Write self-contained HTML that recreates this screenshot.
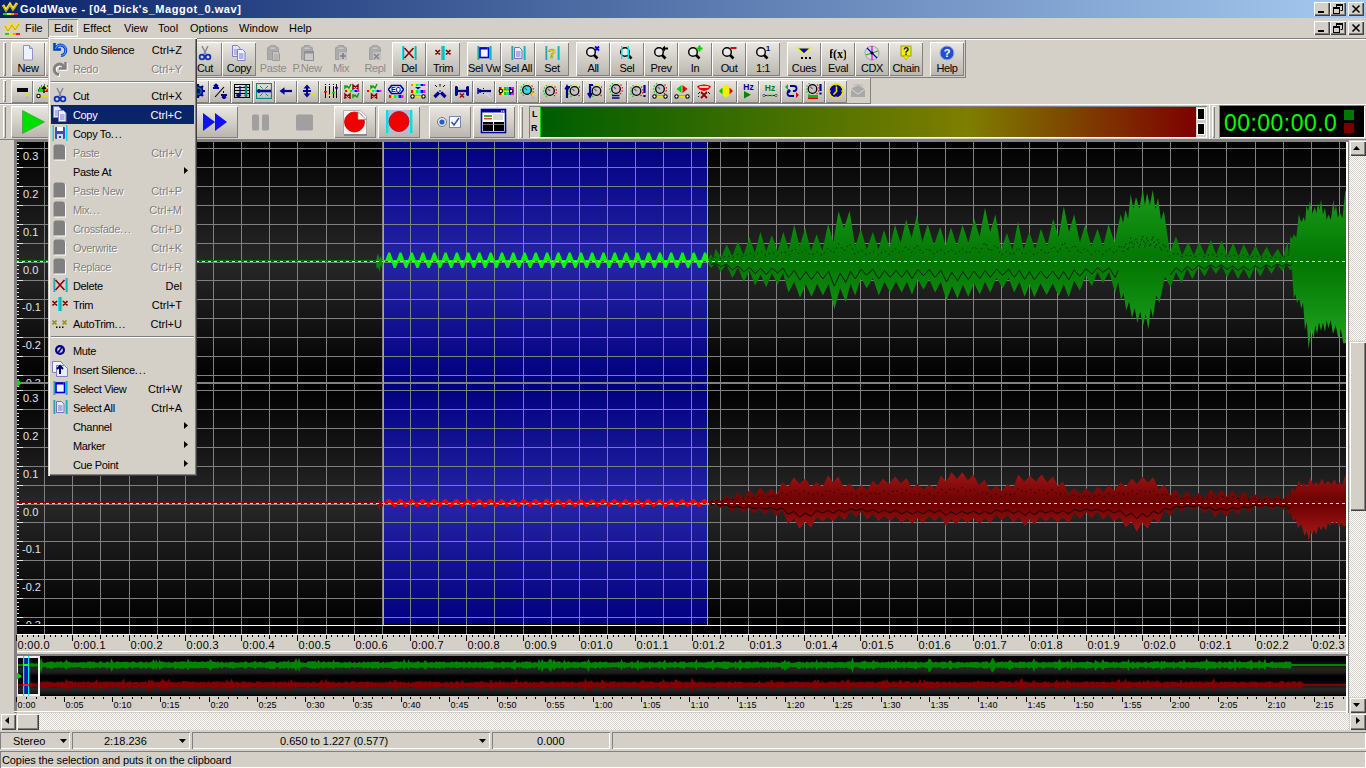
<!DOCTYPE html><html><head><meta charset="utf-8"><style>html,body{margin:0;padding:0;}body{width:1366px;height:768px;overflow:hidden;position:relative;background:#D4D0C8;font-family:"Liberation Sans",sans-serif;font-size:11px;}body div,body svg{position:absolute;}body div div{position:absolute;}</style></head><body><div style="left:0px;top:0px;width:1366px;height:18px;background:linear-gradient(to right,#0A246A,#A6CAF0);"></div>
<svg style="left:2px;top:1px" width="17" height="16" viewBox="0 0 17 16"><polyline points="1,4 4,9 8,3 11,8 15,2" fill="none" stroke="#F8E030" stroke-width="2.6" stroke-linejoin="miter"/><polyline points="1,5 4,10 8,4 11,9 15,3" fill="none" stroke="#C8A000" stroke-width="1"/><rect x="1" y="12" width="4" height="2" fill="#20D020"/><rect x="5" y="12" width="4" height="2" fill="#E8E820"/><rect x="9" y="12" width="3" height="2" fill="#F0A020"/><rect x="12" y="12" width="4" height="2" fill="#F02020"/></svg>
<div style="left:20px;top:2.19px;font-size:11px;line-height:14px;color:#fff;font-weight:bold;letter-spacing:0.55px;white-space:pre">GoldWave - [04_Dick's_Maggot_0.wav]</div>
<div style="left:1314px;top:2px;width:16px;height:14px;background:#D4D0C8;box-shadow:inset 1px 1px 0 #fff, inset -1px -1px 0 #404040, inset -2px -2px 0 #808080;"></div>
<div style="left:1318px;top:11px;width:6px;height:2px;background:#000;"></div>
<div style="left:1330px;top:2px;width:16px;height:14px;background:#D4D0C8;box-shadow:inset 1px 1px 0 #fff, inset -1px -1px 0 #404040, inset -2px -2px 0 #808080;"></div>
<svg style="left:1330px;top:2px" width="16" height="14"><path d="M6.5 3.5h6v5h-2M6.5 3.5v2" fill="none" stroke="#000"/><rect x="6" y="2" width="7" height="2" fill="#000"/><rect x="3.5" y="6.5" width="6" height="5" fill="none" stroke="#000"/><rect x="3" y="5" width="7" height="2" fill="#000"/></svg>
<div style="left:1348px;top:2px;width:16px;height:14px;background:#D4D0C8;box-shadow:inset 1px 1px 0 #fff, inset -1px -1px 0 #404040, inset -2px -2px 0 #808080;"></div>
<svg style="left:1348px;top:2px" width="16" height="14"><path d="M4.5 3.5l7 7M11.5 3.5l-7 7" stroke="#000" stroke-width="1.6"/></svg>
<div style="left:1314px;top:21px;width:16px;height:14px;background:#D4D0C8;box-shadow:inset 1px 1px 0 #fff, inset -1px -1px 0 #404040, inset -2px -2px 0 #808080;"></div>
<div style="left:1318px;top:30px;width:6px;height:2px;background:#000;"></div>
<div style="left:1330px;top:21px;width:16px;height:14px;background:#D4D0C8;box-shadow:inset 1px 1px 0 #fff, inset -1px -1px 0 #404040, inset -2px -2px 0 #808080;"></div>
<svg style="left:1330px;top:21px" width="16" height="14"><path d="M6.5 3.5h6v5h-2M6.5 3.5v2" fill="none" stroke="#000"/><rect x="6" y="2" width="7" height="2" fill="#000"/><rect x="3.5" y="6.5" width="6" height="5" fill="none" stroke="#000"/><rect x="3" y="5" width="7" height="2" fill="#000"/></svg>
<div style="left:1348px;top:21px;width:16px;height:14px;background:#D4D0C8;box-shadow:inset 1px 1px 0 #fff, inset -1px -1px 0 #404040, inset -2px -2px 0 #808080;"></div>
<svg style="left:1348px;top:21px" width="16" height="14"><path d="M4.5 3.5l7 7M11.5 3.5l-7 7" stroke="#000" stroke-width="1.6"/></svg>
<svg style="left:4px;top:21px" width="17" height="16" viewBox="0 0 17 16"><polyline points="1,4 4,9 8,3 11,8 15,2" fill="none" stroke="#F8E030" stroke-width="2.6" stroke-linejoin="miter"/><polyline points="1,5 4,10 8,4 11,9 15,3" fill="none" stroke="#C8A000" stroke-width="1"/><rect x="1" y="12" width="4" height="2" fill="#20D020"/><rect x="5" y="12" width="4" height="2" fill="#E8E820"/><rect x="9" y="12" width="3" height="2" fill="#F0A020"/><rect x="12" y="12" width="4" height="2" fill="#F02020"/></svg>
<div style="left:48px;top:19px;width:30px;height:18px;box-shadow:inset 1px 1px 0 #808080, inset -1px -1px 0 #fff;"></div>
<div style="left:25px;top:21.19px;font-size:11px;line-height:14px;color:#000;white-space:pre">File</div>
<div style="left:54px;top:21.19px;font-size:11px;line-height:14px;color:#000;white-space:pre">Edit</div>
<div style="left:83px;top:21.19px;font-size:11px;line-height:14px;color:#000;white-space:pre">Effect</div>
<div style="left:124px;top:21.19px;font-size:11px;line-height:14px;color:#000;white-space:pre">View</div>
<div style="left:158px;top:21.19px;font-size:11px;line-height:14px;color:#000;white-space:pre">Tool</div>
<div style="left:190px;top:21.19px;font-size:11px;line-height:14px;color:#000;white-space:pre">Options</div>
<div style="left:239px;top:21.19px;font-size:11px;line-height:14px;color:#000;white-space:pre">Window</div>
<div style="left:289px;top:21.19px;font-size:11px;line-height:14px;color:#000;white-space:pre">Help</div>
<div style="left:0px;top:38px;width:1366px;height:1px;background:#808080;"></div>
<div style="left:0px;top:39px;width:1366px;height:1px;background:#fff;"></div>
<div style="left:0px;top:77px;width:966px;height:1px;background:#808080;"></div>
<div style="left:965px;top:40px;width:1px;height:37px;background:#808080;"></div>
<div style="left:3px;top:42px;width:3px;height:34px;box-shadow:inset 1px 1px 0 #fff, inset -1px -1px 0 #808080;"></div>
<div style="left:0px;top:78px;width:871px;height:1px;background:#fff;"></div>
<div style="left:0px;top:103px;width:871px;height:1px;background:#808080;"></div>
<div style="left:0px;top:104px;width:1366px;height:1px;background:#fff;"></div>
<div style="left:870px;top:78px;width:1px;height:26px;background:#808080;"></div>
<div style="left:3px;top:80px;width:3px;height:22px;box-shadow:inset 1px 1px 0 #fff, inset -1px -1px 0 #808080;"></div>
<div style="left:11px;top:42px;width:34px;height:34px;background:linear-gradient(#EBE8E3,#B9B5AD);box-shadow:inset 1px 1px 0 #fff, inset -1px -1px 0 #808080;"></div>
<svg style="left:20px;top:45px" width="16" height="16" viewBox="0 0 16 16"><path d="M3.5 0.5h6l3 3v11.5h-9z" fill="#eef4ff" stroke="#9090c8"/><path d="M9.5 0.5v3h3" fill="#c8c8d8" stroke="#9090c8"/></svg>
<div style="left:11px;top:61.19px;font-size:11px;line-height:14px;color:#000;width:34px;text-align:center;letter-spacing:-0.35px;white-space:pre">New</div>
<div style="left:45px;top:42px;width:34px;height:34px;background:linear-gradient(#EBE8E3,#B9B5AD);box-shadow:inset 1px 1px 0 #fff, inset -1px -1px 0 #808080;"></div>
<svg style="left:54px;top:45px" width="16" height="16" viewBox="0 0 16 16"><path d="M1 4h5l1 1h7v9h-13z" fill="#f0d060" stroke="#806000"/></svg>
<div style="left:45px;top:61.19px;font-size:11px;line-height:14px;color:#000;width:34px;text-align:center;letter-spacing:-0.35px;white-space:pre">Open</div>
<div style="left:79px;top:42px;width:34px;height:34px;background:linear-gradient(#EBE8E3,#B9B5AD);box-shadow:inset 1px 1px 0 #fff, inset -1px -1px 0 #808080;"></div>
<svg style="left:88px;top:45px" width="16" height="16" viewBox="0 0 16 16"><rect x="2" y="2" width="12" height="12" fill="#4040a0"/><rect x="4" y="2" width="8" height="5" fill="#fff"/></svg>
<div style="left:79px;top:61.19px;font-size:11px;line-height:14px;color:#000;width:34px;text-align:center;letter-spacing:-0.35px;white-space:pre">Save</div>
<div style="left:120px;top:42px;width:34px;height:34px;background:linear-gradient(#EBE8E3,#B9B5AD);box-shadow:inset 1px 1px 0 #fff, inset -1px -1px 0 #808080;"></div>
<svg style="left:129px;top:45px" width="16" height="16" viewBox="0 0 16 16"><path d="M3 3v5h5" fill="none" stroke="#2060d0" stroke-width="2.4"/><path d="M4 8a5 5 0 1 1 5 6" fill="none" stroke="#2060d0" stroke-width="2.4"/></svg>
<div style="left:120px;top:61.19px;font-size:11px;line-height:14px;color:#000;width:34px;text-align:center;letter-spacing:-0.35px;white-space:pre">Undo</div>
<div style="left:188px;top:42px;width:34px;height:34px;background:linear-gradient(#EBE8E3,#B9B5AD);box-shadow:inset 1px 1px 0 #fff, inset -1px -1px 0 #808080;"></div>
<svg style="left:197px;top:45px" width="16" height="16" viewBox="0 0 16 16"><path d="M5 1l4 8M11 1l-4 8" stroke="#8080a0" stroke-width="1.4"/><circle cx="5" cy="12" r="2.4" fill="none" stroke="#1030c0" stroke-width="1.8"/><circle cx="11" cy="12" r="2.4" fill="none" stroke="#1030c0" stroke-width="1.8"/></svg>
<div style="left:188px;top:61.19px;font-size:11px;line-height:14px;color:#000;width:34px;text-align:center;letter-spacing:-0.35px;white-space:pre">Cut</div>
<div style="left:222px;top:42px;width:34px;height:34px;background:linear-gradient(#EBE8E3,#B9B5AD);box-shadow:inset 1px 1px 0 #fff, inset -1px -1px 0 #808080;"></div>
<svg style="left:231px;top:45px" width="16" height="16" viewBox="0 0 16 16"><path d="M1.5 0.5h5l2.5 2.5v8.5h-7.5z" fill="#dfe6ff" stroke="#8080c8"/><path d="M3 5h4M3 7h4M3 9h4" stroke="#8080c8" stroke-width="0.9"/><path d="M6.5 4.5h5l2.5 2.5v8.5h-7.5z" fill="#eef2ff" stroke="#8080c8"/><path d="M8 9h4.5M8 11h4.5M8 13h4.5" stroke="#6a6ab8" stroke-width="0.9"/></svg>
<div style="left:222px;top:61.19px;font-size:11px;line-height:14px;color:#000;width:34px;text-align:center;letter-spacing:-0.35px;white-space:pre">Copy</div>
<svg style="left:265px;top:45px" width="16" height="16" viewBox="0 0 16 16"><path d="M2.5 3.5q0-1.5 1.5-1.5h1.5v-1q0-1 1-1h3q1 0 1 1v1h1.5q1.5 0 1.5 1.5v11h-11z" fill="#ABABAB" stroke="#989898" stroke-width="0.8"/><rect x="5.5" y="2.5" width="5" height="1.5" fill="#c8c8c8"/><path d="M7.5 6.5h5l2 2v7h-7z" fill="#c4c4c4" stroke="#999"/><path d="M9 10h4.5M9 12h4.5M9 14h4.5" stroke="#a0a0a0" stroke-width="0.8"/></svg>
<div style="left:256px;top:61.19px;font-size:11px;line-height:14px;color:#8C8C8C;width:34px;text-align:center;letter-spacing:-0.35px;white-space:pre">Paste</div>
<svg style="left:299px;top:45px" width="16" height="16" viewBox="0 0 16 16"><path d="M2.5 3.5q0-1.5 1.5-1.5h1.5v-1q0-1 1-1h3q1 0 1 1v1h1.5q1.5 0 1.5 1.5v11h-11z" fill="#ABABAB" stroke="#989898" stroke-width="0.8"/><rect x="5.5" y="2.5" width="5" height="1.5" fill="#c8c8c8"/><rect x="5.5" y="6.5" width="9" height="9" fill="#c8c8c8" stroke="#909090"/><rect x="5.5" y="6.5" width="9" height="2" fill="#909090"/></svg>
<div style="left:290px;top:61.19px;font-size:11px;line-height:14px;color:#8C8C8C;width:34px;text-align:center;letter-spacing:-0.35px;white-space:pre">P.New</div>
<svg style="left:333px;top:45px" width="16" height="16" viewBox="0 0 16 16"><path d="M2.5 3.5q0-1.5 1.5-1.5h1.5v-1q0-1 1-1h3q1 0 1 1v1h1.5q1.5 0 1.5 1.5v11h-11z" fill="#ABABAB" stroke="#989898" stroke-width="0.8"/><rect x="5.5" y="2.5" width="5" height="1.5" fill="#c8c8c8"/><rect x="6" y="7" width="8" height="8" fill="#c0c0c0"/><path d="M10 8v6M7 11h6" stroke="#808080" stroke-width="1.6"/></svg>
<div style="left:324px;top:61.19px;font-size:11px;line-height:14px;color:#8C8C8C;width:34px;text-align:center;letter-spacing:-0.35px;white-space:pre">Mix</div>
<svg style="left:367px;top:45px" width="16" height="16" viewBox="0 0 16 16"><path d="M2.5 3.5q0-1.5 1.5-1.5h1.5v-1q0-1 1-1h3q1 0 1 1v1h1.5q1.5 0 1.5 1.5v11h-11z" fill="#ABABAB" stroke="#989898" stroke-width="0.8"/><rect x="5.5" y="2.5" width="5" height="1.5" fill="#c8c8c8"/><rect x="6" y="7" width="8" height="8" fill="#c0c0c0"/><path d="M7 9l5 5M12 9l-5 5" stroke="#808080" stroke-width="1.2"/></svg>
<div style="left:358px;top:61.19px;font-size:11px;line-height:14px;color:#8C8C8C;width:34px;text-align:center;letter-spacing:-0.35px;white-space:pre">Repl</div>
<div style="left:392px;top:42px;width:34px;height:34px;background:linear-gradient(#EBE8E3,#B9B5AD);box-shadow:inset 1px 1px 0 #fff, inset -1px -1px 0 #808080;"></div>
<svg style="left:401px;top:45px" width="16" height="16" viewBox="0 0 16 16"><rect x="1" y="1" width="1.6" height="14" fill="#00E8F0"/><rect x="13.4" y="1" width="1.6" height="14" fill="#00E8F0"/><rect x="2.4" y="1" width="0.8" height="14" fill="#008080"/><rect x="14.6" y="1" width="0.8" height="14" fill="#008080"/><path d="M3.5 3l9 10M12.5 3l-9 10" stroke="#900000" stroke-width="1.6"/></svg>
<div style="left:392px;top:61.19px;font-size:11px;line-height:14px;color:#000;width:34px;text-align:center;letter-spacing:-0.35px;white-space:pre">Del</div>
<div style="left:426px;top:42px;width:34px;height:34px;background:linear-gradient(#EBE8E3,#B9B5AD);box-shadow:inset 1px 1px 0 #fff, inset -1px -1px 0 #808080;"></div>
<svg style="left:435px;top:45px" width="16" height="16" viewBox="0 0 16 16"><rect x="6" y="1" width="1.6" height="14" fill="#00E8F0"/><rect x="8.6" y="1" width="1.6" height="14" fill="#00E8F0"/><rect x="7.6" y="1" width="1" height="14" fill="#008080"/><path d="M0.5 5l4.5 4.5M5 5l-4.5 4.5M11 5l4.5 4.5M15.5 5l-4.5 4.5" stroke="#900000" stroke-width="1.7"/></svg>
<div style="left:426px;top:61.19px;font-size:11px;line-height:14px;color:#000;width:34px;text-align:center;letter-spacing:-0.35px;white-space:pre">Trim</div>
<div style="left:467px;top:42px;width:34px;height:34px;background:linear-gradient(#EBE8E3,#B9B5AD);box-shadow:inset 1px 1px 0 #fff, inset -1px -1px 0 #808080;"></div>
<svg style="left:476px;top:45px" width="16" height="16" viewBox="0 0 16 16"><rect x="1" y="1" width="1.6" height="14" fill="#00E8F0"/><rect x="13.4" y="1" width="1.6" height="14" fill="#00E8F0"/><rect x="2.4" y="1" width="0.8" height="14" fill="#008080"/><rect x="14.6" y="1" width="0.8" height="14" fill="#008080"/><rect x="4" y="3" width="8.5" height="9.5" fill="#f0f4ff" stroke="#0000e0" stroke-width="1.6"/><rect x="4" y="2.5" width="8.5" height="2" fill="#0000d0"/><rect x="11" y="2.6" width="1" height="1" fill="#f04040"/></svg>
<div style="left:467px;top:61.19px;font-size:11px;line-height:14px;color:#000;width:34px;text-align:center;letter-spacing:-0.35px;white-space:pre">Sel Vw</div>
<div style="left:501px;top:42px;width:34px;height:34px;background:linear-gradient(#EBE8E3,#B9B5AD);box-shadow:inset 1px 1px 0 #fff, inset -1px -1px 0 #808080;"></div>
<svg style="left:510px;top:45px" width="16" height="16" viewBox="0 0 16 16"><rect x="1" y="1" width="1.6" height="14" fill="#00E8F0"/><rect x="13.4" y="1" width="1.6" height="14" fill="#00E8F0"/><rect x="2.4" y="1" width="0.8" height="14" fill="#008080"/><rect x="14.6" y="1" width="0.8" height="14" fill="#008080"/><path d="M4.5 2.5h5l2.5 2.5v8.5h-7.5z" fill="#e8ecff" stroke="#7070c0"/><path d="M6 7h4.5M6 9h4.5M6 11h4.5" stroke="#7070c0"/></svg>
<div style="left:501px;top:61.19px;font-size:11px;line-height:14px;color:#000;width:34px;text-align:center;letter-spacing:-0.35px;white-space:pre">Sel All</div>
<div style="left:535px;top:42px;width:34px;height:34px;background:linear-gradient(#EBE8E3,#B9B5AD);box-shadow:inset 1px 1px 0 #fff, inset -1px -1px 0 #808080;"></div>
<svg style="left:544px;top:45px" width="16" height="16" viewBox="0 0 16 16"><rect x="1" y="1" width="1.6" height="14" fill="#00E8F0"/><rect x="13.4" y="1" width="1.6" height="14" fill="#00E8F0"/><rect x="2.4" y="1" width="0.8" height="14" fill="#008080"/><rect x="14.6" y="1" width="0.8" height="14" fill="#008080"/><text x="8" y="12.5" text-anchor="middle" font-family="Liberation Sans" font-weight="bold" font-size="13" fill="#F0F000" stroke="#808000" stroke-width="0.4">?</text></svg>
<div style="left:535px;top:61.19px;font-size:11px;line-height:14px;color:#000;width:34px;text-align:center;letter-spacing:-0.35px;white-space:pre">Set</div>
<div style="left:576px;top:42px;width:34px;height:34px;background:linear-gradient(#EBE8E3,#B9B5AD);box-shadow:inset 1px 1px 0 #fff, inset -1px -1px 0 #808080;"></div>
<svg style="left:585px;top:45px" width="16" height="16" viewBox="0 0 16 16"><circle cx="6" cy="7" r="4.3" fill="#e8e8e8" stroke="#000" stroke-width="1.4"/><path d="M9 10l3.5 3.5" stroke="#000" stroke-width="2.6"/><path d="M5 5.5l1.5-1" stroke="#fff" stroke-width="1"/><path d="M10 1.5l4 4M14 1.5l-4 4" stroke="#0000ff" stroke-width="1.8"/></svg>
<div style="left:576px;top:61.19px;font-size:11px;line-height:14px;color:#000;width:34px;text-align:center;letter-spacing:-0.35px;white-space:pre">All</div>
<div style="left:610px;top:42px;width:34px;height:34px;background:linear-gradient(#EBE8E3,#B9B5AD);box-shadow:inset 1px 1px 0 #fff, inset -1px -1px 0 #808080;"></div>
<svg style="left:619px;top:45px" width="16" height="16" viewBox="0 0 16 16"><circle cx="6" cy="7" r="4.3" fill="#e8e8e8" stroke="#000" stroke-width="1.4"/><path d="M9 10l3.5 3.5" stroke="#000" stroke-width="2.6"/><path d="M5 5.5l1.5-1" stroke="#fff" stroke-width="1"/><rect x="2" y="1" width="1.5" height="13" fill="#00e8f0"/><rect x="8.5" y="1" width="1.5" height="13" fill="#00e8f0"/></svg>
<div style="left:610px;top:61.19px;font-size:11px;line-height:14px;color:#000;width:34px;text-align:center;letter-spacing:-0.35px;white-space:pre">Sel</div>
<div style="left:644px;top:42px;width:34px;height:34px;background:linear-gradient(#EBE8E3,#B9B5AD);box-shadow:inset 1px 1px 0 #fff, inset -1px -1px 0 #808080;"></div>
<svg style="left:653px;top:45px" width="16" height="16" viewBox="0 0 16 16"><circle cx="6" cy="7" r="4.3" fill="#e8e8e8" stroke="#000" stroke-width="1.4"/><path d="M9 10l3.5 3.5" stroke="#000" stroke-width="2.6"/><path d="M5 5.5l1.5-1" stroke="#fff" stroke-width="1"/><path d="M10 3.5h5" stroke="#000" stroke-width="2"/><path d="M9 3.5l3-3v6z" fill="#000"/></svg>
<div style="left:644px;top:61.19px;font-size:11px;line-height:14px;color:#000;width:34px;text-align:center;letter-spacing:-0.35px;white-space:pre">Prev</div>
<div style="left:678px;top:42px;width:34px;height:34px;background:linear-gradient(#EBE8E3,#B9B5AD);box-shadow:inset 1px 1px 0 #fff, inset -1px -1px 0 #808080;"></div>
<svg style="left:687px;top:45px" width="16" height="16" viewBox="0 0 16 16"><circle cx="6" cy="7" r="4.3" fill="#e8e8e8" stroke="#000" stroke-width="1.4"/><path d="M9 10l3.5 3.5" stroke="#000" stroke-width="2.6"/><path d="M5 5.5l1.5-1" stroke="#fff" stroke-width="1"/><path d="M12.5 0.5v6M9.5 3.5h6" stroke="#00d000" stroke-width="2.2"/></svg>
<div style="left:678px;top:61.19px;font-size:11px;line-height:14px;color:#000;width:34px;text-align:center;letter-spacing:-0.35px;white-space:pre">In</div>
<div style="left:712px;top:42px;width:34px;height:34px;background:linear-gradient(#EBE8E3,#B9B5AD);box-shadow:inset 1px 1px 0 #fff, inset -1px -1px 0 #808080;"></div>
<svg style="left:721px;top:45px" width="16" height="16" viewBox="0 0 16 16"><circle cx="6" cy="7" r="4.3" fill="#e8e8e8" stroke="#000" stroke-width="1.4"/><path d="M9 10l3.5 3.5" stroke="#000" stroke-width="2.6"/><path d="M5 5.5l1.5-1" stroke="#fff" stroke-width="1"/><path d="M9.5 3h6" stroke="#e00000" stroke-width="2"/></svg>
<div style="left:712px;top:61.19px;font-size:11px;line-height:14px;color:#000;width:34px;text-align:center;letter-spacing:-0.35px;white-space:pre">Out</div>
<div style="left:746px;top:42px;width:34px;height:34px;background:linear-gradient(#EBE8E3,#B9B5AD);box-shadow:inset 1px 1px 0 #fff, inset -1px -1px 0 #808080;"></div>
<svg style="left:755px;top:45px" width="16" height="16" viewBox="0 0 16 16"><circle cx="6" cy="7" r="4.3" fill="#e8e8e8" stroke="#000" stroke-width="1.4"/><path d="M9 10l3.5 3.5" stroke="#000" stroke-width="2.6"/><path d="M5 5.5l1.5-1" stroke="#fff" stroke-width="1"/><text x="13" y="6" text-anchor="middle" font-family="Liberation Sans" font-weight="bold" font-size="8" fill="#000090">1</text></svg>
<div style="left:746px;top:61.19px;font-size:11px;line-height:14px;color:#000;width:34px;text-align:center;letter-spacing:-0.35px;white-space:pre">1:1</div>
<div style="left:787px;top:42px;width:34px;height:34px;background:linear-gradient(#EBE8E3,#B9B5AD);box-shadow:inset 1px 1px 0 #fff, inset -1px -1px 0 #808080;"></div>
<svg style="left:796px;top:45px" width="16" height="16" viewBox="0 0 16 16"><path d="M1.5 3h13l-6.5 6z" fill="#0000e0" stroke="#f0f000" stroke-width="1.2"/><rect x="5" y="12" width="2" height="2" fill="#000"/><rect x="9" y="12" width="2" height="2" fill="#000"/><rect x="13" y="12" width="2" height="2" fill="#000"/></svg>
<div style="left:787px;top:61.19px;font-size:11px;line-height:14px;color:#000;width:34px;text-align:center;letter-spacing:-0.35px;white-space:pre">Cues</div>
<div style="left:821px;top:42px;width:34px;height:34px;background:linear-gradient(#EBE8E3,#B9B5AD);box-shadow:inset 1px 1px 0 #fff, inset -1px -1px 0 #808080;"></div>
<svg style="left:830px;top:45px" width="16" height="16" viewBox="0 0 16 16"><text x="8" y="13" text-anchor="middle" font-family="Liberation Serif" font-weight="bold" font-size="12" fill="#000">f(x)</text></svg>
<div style="left:821px;top:61.19px;font-size:11px;line-height:14px;color:#000;width:34px;text-align:center;letter-spacing:-0.35px;white-space:pre">Eval</div>
<div style="left:855px;top:42px;width:34px;height:34px;background:linear-gradient(#EBE8E3,#B9B5AD);box-shadow:inset 1px 1px 0 #fff, inset -1px -1px 0 #808080;"></div>
<svg style="left:864px;top:45px" width="16" height="16" viewBox="0 0 16 16"><circle cx="8" cy="8" r="7" fill="#d8d8d8" stroke="#a0a0a0"/><path d="M3 3l10 10" stroke="#0000d0" stroke-width="1.3"/><path d="M8 1v14" stroke="#f000f0" stroke-width="1.3"/><path d="M2 10l12-4" stroke="#00c000" stroke-width="1.3"/><circle cx="8" cy="8" r="1.5" fill="#000"/></svg>
<div style="left:855px;top:61.19px;font-size:11px;line-height:14px;color:#000;width:34px;text-align:center;letter-spacing:-0.35px;white-space:pre">CDX</div>
<div style="left:889px;top:42px;width:34px;height:34px;background:linear-gradient(#EBE8E3,#B9B5AD);box-shadow:inset 1px 1px 0 #fff, inset -1px -1px 0 #808080;"></div>
<svg style="left:898px;top:45px" width="16" height="16" viewBox="0 0 16 16"><rect x="3" y="1" width="10" height="10" fill="#f8f000" stroke="#a0a000"/><text x="8" y="10" text-anchor="middle" font-family="Liberation Sans" font-weight="bold" font-size="10" fill="#000080">?</text><path d="M5 11h6l-3 4z" fill="#f8f000" stroke="#a0a000" stroke-width="0.6"/></svg>
<div style="left:889px;top:61.19px;font-size:11px;line-height:14px;color:#000;width:34px;text-align:center;letter-spacing:-0.35px;white-space:pre">Chain</div>
<div style="left:930px;top:42px;width:34px;height:34px;background:linear-gradient(#EBE8E3,#B9B5AD);box-shadow:inset 1px 1px 0 #fff, inset -1px -1px 0 #808080;"></div>
<svg style="left:939px;top:45px" width="16" height="16" viewBox="0 0 16 16"><circle cx="8" cy="8" r="7" fill="#2050d0" stroke="#9ab0e8" stroke-width="1"/><text x="8" y="12.3" text-anchor="middle" font-family="Liberation Sans" font-weight="bold" font-size="11" fill="#fff">?</text></svg>
<div style="left:930px;top:61.19px;font-size:11px;line-height:14px;color:#000;width:34px;text-align:center;letter-spacing:-0.35px;white-space:pre">Help</div>
<div style="left:11px;top:80px;width:22px;height:23px;background:linear-gradient(#EBE8E3,#B9B5AD);box-shadow:inset 1px 1px 0 #fff, inset -1px -1px 0 #808080;"></div>
<svg style="left:14px;top:83px" width="16" height="16" viewBox="0 0 16 16"><rect x="3" y="5" width="11" height="4" fill="#000"/><path d="M11 11h4l-2 2.5z" fill="#f0e000"/><path d="M13 13.5v2" stroke="#a0a0a0"/></svg>
<div style="left:33px;top:80px;width:22px;height:23px;background:linear-gradient(#EBE8E3,#B9B5AD);box-shadow:inset 1px 1px 0 #fff, inset -1px -1px 0 #808080;"></div>
<svg style="left:36px;top:83px" width="16" height="16" viewBox="0 0 16 16"><path d="M2 9a6 6 0 0 1 12 0z" fill="#f0f000"/><path d="M2 9a6 6 0 0 1 3-5.2l3 5.2z" fill="#00e000"/><path d="M14 9a6 6 0 0 0 -1.6-4l-4.4 4z" fill="#f00000"/><path d="M3 5h1M2 7h1M5 3h1M8 2h1M11 3h1" stroke="#000" stroke-width="1"/><path d="M8 10v-6M6 6l2-2.5 2 2.5" stroke="#000" stroke-width="1.4" fill="none"/><path d="M3 13h12" stroke="#e8e000" stroke-width="1.8"/><circle cx="2.5" cy="13" r="1.7" fill="#fff" stroke="#000" stroke-width="1.1"/></svg>
<div style="left:55px;top:80px;width:22px;height:23px;background:linear-gradient(#EBE8E3,#B9B5AD);box-shadow:inset 1px 1px 0 #fff, inset -1px -1px 0 #808080;"></div>
<svg style="left:58px;top:83px" width="16" height="16" viewBox="0 0 16 16"><path d="M3 3l4 4" stroke="#0000a0" stroke-width="2"/></svg>
<div style="left:77px;top:80px;width:22px;height:23px;background:linear-gradient(#EBE8E3,#B9B5AD);box-shadow:inset 1px 1px 0 #fff, inset -1px -1px 0 #808080;"></div>
<svg style="left:80px;top:83px" width="16" height="16" viewBox="0 0 16 16"><rect x="2" y="3" width="12" height="10" fill="#e0e0ff" stroke="#000080"/></svg>
<div style="left:99px;top:80px;width:22px;height:23px;background:linear-gradient(#EBE8E3,#B9B5AD);box-shadow:inset 1px 1px 0 #fff, inset -1px -1px 0 #808080;"></div>
<svg style="left:102px;top:83px" width="16" height="16" viewBox="0 0 16 16"><path d="M8 2v12M3 8h10" stroke="#000080" stroke-width="2"/></svg>
<div style="left:121px;top:80px;width:22px;height:23px;background:linear-gradient(#EBE8E3,#B9B5AD);box-shadow:inset 1px 1px 0 #fff, inset -1px -1px 0 #808080;"></div>
<svg style="left:124px;top:83px" width="16" height="16" viewBox="0 0 16 16"><circle cx="8" cy="8" r="5" fill="#00a0a0"/></svg>
<div style="left:143px;top:80px;width:22px;height:23px;background:linear-gradient(#EBE8E3,#B9B5AD);box-shadow:inset 1px 1px 0 #fff, inset -1px -1px 0 #808080;"></div>
<svg style="left:146px;top:83px" width="16" height="16" viewBox="0 0 16 16"><rect x="2" y="2" width="12" height="12" fill="#c0c0ff"/></svg>
<div style="left:165px;top:80px;width:22px;height:23px;background:linear-gradient(#EBE8E3,#B9B5AD);box-shadow:inset 1px 1px 0 #fff, inset -1px -1px 0 #808080;"></div>
<svg style="left:168px;top:83px" width="16" height="16" viewBox="0 0 16 16"><path d="M2 12l12-8" stroke="#000" stroke-width="2"/></svg>
<div style="left:187px;top:80px;width:22px;height:23px;background:linear-gradient(#EBE8E3,#B9B5AD);box-shadow:inset 1px 1px 0 #fff, inset -1px -1px 0 #808080;"></div>
<svg style="left:190px;top:83px" width="16" height="16" viewBox="0 0 16 16"><circle cx="8" cy="8" r="5.5" fill="#000090"/><path d="M8 1v14M1 8h14M3 3l10 10M13 3l-10 10" stroke="#000090" stroke-width="2.2"/><circle cx="8" cy="8" r="3.2" fill="none" stroke="#008888" stroke-width="1.2"/></svg>
<div style="left:209px;top:80px;width:22px;height:23px;background:linear-gradient(#EBE8E3,#B9B5AD);box-shadow:inset 1px 1px 0 #fff, inset -1px -1px 0 #808080;"></div>
<svg style="left:212px;top:83px" width="16" height="16" viewBox="0 0 16 16"><path d="M1 5h6M4 5v-3M2 3.5l2-2 2 2" stroke="#000090" stroke-width="1.8" fill="none"/><path d="M9 12h6M12 12v3M10 13.5l2 2 2-2" stroke="#000090" stroke-width="1.8" fill="none"/><path d="M12 9h-1" stroke="#000090" stroke-width="1.8"/><path d="M3 14l9-10" stroke="#000" stroke-width="1.1"/></svg>
<div style="left:231px;top:80px;width:22px;height:23px;background:linear-gradient(#EBE8E3,#B9B5AD);box-shadow:inset 1px 1px 0 #fff, inset -1px -1px 0 #808080;"></div>
<svg style="left:234px;top:83px" width="16" height="16" viewBox="0 0 16 16"><rect x="0.5" y="1.5" width="15" height="13" fill="none" stroke="#000" stroke-width="1"/><path d="M1 4.5h14M1 7.5h14M1 10.5h14" stroke="#000" stroke-width="1"/><path d="M12 2v12" stroke="#008888" stroke-width="2.2"/><path d="M10 4l2-2.5 2 2.5M10 12l2 2.5 2-2.5" fill="#008888"/><path d="M6 3v10" stroke="#000090" stroke-width="1.3"/><ellipse cx="4.5" cy="12.5" rx="2.3" ry="1.7" fill="#000090"/></svg>
<div style="left:253px;top:80px;width:22px;height:23px;background:linear-gradient(#EBE8E3,#B9B5AD);box-shadow:inset 1px 1px 0 #fff, inset -1px -1px 0 #808080;"></div>
<svg style="left:256px;top:83px" width="16" height="16" viewBox="0 0 16 16"><rect x="0.5" y="0.5" width="15" height="15" fill="none" stroke="#008888" stroke-width="1.2"/><path d="M1 8h14" stroke="#000090" stroke-width="2.6"/><path d="M3 6v4" stroke="#000090" stroke-width="1.6"/><path d="M4 3l2.5 2.5M12 3l-2.5 2.5M4 13l2.5-2.5M12 13l-2.5-2.5" stroke="#008888" stroke-width="1"/></svg>
<div style="left:275px;top:80px;width:22px;height:23px;background:linear-gradient(#EBE8E3,#B9B5AD);box-shadow:inset 1px 1px 0 #fff, inset -1px -1px 0 #808080;"></div>
<svg style="left:278px;top:83px" width="16" height="16" viewBox="0 0 16 16"><path d="M5 8h9" stroke="#000090" stroke-width="2.2"/><path d="M1.5 8l5-3.8v7.6z" fill="#000090"/></svg>
<div style="left:297px;top:80px;width:22px;height:23px;background:linear-gradient(#EBE8E3,#B9B5AD);box-shadow:inset 1px 1px 0 #fff, inset -1px -1px 0 #808080;"></div>
<svg style="left:300px;top:83px" width="16" height="16" viewBox="0 0 16 16"><path d="M7 1.5l-3.5 4h7zM7 14.5l-3.5-4h7z" fill="#000090"/><rect x="6" y="5" width="2" height="6" fill="#000090"/><rect x="3" y="7" width="8" height="2" fill="#000090"/><path d="M11.5 11h4l-2 2.5z" fill="#f0e000"/></svg>
<div style="left:319px;top:80px;width:22px;height:23px;background:linear-gradient(#EBE8E3,#B9B5AD);box-shadow:inset 1px 1px 0 #fff, inset -1px -1px 0 #808080;"></div>
<svg style="left:322px;top:83px" width="16" height="16" viewBox="0 0 16 16"><path d="M3.5 1v14M7.5 1v14M11.5 1v14M14.5 1v14" stroke="#000" stroke-width="1"/><path d="M3.5 2v1M7.5 2v1M11.5 2v1" stroke="#fff" stroke-width="1"/><rect x="2" y="8" width="3" height="1.6" fill="#f00"/><rect x="6" y="11.5" width="3" height="1.6" fill="#f0f000"/><rect x="10" y="9" width="3" height="1.6" fill="#0c0"/><rect x="13" y="4" width="3" height="1.6" fill="#00f"/></svg>
<div style="left:341px;top:80px;width:22px;height:23px;background:linear-gradient(#EBE8E3,#B9B5AD);box-shadow:inset 1px 1px 0 #fff, inset -1px -1px 0 #808080;"></div>
<svg style="left:344px;top:83px" width="16" height="16" viewBox="0 0 16 16"><path d="M1 2v3l2-2 2 2 2-4" fill="none" stroke="#00a000" stroke-width="1.4"/><path d="M9 2l5 4v-4l-5 4z" fill="none" stroke="#900000" stroke-width="1.5"/><rect x="1" y="7" width="2.4" height="2" fill="#f00"/><rect x="3.4" y="7" width="2.4" height="2" fill="#ff0"/><rect x="5.8" y="7" width="2.4" height="2" fill="#0f0"/><rect x="8.2" y="7" width="2.4" height="2" fill="#0ff"/><rect x="10.6" y="7" width="2.4" height="2" fill="#00f"/><rect x="13" y="7" width="2.4" height="2" fill="#f0f"/><path d="M1 11l5 4v-4l-5 4z" fill="none" stroke="#900000" stroke-width="1.5"/><path d="M9 11v3l2-2 2 2 2-4" fill="none" stroke="#00a000" stroke-width="1.4"/></svg>
<div style="left:363px;top:80px;width:22px;height:23px;background:linear-gradient(#EBE8E3,#B9B5AD);box-shadow:inset 1px 1px 0 #fff, inset -1px -1px 0 #808080;"></div>
<svg style="left:366px;top:83px" width="16" height="16" viewBox="0 0 16 16"><path d="M5 2v3l2-2 2 2 2-4" fill="none" stroke="#00a000" stroke-width="1.4"/><rect x="1" y="7" width="2.4" height="2" fill="#f00"/><rect x="3.4" y="7" width="2.4" height="2" fill="#ff0"/><rect x="5.8" y="7" width="2.4" height="2" fill="#0f0"/><rect x="8.2" y="7" width="2.4" height="2" fill="#0ff"/><rect x="10.6" y="7" width="2.4" height="2" fill="#00f"/><rect x="13" y="7" width="2.4" height="2" fill="#f0f"/><path d="M5.5 11l5 4v-4l-5 4z" fill="none" stroke="#900000" stroke-width="1.5"/></svg>
<div style="left:385px;top:80px;width:22px;height:23px;background:linear-gradient(#EBE8E3,#B9B5AD);box-shadow:inset 1px 1px 0 #fff, inset -1px -1px 0 #808080;"></div>
<svg style="left:388px;top:83px" width="16" height="16" viewBox="0 0 16 16"><path d="M0.5 6.5l3-4h9l3 4-3 4h-9z" fill="#fff" stroke="#000090" stroke-width="1.6"/><text x="8" y="9.3" text-anchor="middle" font-family="Liberation Sans" font-weight="bold" font-size="7" fill="#000090">EQ</text><rect x="1" y="12" width="2.4" height="3" fill="#f00"/><rect x="3.4" y="12" width="2.4" height="3" fill="#ff0"/><rect x="5.8" y="12" width="2.4" height="3" fill="#0f0"/><rect x="8.2" y="12" width="2.4" height="3" fill="#0ff"/><rect x="10.6" y="12" width="2.4" height="3" fill="#00f"/><rect x="13" y="12" width="2.4" height="3" fill="#f0f"/></svg>
<div style="left:407px;top:80px;width:22px;height:23px;background:linear-gradient(#EBE8E3,#B9B5AD);box-shadow:inset 1px 1px 0 #fff, inset -1px -1px 0 #808080;"></div>
<svg style="left:410px;top:83px" width="16" height="16" viewBox="0 0 16 16"><rect x="1" y="1" width="2.4" height="2" fill="#f80"/><rect x="3.4" y="1" width="2.4" height="2" fill="#ff0"/><rect x="5.8" y="1" width="2.4" height="2" fill="#0f0"/><rect x="8.2" y="1" width="2.4" height="2" fill="#0ff"/><rect x="10.6" y="1" width="2.4" height="2" fill="#00f"/><rect x="13" y="1" width="2.4" height="2" fill="#f0f"/><path d="M5 4h6l-3 2.5z" fill="#0000d0"/><rect x="1" y="7" width="2.4" height="3" fill="#f00"/><rect x="3.4" y="7" width="2.4" height="3" fill="#ff0"/><rect x="5.8" y="7" width="2.4" height="3" fill="#0f0"/><rect x="8.2" y="7" width="2.4" height="3" fill="#0ff"/><rect x="10.6" y="7" width="2.4" height="3" fill="#00f"/><rect x="13" y="7" width="2.4" height="3" fill="#f0f"/><path d="M3 13.5h10" stroke="#e8e000" stroke-width="1.8"/><path d="M3 12.5h10" stroke="#909000" stroke-width="0.5"/><circle cx="2.5" cy="13.5" r="1.7" fill="#fff" stroke="#000" stroke-width="1.1"/><circle cx="13.5" cy="13.5" r="1.7" fill="#fff" stroke="#000" stroke-width="1.1"/></svg>
<div style="left:429px;top:80px;width:22px;height:23px;background:linear-gradient(#EBE8E3,#B9B5AD);box-shadow:inset 1px 1px 0 #fff, inset -1px -1px 0 #808080;"></div>
<svg style="left:432px;top:83px" width="16" height="16" viewBox="0 0 16 16"><path d="M2.5 14l4.5-4.5M13.5 14l-4.5-4.5" stroke="#000090" stroke-width="3.2"/><path d="M3 2l2 2M13 2l-2 2M8 1v2.5" stroke="#000" stroke-width="1"/><rect x="7.3" y="7.3" width="1.4" height="1.4" fill="#000090"/></svg>
<div style="left:451px;top:80px;width:22px;height:23px;background:linear-gradient(#EBE8E3,#B9B5AD);box-shadow:inset 1px 1px 0 #fff, inset -1px -1px 0 #808080;"></div>
<svg style="left:454px;top:83px" width="16" height="16" viewBox="0 0 16 16"><path d="M1 8h14" stroke="#000090" stroke-width="2.4"/><rect x="1" y="3" width="2.5" height="10" rx="1" fill="#000090"/><rect x="12.5" y="3" width="2.5" height="10" rx="1" fill="#000090"/><path d="M3.5 4v8M12.5 4v8" stroke="#000090" stroke-width="1"/><path d="M6 10.5l4 4M10 10.5l-4 4" stroke="#b00000" stroke-width="1.6"/></svg>
<div style="left:473px;top:80px;width:22px;height:23px;background:linear-gradient(#EBE8E3,#B9B5AD);box-shadow:inset 1px 1px 0 #fff, inset -1px -1px 0 #808080;"></div>
<svg style="left:476px;top:83px" width="16" height="16" viewBox="0 0 16 16"><path d="M2 8h13" stroke="#000090" stroke-width="2.2"/><path d="M2 5v6M4 6v4M6 7v2" stroke="#000090" stroke-width="1.4"/><path d="M9 6l6-5M9 10l6 5" stroke="#e0e0e0" stroke-width="1"/><path d="M8 6l-1-1M8 10l-1 1" stroke="#000090" stroke-width="1"/></svg>
<div style="left:495px;top:80px;width:22px;height:23px;background:linear-gradient(#EBE8E3,#B9B5AD);box-shadow:inset 1px 1px 0 #fff, inset -1px -1px 0 #808080;"></div>
<svg style="left:498px;top:83px" width="16" height="16" viewBox="0 0 16 16"><rect x="1" y="4" width="15" height="8" fill="#ff0"/><rect x="1" y="4" width="2.5" height="8" fill="#f00"/><rect x="6" y="4" width="2.5" height="8" fill="#0c0"/><rect x="8.5" y="4" width="2.5" height="8" fill="#0cc"/><rect x="11" y="4" width="2.5" height="8" fill="#00f"/><rect x="13.5" y="4" width="2.5" height="8" fill="#f0f"/><path d="M3 8h10" stroke="#e8e000" stroke-width="2"/><path d="M3 7h10" stroke="#606000" stroke-width="0.6"/><circle cx="2.8" cy="8" r="1.7" fill="#fff" stroke="#000" stroke-width="1.1"/><circle cx="13.2" cy="8" r="1.7" fill="#fff" stroke="#000" stroke-width="1.1"/></svg>
<div style="left:517px;top:80px;width:22px;height:23px;background:linear-gradient(#EBE8E3,#B9B5AD);box-shadow:inset 1px 1px 0 #fff, inset -1px -1px 0 #808080;"></div>
<svg style="left:520px;top:83px" width="16" height="16" viewBox="0 0 16 16"><circle cx="7" cy="7" r="4.3" fill="#30d8f0" stroke="#000" stroke-width="1.3"/><path d="M7 7l-2.2-2.2" stroke="#606060" stroke-width="1.1"/><rect x="10.9" y="10.9" width="1.3" height="1.3" fill="#f00000"/><rect x="12.5" y="8.3" width="1.3" height="1.3" fill="#f00000"/><rect x="12.7" y="5.2" width="1.3" height="1.3" fill="#f00000"/><rect x="11.4" y="2.4" width="1.3" height="1.3" fill="#f00000"/><rect x="8.9" y="0.5" width="1.3" height="1.3" fill="#f0e000"/><rect x="5.8" y="0.0" width="1.3" height="1.3" fill="#f0e000"/><rect x="2.9" y="1.0" width="1.3" height="1.3" fill="#00d000"/><rect x="0.8" y="3.3" width="1.3" height="1.3" fill="#00d000"/><rect x="0.0" y="6.3" width="1.3" height="1.3" fill="#00d000"/><rect x="0.7" y="9.3" width="1.3" height="1.3" fill="#00d000"/><rect x="2.7" y="11.6" width="1.3" height="1.3" fill="#00d000"/><path d="M11 11h4l-2 2.5z" fill="#f0e000"/><path d="M13 13.5v2" stroke="#a0a0a0"/></svg>
<div style="left:539px;top:80px;width:22px;height:23px;background:linear-gradient(#EBE8E3,#B9B5AD);box-shadow:inset 1px 1px 0 #fff, inset -1px -1px 0 #808080;"></div>
<svg style="left:542px;top:83px" width="16" height="16" viewBox="0 0 16 16"><circle cx="8" cy="8" r="4.3" fill="#c4c4c4" stroke="#000" stroke-width="1.3"/><path d="M8 8l-2.2-2.2" stroke="#606060" stroke-width="1.1"/><rect x="11.9" y="11.9" width="1.3" height="1.3" fill="#f00000"/><rect x="13.5" y="9.3" width="1.3" height="1.3" fill="#f00000"/><rect x="13.7" y="6.2" width="1.3" height="1.3" fill="#f00000"/><rect x="12.4" y="3.4" width="1.3" height="1.3" fill="#f00000"/><rect x="9.9" y="1.5" width="1.3" height="1.3" fill="#f0e000"/><rect x="6.8" y="1.0" width="1.3" height="1.3" fill="#f0e000"/><rect x="3.9" y="2.0" width="1.3" height="1.3" fill="#00d000"/><rect x="1.8" y="4.3" width="1.3" height="1.3" fill="#00d000"/><rect x="1.0" y="7.3" width="1.3" height="1.3" fill="#00d000"/><rect x="1.7" y="10.3" width="1.3" height="1.3" fill="#00d000"/><rect x="3.7" y="12.6" width="1.3" height="1.3" fill="#00d000"/></svg>
<div style="left:561px;top:80px;width:22px;height:23px;background:linear-gradient(#EBE8E3,#B9B5AD);box-shadow:inset 1px 1px 0 #fff, inset -1px -1px 0 #808080;"></div>
<svg style="left:564px;top:83px" width="16" height="16" viewBox="0 0 16 16"><circle cx="10.5" cy="8" r="4.3" fill="#c4c4c4" stroke="#000" stroke-width="1.3"/><path d="M10.5 8l-2.2-2.2" stroke="#606060" stroke-width="1.1"/><rect x="14.4" y="11.9" width="1.3" height="1.3" fill="#f00000"/><rect x="16.0" y="9.3" width="1.3" height="1.3" fill="#f00000"/><rect x="16.2" y="6.2" width="1.3" height="1.3" fill="#f00000"/><rect x="14.9" y="3.4" width="1.3" height="1.3" fill="#f00000"/><rect x="12.4" y="1.5" width="1.3" height="1.3" fill="#f0e000"/><rect x="9.3" y="1.0" width="1.3" height="1.3" fill="#f0e000"/><rect x="6.4" y="2.0" width="1.3" height="1.3" fill="#00d000"/><rect x="4.3" y="4.3" width="1.3" height="1.3" fill="#00d000"/><rect x="3.5" y="7.3" width="1.3" height="1.3" fill="#00d000"/><rect x="4.2" y="10.3" width="1.3" height="1.3" fill="#00d000"/><rect x="6.2" y="12.6" width="1.3" height="1.3" fill="#00d000"/><path d="M3 15v-10M1.5 6.5l1.5-3 1.5 3" stroke="#000090" stroke-width="2.2" fill="none"/><path d="M3 4h3" stroke="#000090" stroke-width="2"/></svg>
<div style="left:583px;top:80px;width:22px;height:23px;background:linear-gradient(#EBE8E3,#B9B5AD);box-shadow:inset 1px 1px 0 #fff, inset -1px -1px 0 #808080;"></div>
<svg style="left:586px;top:83px" width="16" height="16" viewBox="0 0 16 16"><circle cx="10.5" cy="8" r="4.3" fill="#c4c4c4" stroke="#000" stroke-width="1.3"/><path d="M10.5 8l-2.2-2.2" stroke="#606060" stroke-width="1.1"/><rect x="14.4" y="11.9" width="1.3" height="1.3" fill="#f00000"/><rect x="16.0" y="9.3" width="1.3" height="1.3" fill="#f00000"/><rect x="16.2" y="6.2" width="1.3" height="1.3" fill="#f00000"/><rect x="14.9" y="3.4" width="1.3" height="1.3" fill="#f00000"/><rect x="12.4" y="1.5" width="1.3" height="1.3" fill="#f0e000"/><rect x="9.3" y="1.0" width="1.3" height="1.3" fill="#f0e000"/><rect x="6.4" y="2.0" width="1.3" height="1.3" fill="#00d000"/><rect x="4.3" y="4.3" width="1.3" height="1.3" fill="#00d000"/><rect x="3.5" y="7.3" width="1.3" height="1.3" fill="#00d000"/><rect x="4.2" y="10.3" width="1.3" height="1.3" fill="#00d000"/><rect x="6.2" y="12.6" width="1.3" height="1.3" fill="#00d000"/><path d="M4 1v11M2 10l2 3.5 2-3.5" stroke="#000090" stroke-width="2.2" fill="none"/><path d="M4 2h3" stroke="#000090" stroke-width="2"/></svg>
<div style="left:605px;top:80px;width:22px;height:23px;background:linear-gradient(#EBE8E3,#B9B5AD);box-shadow:inset 1px 1px 0 #fff, inset -1px -1px 0 #808080;"></div>
<svg style="left:608px;top:83px" width="16" height="16" viewBox="0 0 16 16"><circle cx="8" cy="6" r="4.3" fill="#c4c4c4" stroke="#000" stroke-width="1.3"/><path d="M8 6l-2.2-2.2" stroke="#606060" stroke-width="1.1"/><rect x="11.9" y="9.9" width="1.3" height="1.3" fill="#f00000"/><rect x="13.5" y="7.3" width="1.3" height="1.3" fill="#f00000"/><rect x="13.7" y="4.2" width="1.3" height="1.3" fill="#f00000"/><rect x="12.4" y="1.4" width="1.3" height="1.3" fill="#f00000"/><rect x="9.9" y="-0.5" width="1.3" height="1.3" fill="#f0e000"/><rect x="6.8" y="-1.0" width="1.3" height="1.3" fill="#f0e000"/><rect x="3.9" y="0.0" width="1.3" height="1.3" fill="#00d000"/><rect x="1.8" y="2.3" width="1.3" height="1.3" fill="#00d000"/><rect x="1.0" y="5.3" width="1.3" height="1.3" fill="#00d000"/><rect x="1.7" y="8.3" width="1.3" height="1.3" fill="#00d000"/><rect x="3.7" y="10.6" width="1.3" height="1.3" fill="#00d000"/><path d="M4 12.5h7.5M4 15h7.5" stroke="#000090" stroke-width="1.6"/></svg>
<div style="left:627px;top:80px;width:22px;height:23px;background:linear-gradient(#EBE8E3,#B9B5AD);box-shadow:inset 1px 1px 0 #fff, inset -1px -1px 0 #808080;"></div>
<svg style="left:630px;top:83px" width="16" height="16" viewBox="0 0 16 16"><circle cx="6.5" cy="8" r="4.3" fill="#c4c4c4" stroke="#000" stroke-width="1.3"/><path d="M6.5 8l-2.2-2.2" stroke="#606060" stroke-width="1.1"/><rect x="10.4" y="11.9" width="1.3" height="1.3" fill="#f00000"/><rect x="12.0" y="9.3" width="1.3" height="1.3" fill="#f00000"/><rect x="12.2" y="6.2" width="1.3" height="1.3" fill="#f00000"/><rect x="10.9" y="3.4" width="1.3" height="1.3" fill="#f00000"/><rect x="8.4" y="1.5" width="1.3" height="1.3" fill="#f0e000"/><rect x="5.3" y="1.0" width="1.3" height="1.3" fill="#f0e000"/><rect x="2.4" y="2.0" width="1.3" height="1.3" fill="#00d000"/><rect x="0.3" y="4.3" width="1.3" height="1.3" fill="#00d000"/><rect x="-0.5" y="7.3" width="1.3" height="1.3" fill="#00d000"/><rect x="0.2" y="10.3" width="1.3" height="1.3" fill="#00d000"/><rect x="2.2" y="12.6" width="1.3" height="1.3" fill="#00d000"/><path d="M14.5 2v8" stroke="#000090" stroke-width="2.2"/><rect x="13.4" y="12" width="2.2" height="2" fill="#000090"/></svg>
<div style="left:649px;top:80px;width:22px;height:23px;background:linear-gradient(#EBE8E3,#B9B5AD);box-shadow:inset 1px 1px 0 #fff, inset -1px -1px 0 #808080;"></div>
<svg style="left:652px;top:83px" width="16" height="16" viewBox="0 0 16 16"><circle cx="8" cy="6" r="4.3" fill="#c4c4c4" stroke="#000" stroke-width="1.3"/><path d="M8 6l-2.2-2.2" stroke="#606060" stroke-width="1.1"/><rect x="11.9" y="9.9" width="1.3" height="1.3" fill="#f00000"/><rect x="13.5" y="7.3" width="1.3" height="1.3" fill="#f00000"/><rect x="13.7" y="4.2" width="1.3" height="1.3" fill="#f00000"/><rect x="12.4" y="1.4" width="1.3" height="1.3" fill="#f00000"/><rect x="9.9" y="-0.5" width="1.3" height="1.3" fill="#f0e000"/><rect x="6.8" y="-1.0" width="1.3" height="1.3" fill="#f0e000"/><rect x="3.9" y="0.0" width="1.3" height="1.3" fill="#00d000"/><rect x="1.8" y="2.3" width="1.3" height="1.3" fill="#00d000"/><rect x="1.0" y="5.3" width="1.3" height="1.3" fill="#00d000"/><rect x="1.7" y="8.3" width="1.3" height="1.3" fill="#00d000"/><rect x="3.7" y="10.6" width="1.3" height="1.3" fill="#00d000"/><path d="M3 13.5h10" stroke="#e8e000" stroke-width="1.8"/><path d="M3 12.5h10" stroke="#909000" stroke-width="0.5"/><circle cx="2.5" cy="13.5" r="1.7" fill="#fff" stroke="#000" stroke-width="1.1"/><circle cx="13.5" cy="13.5" r="1.7" fill="#fff" stroke="#000" stroke-width="1.1"/></svg>
<div style="left:671px;top:80px;width:22px;height:23px;background:linear-gradient(#EBE8E3,#B9B5AD);box-shadow:inset 1px 1px 0 #fff, inset -1px -1px 0 #808080;"></div>
<svg style="left:674px;top:83px" width="16" height="16" viewBox="0 0 16 16"><path d="M7.5 2v8l-5-4z" fill="#00d000"/><path d="M8.5 2v8l5-4z" fill="#e00000"/><path d="M3 13.5h10" stroke="#e8e000" stroke-width="1.8"/><path d="M3 12.5h10" stroke="#909000" stroke-width="0.5"/><circle cx="2.5" cy="13.5" r="1.7" fill="#fff" stroke="#000" stroke-width="1.1"/><circle cx="13.5" cy="13.5" r="1.7" fill="#fff" stroke="#000" stroke-width="1.1"/></svg>
<div style="left:693px;top:80px;width:22px;height:23px;background:linear-gradient(#EBE8E3,#B9B5AD);box-shadow:inset 1px 1px 0 #fff, inset -1px -1px 0 #808080;"></div>
<svg style="left:696px;top:83px" width="16" height="16" viewBox="0 0 16 16"><path d="M1 3q7-3 14 0q-1 4-7 5q-6-1-7-5z" fill="#f00000"/><path d="M3.5 4h9" stroke="#fff" stroke-width="1.6"/><path d="M5 9l6 6M11 9l-6 6" stroke="#900000" stroke-width="1.8"/><path d="M2 11l2-2M14 11l-2-2M2 14l1-1" stroke="#000" stroke-width="0.9"/></svg>
<div style="left:715px;top:80px;width:22px;height:23px;background:linear-gradient(#EBE8E3,#B9B5AD);box-shadow:inset 1px 1px 0 #fff, inset -1px -1px 0 #808080;"></div>
<svg style="left:718px;top:83px" width="16" height="16" viewBox="0 0 16 16"><path d="M8 1l7 7-7 7-7-7z" fill="#f0f000"/><path d="M4.5 4.5l-3.5 3.5 3.5 3.5z" fill="#00c000"/><path d="M11.5 4.5l3.5 3.5-3.5 3.5z" fill="#e00000"/></svg>
<div style="left:737px;top:80px;width:22px;height:23px;background:linear-gradient(#EBE8E3,#B9B5AD);box-shadow:inset 1px 1px 0 #fff, inset -1px -1px 0 #808080;"></div>
<svg style="left:740px;top:83px" width="16" height="16" viewBox="0 0 16 16"><text x="8.5" y="7" text-anchor="middle" font-family="Liberation Sans" font-weight="bold" font-size="8.5" fill="#000090">Hz</text><path d="M4 8v7.5l7-3.7z" fill="#008800"/></svg>
<div style="left:759px;top:80px;width:22px;height:23px;background:linear-gradient(#EBE8E3,#B9B5AD);box-shadow:inset 1px 1px 0 #fff, inset -1px -1px 0 #808080;"></div>
<svg style="left:762px;top:83px" width="16" height="16" viewBox="0 0 16 16"><text x="8" y="8" text-anchor="middle" font-family="Liberation Sans" font-weight="bold" font-size="8.5" fill="#008000">Hz</text><path d="M1 12.5h14" stroke="#000" stroke-width="0.8"/><circle cx="2" cy="12.5" r="1.1" fill="#fff" stroke="#000" stroke-width="0.6"/><circle cx="6" cy="12.5" r="1.1" fill="#0c0"/><circle cx="10" cy="12.5" r="1.1" fill="#0c0"/><circle cx="14" cy="12.5" r="1.1" fill="#fff" stroke="#000" stroke-width="0.6"/></svg>
<div style="left:781px;top:80px;width:22px;height:23px;background:linear-gradient(#EBE8E3,#B9B5AD);box-shadow:inset 1px 1px 0 #fff, inset -1px -1px 0 #808080;"></div>
<svg style="left:784px;top:83px" width="16" height="16" viewBox="0 0 16 16"><path d="M1 4l3-3v6z" fill="#00c000"/><path d="M15 12l-3-3v6z" fill="#e00000"/><path d="M6 3h4a2.5 2.5 0 0 1 0 5h-1" stroke="#000090" stroke-width="1.8" fill="none"/><path d="M10 13h-4a2.5 2.5 0 0 1 0-5" stroke="#000090" stroke-width="1.8" fill="none"/><path d="M3 8h4M5 6v4" stroke="#000090" stroke-width="1.2"/></svg>
<div style="left:803px;top:80px;width:22px;height:23px;background:linear-gradient(#EBE8E3,#B9B5AD);box-shadow:inset 1px 1px 0 #fff, inset -1px -1px 0 #808080;"></div>
<svg style="left:806px;top:83px" width="16" height="16" viewBox="0 0 16 16"><circle cx="6.5" cy="6" r="4.3" fill="#c4c4c4" stroke="#000" stroke-width="1.3"/><path d="M6.5 6l-2.2-2.2" stroke="#606060" stroke-width="1.1"/><rect x="10.4" y="9.9" width="1.3" height="1.3" fill="#f00000"/><rect x="12.0" y="7.3" width="1.3" height="1.3" fill="#f00000"/><rect x="12.2" y="4.2" width="1.3" height="1.3" fill="#f00000"/><rect x="10.9" y="1.4" width="1.3" height="1.3" fill="#f00000"/><rect x="8.4" y="-0.5" width="1.3" height="1.3" fill="#f0e000"/><rect x="5.3" y="-1.0" width="1.3" height="1.3" fill="#f0e000"/><rect x="2.4" y="0.0" width="1.3" height="1.3" fill="#00d000"/><rect x="0.3" y="2.3" width="1.3" height="1.3" fill="#00d000"/><rect x="-0.5" y="5.3" width="1.3" height="1.3" fill="#00d000"/><rect x="0.2" y="8.3" width="1.3" height="1.3" fill="#00d000"/><rect x="2.2" y="10.6" width="1.3" height="1.3" fill="#00d000"/><path d="M14.5 1v7" stroke="#000090" stroke-width="2.2"/><rect x="13.4" y="9.5" width="2.2" height="2" fill="#000090"/><path d="M2 13h10" stroke="#00a000" stroke-width="1.6"/><path d="M2 15.2h10" stroke="#e00000" stroke-width="1.8"/></svg>
<div style="left:825px;top:80px;width:22px;height:23px;background:linear-gradient(#EBE8E3,#B9B5AD);box-shadow:inset 1px 1px 0 #fff, inset -1px -1px 0 #808080;"></div>
<svg style="left:828px;top:83px" width="16" height="16" viewBox="0 0 16 16"><circle cx="8" cy="8" r="7" fill="#000090" stroke="#f0e000" stroke-width="1.6"/><path d="M8.5 3.5v5l-3 3" stroke="#f0e000" stroke-width="1.6" fill="none"/><path d="M8 2v1M14 8h-1M8 14v-1M2 8h1" stroke="#fff" stroke-width="0.8"/></svg>
<svg style="left:850px;top:83px" width="16" height="16" viewBox="0 0 16 16"><path d="M1 6l7-4 7 4v8h-14z" fill="#a8a8a8"/><path d="M1 6l7 5 7-5" stroke="#d8d8d8" fill="none"/><path d="M3 3q5-3 10 0" stroke="#c0c0c0" stroke-width="1.5" fill="none"/></svg>
<div style="left:3px;top:106px;width:3px;height:32px;box-shadow:inset 1px 1px 0 #fff, inset -1px -1px 0 #808080;"></div>
<div style="left:11px;top:106px;width:42px;height:32px;background:linear-gradient(#EBE8E3,#B9B5AD);box-shadow:inset 1px 1px 0 #fff, inset -1px -1px 0 #808080;"></div>
<svg style="left:11px;top:106px" width="42" height="32" viewBox="0 0 42 32"><path d="M11.5 4.5v23l22-11.5z" fill="#00E000" stroke="#309030" stroke-width="0.6"/></svg>
<div style="left:53px;top:106px;width:42px;height:32px;background:linear-gradient(#EBE8E3,#B9B5AD);box-shadow:inset 1px 1px 0 #fff, inset -1px -1px 0 #808080;"></div>
<svg style="left:53px;top:106px" width="42" height="32" viewBox="0 0 42 32"><path d="M12 5v22l20-11z" fill="#00E000"/></svg>
<div style="left:95px;top:106px;width:42px;height:32px;background:linear-gradient(#EBE8E3,#B9B5AD);box-shadow:inset 1px 1px 0 #fff, inset -1px -1px 0 #808080;"></div>
<svg style="left:95px;top:106px" width="42" height="32" viewBox="0 0 42 32"><path d="M12 5v22l20-11z" fill="#00E000"/></svg>
<div style="left:154px;top:106px;width:42px;height:32px;background:linear-gradient(#EBE8E3,#B9B5AD);box-shadow:inset 1px 1px 0 #fff, inset -1px -1px 0 #808080;"></div>
<svg style="left:154px;top:106px" width="42" height="32" viewBox="0 0 42 32"><path d="M30 7v18l-10-9zM20 7v18l-10-9z" fill="#1010F0"/></svg>
<div style="left:196px;top:106px;width:42px;height:32px;background:linear-gradient(#EBE8E3,#B9B5AD);box-shadow:inset 1px 1px 0 #fff, inset -1px -1px 0 #808080;"></div>
<svg style="left:196px;top:106px" width="42" height="32" viewBox="0 0 42 32"><path d="M7 7v18l12-9zM19 7v18l12-9z" fill="#1010F0"/></svg>
<svg style="left:238px;top:106px" width="90" height="32"><rect x="14" y="8.5" width="7" height="16" rx="1.5" fill="#A0A0A0"/><rect x="24" y="8.5" width="7" height="16" rx="1.5" fill="#A0A0A0"/><rect x="58" y="8.5" width="17" height="16" rx="1.5" fill="#A0A0A0"/></svg>
<div style="left:334px;top:106px;width:42px;height:32px;background:linear-gradient(#EBE8E3,#B9B5AD);box-shadow:inset 1px 1px 0 #fff, inset -1px -1px 0 #808080;"></div>
<svg style="left:334px;top:106px" width="42" height="32" viewBox="0 0 42 32"><path d="M9.5 4.5h17l6 6v18h-23z" fill="#f4f4f4" stroke="#a0a0a0" stroke-width="0.8"/><path d="M10 29h23" stroke="#606060" stroke-width="1"/><circle cx="20.5" cy="16" r="10" fill="#F00000" stroke="#c00000" stroke-width="0.8"/><path d="M24 5.5l8 8h-8z" fill="#f4f4f4" stroke="#909090" stroke-width="0.8"/></svg>
<div style="left:378px;top:106px;width:42px;height:32px;background:linear-gradient(#EBE8E3,#B9B5AD);box-shadow:inset 1px 1px 0 #fff, inset -1px -1px 0 #808080;"></div>
<svg style="left:378px;top:106px" width="42" height="32" viewBox="0 0 42 32"><rect x="9" y="4" width="24" height="23" fill="#B8B8E0"/><rect x="8" y="4" width="2.4" height="23" fill="#00E0E0"/><rect x="32" y="4" width="2.4" height="23" fill="#00E0E0"/><circle cx="21" cy="15.5" r="10" fill="#F00000" stroke="#c00000" stroke-width="0.8"/></svg>
<div style="left:429px;top:106px;width:42px;height:32px;background:linear-gradient(#EBE8E3,#B9B5AD);box-shadow:inset 1px 1px 0 #fff, inset -1px -1px 0 #808080;"></div>
<svg style="left:429px;top:106px" width="42" height="32" viewBox="0 0 42 32"><circle cx="13" cy="16" r="4.5" fill="#e8e8e8" stroke="#7a7a7a"/><circle cx="13" cy="16" r="2.6" fill="#2060c0"/><rect x="20.5" y="10.5" width="11" height="11" fill="#f8f8f8" stroke="#7a8ab0"/><path d="M22.5 16l2.5 3 5-7" stroke="#3050a0" stroke-width="1.4" fill="none"/></svg>
<div style="left:473px;top:106px;width:42px;height:32px;background:linear-gradient(#EBE8E3,#B9B5AD);box-shadow:inset 1px 1px 0 #fff, inset -1px -1px 0 #808080;"></div>
<svg style="left:473px;top:106px" width="42" height="32" viewBox="0 0 42 32"><rect x="8.5" y="3.5" width="24" height="23" fill="#fff" stroke="#0000a0" stroke-width="1.6"/><rect x="8.5" y="3.5" width="24" height="3" fill="#0000a0"/><rect x="28" y="4.5" width="1.4" height="1.2" fill="#fff"/><rect x="30" y="4.5" width="1.4" height="1.2" fill="#fff"/><rect x="11" y="9" width="8" height="2" fill="#20c020"/><rect x="11" y="12" width="8" height="1.4" fill="#e04040"/><path d="M20 9h10M20 11h10M20 13h10" stroke="#a0a0a0" stroke-width="0.8"/><rect x="10" y="16" width="21" height="9" fill="#000"/><path d="M20.5 16v9" stroke="#fff"/><path d="M10 18.5h21" stroke="#888" stroke-width="0.8"/></svg>
<div style="left:518px;top:104px;width:1px;height:35px;background:#fff;"></div>
<div style="left:520px;top:106px;width:3px;height:32px;box-shadow:inset 1px 1px 0 #fff, inset -1px -1px 0 #808080;"></div>
<div style="left:529px;top:106px;width:678px;height:32px;background:#D4D0C8;box-shadow:inset 1px 1px 0 #808080, inset -1px -1px 0 #fff;"></div>
<div style="left:530px;top:107px;width:10px;height:30px;background:#D4D0C8;"></div>
<div style="left:532px;top:108.88px;font-size:9px;line-height:11px;color:#000;font-weight:bold;white-space:pre">L</div>
<div style="left:531px;top:122.88px;font-size:9px;line-height:11px;color:#000;font-weight:bold;white-space:pre">R</div>
<div style="left:540px;top:107px;width:656px;height:30px;background:linear-gradient(to right,#005E00 0%,#005E00 1%,#7E7E00 65.2%,#7E0000 100%);"></div>
<div style="left:540px;top:107px;width:1px;height:30px;background:#00E000;"></div>
<div style="left:1196px;top:107px;width:10px;height:30px;background:#D4D0C8;"></div>
<div style="left:1198px;top:109px;width:6px;height:10px;background:#000;box-shadow:0 0 0 1px #fff;"></div>
<div style="left:1198px;top:124px;width:6px;height:10px;background:#000;box-shadow:0 0 0 1px #fff;"></div>
<div style="left:1209px;top:104px;width:1px;height:35px;background:#fff;"></div>
<div style="left:1212px;top:106px;width:3px;height:32px;box-shadow:inset 1px 1px 0 #fff, inset -1px -1px 0 #808080;"></div>
<div style="left:1219px;top:105px;width:146px;height:33px;background:#000;box-shadow:inset 1px 1px 0 #808080, inset -1px -1px 0 #fff;"></div>
<div style="left:1220px;top:106px;width:144px;height:31px;background:#000;"></div>
<div style="left:1224px;top:109.13px;font-size:23px;line-height:29px;color:#00FF00;letter-spacing:0.45px;white-space:pre">00:00:00.0</div>
<div style="left:1344px;top:110px;width:10px;height:10px;background:#007800;"></div>
<div style="left:1344px;top:123px;width:10px;height:10px;background:#7A0000;"></div>
<div style="left:0px;top:139px;width:1366px;height:1px;background:#808080;"></div>
<div style="left:14px;top:140px;width:1335px;height:2px;background:#808080;"></div>
<div style="left:14px;top:140px;width:3px;height:573px;background:#808080;"></div>
<div style="left:1346px;top:142px;width:2px;height:571px;background:#fff;"></div>
<div style="left:1348px;top:140px;width:1px;height:573px;background:#808080;"></div>
<svg style="left:17px;top:142px" width="1329" height="492" viewBox="17 142 1329 492"><defs><linearGradient id="bgk" x1="0" y1="0" x2="0" y2="1"><stop offset="0" stop-color="#000"/><stop offset="0.5" stop-color="#272727"/><stop offset="1" stop-color="#000"/></linearGradient><linearGradient id="bgs" x1="0" y1="0" x2="0" y2="1"><stop offset="0" stop-color="#000080"/><stop offset="0.5" stop-color="#2424A4"/><stop offset="1" stop-color="#000080"/></linearGradient><linearGradient id="gw" gradientUnits="userSpaceOnUse" x1="0" y1="190" x2="0" y2="332"><stop offset="0" stop-color="#1A9C1A"/><stop offset="0.5" stop-color="#027602"/><stop offset="1" stop-color="#1A9C1A"/></linearGradient><linearGradient id="rw" gradientUnits="userSpaceOnUse" x1="0" y1="472" x2="0" y2="533"><stop offset="0" stop-color="#9E1616"/><stop offset="0.5" stop-color="#6C0000"/><stop offset="1" stop-color="#9E1616"/></linearGradient></defs><rect x="17" y="142" width="1329" height="492" fill="#000"/><rect x="17" y="142" width="1329" height="240" fill="url(#bgk)"/><rect x="383" y="142" width="325" height="240" fill="url(#bgs)"/><rect x="17" y="384" width="1329" height="240" fill="url(#bgk)"/><rect x="383" y="384" width="325" height="240" fill="url(#bgs)"/><path d="M17 148.5H1346M17 167.5H1346M17 186.5H1346M17 205.5H1346M17 224.5H1346M17 243.5H1346M17 262.5H1346M17 280.5H1346M17 299.5H1346M17 318.5H1346M17 337.5H1346M17 356.5H1346M17 375.5H1346M17 390.5H1346M17 409.5H1346M17 428.5H1346M17 447.5H1346M17 466.5H1346M17 485.5H1346M17 504.5H1346M17 522.5H1346M17 541.5H1346M17 560.5H1346M17 579.5H1346M17 598.5H1346M17 617.5H1346" stroke="#808080" stroke-width="1" shape-rendering="crispEdges"/><path d="M44.5 142V634M72.5 142V634M100.5 142V634M129.5 142V634M157.5 142V634M185.5 142V634M213.5 142V634M241.5 142V634M269.5 142V634M297.5 142V634M326.5 142V634M354.5 142V634M382.5 142V634M410.5 142V634M438.5 142V634M466.5 142V634M494.5 142V634M523.5 142V634M551.5 142V634M579.5 142V634M607.5 142V634M635.5 142V634M663.5 142V634M691.5 142V634M720.5 142V634M748.5 142V634M776.5 142V634M804.5 142V634M832.5 142V634M860.5 142V634M889.5 142V634M917.5 142V634M945.5 142V634M973.5 142V634M1001.5 142V634M1029.5 142V634M1057.5 142V634M1086.5 142V634M1114.5 142V634M1142.5 142V634M1170.5 142V634M1198.5 142V634M1226.5 142V634M1255.5 142V634M1283.5 142V634M1311.5 142V634M1339.5 142V634" stroke="#808080" stroke-width="1" shape-rendering="crispEdges"/><rect x="17" y="382" width="1329" height="2" fill="#808080"/><rect x="17" y="625" width="1329" height="1" fill="#fff"/><path d="M17 144.5h2M17 148.5h6M17 152.5h2M17 156.5h2M17 159.5h2M17 163.5h2M17 167.5h6M17 171.5h2M17 174.5h2M17 178.5h2M17 182.5h2M17 186.5h6M17 190.5h2M17 193.5h2M17 197.5h2M17 201.5h2M17 205.5h6M17 209.5h2M17 212.5h2M17 216.5h2M17 220.5h2M17 224.5h6M17 227.5h2M17 231.5h2M17 235.5h2M17 239.5h2M17 243.5h6M17 246.5h2M17 250.5h2M17 254.5h2M17 258.5h2M17 262.5h6M17 265.5h2M17 269.5h2M17 273.5h2M17 277.5h2M17 280.5h6M17 284.5h2M17 288.5h2M17 292.5h2M17 296.5h2M17 299.5h6M17 303.5h2M17 307.5h2M17 311.5h2M17 314.5h2M17 318.5h6M17 322.5h2M17 326.5h2M17 330.5h2M17 333.5h2M17 337.5h6M17 341.5h2M17 345.5h2M17 349.5h2M17 352.5h2M17 356.5h6M17 360.5h2M17 364.5h2M17 367.5h2M17 371.5h2M17 375.5h6M17 379.5h2M17 386.5h2M17 390.5h6M17 394.5h2M17 398.5h2M17 401.5h2M17 405.5h2M17 409.5h6M17 413.5h2M17 416.5h2M17 420.5h2M17 424.5h2M17 428.5h6M17 432.5h2M17 435.5h2M17 439.5h2M17 443.5h2M17 447.5h6M17 451.5h2M17 454.5h2M17 458.5h2M17 462.5h2M17 466.5h6M17 469.5h2M17 473.5h2M17 477.5h2M17 481.5h2M17 485.5h6M17 488.5h2M17 492.5h2M17 496.5h2M17 500.5h2M17 504.5h6M17 507.5h2M17 511.5h2M17 515.5h2M17 519.5h2M17 522.5h6M17 526.5h2M17 530.5h2M17 534.5h2M17 538.5h2M17 541.5h6M17 545.5h2M17 549.5h2M17 553.5h2M17 556.5h2M17 560.5h6M17 564.5h2M17 568.5h2M17 572.5h2M17 575.5h2M17 579.5h6M17 583.5h2M17 587.5h2M17 591.5h2M17 594.5h2M17 598.5h6M17 602.5h2M17 606.5h2M17 609.5h2M17 613.5h2M17 617.5h6M17 621.5h2" stroke="#e8e8e8" stroke-width="1" shape-rendering="crispEdges"/><polygon points="707.0,261.0 711.0,254.0 713.3,258.9 715.6,248.8 721.2,257.3 726.7,244.6 732.3,256.1 737.9,241.5 743.6,255.2 749.4,237.3 754.9,252.8 760.4,232.0 766.1,251.5 771.9,235.2 777.6,251.5 783.3,232.0 788.8,249.2 794.2,224.8 799.7,245.9 805.2,227.9 811.0,250.8 816.7,234.2 822.4,250.8 828.1,223.8 833.3,242.1 838.5,211.2 844.0,228.3 849.6,210.8 855.2,246.8 860.8,229.0 866.8,249.2 872.9,232.1 878.5,249.2 884.0,230.0 889.5,247.6 895.0,224.8 900.6,243.1 906.2,219.6 911.6,237.9 916.9,215.0 922.3,242.1 927.7,223.8 934.0,245.0 940.2,226.9 945.6,245.5 951.0,227.5 956.8,245.5 962.5,224.8 968.4,243.1 974.2,218.5 979.6,236.8 985.0,208.0 990.2,232.1 995.4,214.4 1001.1,250.0 1006.9,233.1 1012.5,250.0 1018.0,221.7 1023.6,249.2 1029.3,232.0 1035.2,249.2 1041.0,228.7 1047.1,246.5 1053.2,218.7 1058.5,237.0 1063.8,206.5 1069.0,232.0 1074.2,214.3 1079.8,242.5 1085.3,224.2 1091.4,246.5 1097.5,228.7 1103.0,246.5 1108.5,224.2 1114.6,242.5 1120.7,214.3 1123.1,222.7 1125.5,210.0 1128.1,219.2 1130.7,194.3 1133.3,208.5 1136.0,197.0 1139.4,208.5 1142.8,188.8 1144.9,205.2 1147.0,193.0 1149.9,205.2 1152.8,189.9 1155.4,209.3 1158.0,198.0 1161.0,220.0 1163.9,211.0 1170.0,252.3 1176.0,236.4 1182.1,255.3 1188.2,241.9 1193.8,255.3 1199.3,241.7 1205.1,255.2 1210.9,240.0 1216.2,254.7 1221.6,240.5 1227.4,255.6 1233.2,243.0 1238.5,256.0 1243.8,244.2 1249.7,256.4 1255.5,245.5 1261.0,256.7 1266.6,246.7 1272.2,257.3 1277.7,248.7 1282.7,257.3 1287.6,241.7 1289.0,255.2 1290.5,236.0 1292.2,239.0 1293.8,234.3 1296.3,237.5 1298.8,214.5 1301.2,222.3 1303.7,217.0 1305.1,222.3 1306.5,205.0 1308.2,211.7 1309.9,200.9 1312.3,213.6 1314.8,207.1 1316.4,213.6 1318.0,203.0 1319.5,210.0 1321.0,199.7 1323.0,214.4 1325.0,208.0 1326.7,220.1 1328.4,214.5 1330.9,220.1 1333.4,199.7 1334.7,211.7 1336.0,205.0 1337.8,217.9 1339.6,212.0 1342.4,217.9 1345.3,191.0 1346.0,191.0 1346.0,343.2 1343.3,343.2 1340.8,328.9 1338.3,338.2 1335.7,325.2 1333.0,334.0 1330.7,320.2 1328.4,328.3 1326.7,320.2 1325.0,332.0 1323.0,322.4 1321.0,330.8 1319.0,322.4 1317.0,334.0 1315.3,325.2 1313.6,338.2 1311.1,328.9 1308.6,349.4 1306.8,321.7 1305.0,330.0 1303.1,302.8 1301.2,308.5 1299.1,298.0 1297.0,303.0 1295.4,294.1 1293.8,298.6 1291.9,269.1 1290.0,270.2 1286.3,263.8 1282.7,271.4 1277.1,264.1 1271.5,273.9 1266.0,264.9 1260.4,276.4 1254.8,266.5 1249.3,278.9 1243.7,268.4 1238.1,278.9 1232.5,267.4 1227.0,277.6 1221.5,264.9 1215.9,273.9 1210.3,264.9 1204.7,276.4 1198.6,266.5 1192.4,278.9 1187.0,268.4 1181.6,282.9 1176.0,272.0 1170.5,287.3 1165.0,276.7 1159.4,302.8 1156.2,295.3 1153.0,318.0 1150.7,307.7 1148.4,329.4 1145.7,314.3 1143.0,326.0 1140.2,311.6 1137.3,322.7 1134.7,307.7 1132.0,318.0 1129.1,301.6 1126.2,310.5 1123.6,293.0 1121.0,300.0 1118.1,282.0 1115.2,292.8 1109.1,272.0 1103.0,282.9 1097.5,272.0 1091.9,286.2 1085.8,275.5 1079.8,290.6 1074.2,280.5 1068.7,297.3 1063.7,284.2 1058.7,296.2 1052.7,283.4 1046.6,295.0 1040.5,283.4 1034.4,297.3 1029.5,284.6 1024.6,296.7 1019.4,281.8 1014.2,292.5 1008.5,277.9 1002.7,288.3 996.5,277.9 990.2,292.5 985.0,281.8 979.8,294.6 974.0,283.2 968.3,296.7 962.9,284.6 957.5,298.8 952.0,285.9 946.5,300.8 940.8,281.8 935.0,292.5 929.2,279.3 923.5,289.4 917.8,279.3 912.0,294.6 906.9,281.8 901.7,292.5 896.0,281.8 890.2,292.5 884.5,281.8 878.8,295.6 872.7,277.9 866.7,288.3 861.0,277.9 855.2,295.6 850.5,283.8 845.8,301.9 840.1,288.0 834.4,309.2 828.6,283.8 822.9,295.6 817.2,283.8 811.5,296.7 805.8,284.6 800.0,297.7 794.2,281.8 788.5,292.5 783.0,273.3 777.5,284.2 771.9,273.3 766.2,287.3 760.7,274.4 755.2,285.2 749.5,271.1 743.8,282.0 738.0,267.6 732.3,277.9 726.5,264.2 720.8,271.7 715.9,263.1 711.0,268.0 707.0,261.0" fill="url(#gw)"/><polyline points="711.0,264.6 715.9,263.1 720.8,266.6 726.5,264.2 732.3,269.8 738.0,266.1 743.8,271.9 749.5,267.3 755.2,273.6 760.7,268.3 766.2,274.7 771.9,268.0 777.5,273.1 783.0,268.0 788.5,277.4 794.2,270.4 800.0,280.1 805.8,271.7 811.5,279.6 817.2,271.4 822.9,279.0 828.6,271.4 834.4,286.1 840.1,273.3 845.8,282.3 850.5,271.4 855.2,279.0 861.0,269.2 866.7,275.2 872.7,269.2 878.8,279.0 884.5,270.4 890.2,277.4 896.0,270.4 901.7,277.4 906.9,270.4 912.0,278.5 917.8,269.5 923.5,275.8 929.2,269.5 935.0,277.4 940.8,270.4 946.5,281.7 952.0,272.3 957.5,280.6 962.9,271.7 968.3,279.6 974.0,271.1 979.8,278.5 985.0,270.4 990.2,277.4 996.5,269.2 1002.7,275.2 1008.5,269.2 1014.2,277.4 1019.4,270.4 1024.6,279.6 1029.5,271.7 1034.4,279.9 1040.5,271.2 1046.6,278.7 1052.7,271.2 1058.7,279.3 1063.7,271.6 1068.7,279.9 1074.2,269.9 1079.8,276.4 1085.8,268.6 1091.9,274.1 1097.5,267.6 1103.0,272.4 1109.1,267.6 1115.2,277.5 1118.1,270.5" fill="none" stroke="#000" stroke-width="1" opacity="0.75"/><polyline points="1170.5,274.7 1176.0,267.6 1181.6,272.4 1187.0,266.4 1192.4,270.3 1198.6,265.6 1204.7,269.0 1210.3,264.9 1215.9,267.7 1221.5,264.9 1227.0,269.6 1232.5,266.0 1238.1,270.3 1243.7,266.4 1249.3,270.3 1254.8,265.6 1260.4,269.0 1266.0,264.9 1271.5,267.7 1277.1,264.1 1282.7,266.4 1286.3,263.8 1290.0,265.8 1291.9,263.8" fill="none" stroke="#000" stroke-width="1" opacity="0.75"/><polyline points="711.0,258.6 713.3,259.6 715.6,256.7 721.2,258.6 726.7,255.3 732.3,257.7 737.9,254.2 743.6,257.1 749.4,252.7 754.9,256.3 760.4,250.8 766.1,255.8 771.9,252.0 777.6,255.8 783.3,250.8 788.8,255.2 794.2,248.3 799.7,254.4 805.2,249.4 811.0,255.6 816.7,251.6 822.4,255.6 828.1,248.0 833.3,253.6 838.5,243.6 844.0,251.1 849.6,243.4 855.2,254.6 860.8,249.8 866.8,255.2 872.9,250.9 878.5,255.2 884.0,250.2 889.5,254.8 895.0,248.3 900.6,253.8 906.2,246.5 911.6,252.7 916.9,244.9 922.3,253.6 927.7,248.0 934.0,254.2 940.2,249.1 945.6,254.3 951.0,249.3 956.8,254.3 962.5,248.3 968.4,253.8 974.2,246.1 979.6,252.5 985.0,242.4 990.2,251.7 995.4,244.7 1001.1,255.4 1006.9,251.2 1012.5,255.4 1018.0,247.2 1023.6,255.2 1029.3,250.8 1035.2,255.2 1041.0,249.7 1047.1,254.5 1053.2,246.2 1058.5,252.5 1063.8,241.9 1069.0,251.7 1074.2,244.7 1079.8,253.6 1085.3,248.1 1091.4,254.5 1097.5,249.7 1103.0,254.5 1108.5,248.1 1114.6,253.6 1120.7,244.7 1123.1,251.7 1125.5,243.2 1128.1,250.8 1130.7,237.7 1133.3,248.2 1136.0,238.6 1139.4,248.2 1142.8,235.7 1144.9,247.4 1147.0,237.2 1149.9,247.4 1152.8,236.1 1155.4,248.4 1158.0,238.9 1161.0,251.0 1163.9,243.5 1170.0,256.1 1176.0,252.4 1182.1,257.2 1188.2,254.3 1193.8,257.2 1199.3,254.2 1205.1,257.1 1210.9,253.7 1216.2,256.9 1221.6,253.8 1227.4,257.4 1233.2,254.7 1238.5,257.6 1243.8,255.1 1249.7,257.9 1255.5,255.6 1261.0,258.1 1266.6,256.0 1272.2,258.5 1277.7,256.7 1282.7,258.5 1287.6,254.2 1289.0,257.1" fill="none" stroke="#000" stroke-width="1" stroke-dasharray="1.5 3.5" opacity="0.7"/><polygon points="707.0,502.5 711.0,500.0 713.4,501.4 715.8,498.7 721.1,500.9 726.5,495.6 732.2,499.6 738.0,492.3 743.7,498.2 749.4,490.1 754.8,496.3 760.2,487.5 765.9,494.5 771.6,488.4 777.0,494.5 782.4,482.2 788.1,486.7 793.8,477.2 799.5,483.7 805.3,478.4 811.0,486.7 816.8,482.2 822.5,486.7 828.2,475.5 833.2,482.2 838.2,476.5 844.0,487.6 849.7,483.2 855.5,490.4 861.4,485.1 867.1,490.4 872.9,480.8 877.9,485.6 882.9,478.7 889.0,483.9 895.1,476.5 900.9,483.3 906.6,477.9 912.0,488.4 917.3,483.7 923.4,489.4 929.5,484.4 935.2,489.4 940.9,475.5 946.3,481.4 951.7,472.2 957.0,478.9 962.4,472.2 967.8,480.6 973.2,474.4 978.9,485.0 984.6,480.1 990.4,491.3 996.1,485.8 1001.9,491.3 1007.6,483.7 1013.0,488.4 1018.3,474.4 1024.2,481.7 1030.0,475.8 1035.8,481.7 1041.5,474.4 1047.2,482.2 1053.0,476.5 1058.0,486.1 1063.0,481.5 1068.7,494.1 1074.4,488.0 1080.2,494.1 1085.9,488.0 1092.0,494.1 1098.0,486.5 1103.4,492.3 1108.8,485.1 1114.5,490.4 1120.3,482.2 1126.0,486.7 1131.7,478.7 1137.1,483.9 1142.5,476.5 1147.8,482.8 1153.2,477.2 1159.0,489.4 1164.7,484.4 1170.1,495.6 1175.4,489.4 1181.3,497.7 1187.2,491.5 1192.9,498.5 1198.6,493.0 1204.7,498.5 1210.8,489.4 1216.2,496.3 1221.5,490.1 1226.9,497.0 1232.3,490.8 1238.0,497.7 1243.8,491.5 1249.2,498.8 1254.5,493.7 1260.6,499.6 1266.7,495.6 1272.1,499.6 1277.4,495.6 1282.8,499.6 1288.2,493.0 1290.0,498.5 1291.7,488.0 1295.3,490.2 1298.9,480.8 1301.5,485.9 1304.0,483.0 1307.2,485.9 1310.4,477.2 1313.2,485.1 1316.0,482.0 1318.9,485.1 1321.8,478.7 1324.9,484.2 1328.0,481.0 1331.3,484.2 1334.7,479.4 1337.3,485.1 1340.0,482.0 1342.4,485.1 1344.8,476.5 1346.0,476.5 1346.0,525.9 1343.3,525.9 1341.2,522.4 1339.0,528.0 1336.8,521.2 1334.7,524.5 1332.3,521.2 1330.0,526.0 1328.0,522.5 1326.1,530.2 1323.5,525.9 1321.0,530.0 1318.5,525.9 1316.1,534.5 1314.0,529.7 1312.0,535.0 1310.5,530.1 1308.9,541.0 1306.8,531.0 1304.6,536.0 1301.3,524.2 1298.0,528.0 1295.6,518.7 1293.2,521.6 1290.6,512.3 1288.0,514.0 1285.6,505.7 1283.2,510.2 1277.5,505.4 1271.7,509.5 1266.0,505.1 1260.2,508.7 1254.5,505.1 1248.8,512.3 1243.4,506.6 1238.0,514.5 1232.3,508.3 1226.6,516.6 1220.8,510.5 1215.1,517.3 1209.8,507.6 1204.4,513.8 1198.7,505.7 1192.9,510.2 1187.4,505.7 1181.9,511.6 1176.2,506.3 1170.4,515.9 1164.7,509.7 1159.0,523.1 1153.2,518.2 1147.5,528.8 1142.2,522.5 1136.8,531.7 1131.4,521.4 1126.0,527.4 1119.9,517.0 1113.8,521.6 1108.4,514.1 1103.1,519.5 1097.3,512.1 1091.6,518.0 1085.9,512.1 1080.2,518.8 1074.5,513.1 1068.7,523.1 1063.0,517.5 1057.2,522.3 1051.5,517.0 1045.8,521.6 1040.0,517.0 1034.3,524.5 1029.7,519.2 1025.0,525.9 1019.1,517.5 1013.3,522.3 1007.5,515.0 1001.8,520.2 996.1,515.0 990.4,523.1 985.0,518.2 979.6,523.8 973.5,518.2 967.4,523.1 961.7,518.2 956.0,524.5 951.0,519.2 946.0,525.9 940.2,516.0 934.5,520.9 928.8,516.0 923.0,523.1 917.6,518.2 912.3,523.8 906.9,518.2 901.5,523.1 895.8,516.0 890.1,520.9 884.4,516.0 878.6,520.9 872.9,514.1 867.2,519.5 861.7,511.3 856.2,517.3 850.5,511.3 844.7,520.2 839.0,515.0 833.2,521.6 827.9,517.0 822.5,521.6 816.8,517.0 811.0,527.4 805.3,521.4 799.6,528.8 793.9,518.7 788.1,523.8 782.4,509.7 776.6,515.9 770.9,508.3 765.2,514.5 759.8,507.6 754.4,513.8 748.7,506.9 743.0,513.0 737.2,506.3 731.5,511.6 726.1,504.8 720.8,508.0 715.9,504.0 711.0,506.0 707.0,502.5" fill="url(#rw)"/><polyline points="711.0,504.4 715.9,504.0 720.8,505.5 726.1,504.8 731.5,507.5 737.2,506.3 743.0,508.3 748.7,506.9 754.4,508.7 759.8,507.2 765.2,509.1 770.9,507.5 776.6,509.9 782.4,508.1 788.1,514.2 793.9,511.4 799.6,517.0 805.3,513.0 811.0,516.2 816.8,510.5 822.5,513.0 827.9,510.5 833.2,513.0 839.0,509.9 844.7,512.2 850.5,508.7 856.2,510.6 861.7,508.7 867.2,511.9 872.9,509.6 878.6,512.6 884.4,510.2 890.1,512.6 895.8,510.2 901.5,513.8 906.9,511.2 912.3,514.2 917.6,511.2 923.0,513.8 928.8,510.2 934.5,512.6 940.2,510.2 946.0,515.4 951.0,511.7 956.0,514.6 961.7,511.2 967.4,513.8 973.5,511.2 979.6,514.2 985.0,511.2 990.4,513.8 996.1,509.9 1001.8,512.2 1007.5,509.9 1013.3,513.4 1019.1,510.8 1025.0,515.4 1029.7,511.7 1034.3,514.6 1040.0,510.5 1045.8,513.0 1051.5,510.5 1057.2,513.4 1063.0,510.8 1068.7,513.8 1074.5,509.3 1080.2,511.5 1085.9,509.0 1091.6,511.0 1097.3,509.0 1103.1,511.9 1108.4,509.6 1113.8,513.0 1119.9,510.5 1126.0,516.2 1131.4,513.0 1136.8,518.6 1142.2,513.5 1147.5,517.0 1153.2,511.2 1159.0,513.8 1164.7,508.1 1170.4,509.9 1176.2,506.3 1181.9,507.5 1187.4,505.7 1192.9,506.7 1198.7,505.7 1204.4,508.7 1209.8,507.2 1215.1,510.6 1220.8,508.4 1226.6,510.3 1232.3,507.5 1238.0,509.1 1243.4,506.6 1248.8,507.9 1254.5,505.1 1260.2,505.9 1266.0,505.1 1271.7,506.4 1277.5,505.4 1283.2,506.7 1285.6,505.7 1288.0,508.8 1290.6,507.3" fill="none" stroke="#000" stroke-width="1" opacity="0.85"/><polyline points="711.0,501.2 713.4,501.6 715.8,500.6 721.1,501.2 726.5,499.1 732.2,500.1 738.0,497.4 743.7,498.9 749.4,496.3 754.8,498.2 760.2,495.0 765.9,497.6 771.6,495.4 777.0,497.6 782.4,492.4 788.1,495.4 793.8,489.9 799.5,494.1 805.3,490.4 811.0,495.4 816.8,492.4 822.5,495.4 828.2,489.0 833.2,493.4 838.2,489.5 844.0,495.7 849.7,492.9 855.5,496.4 861.4,493.8 867.1,496.4 872.9,491.6 877.9,494.9 882.9,490.6 889.0,494.2 895.1,489.5 900.9,493.9 906.6,490.2 912.0,495.9 917.3,493.1 923.4,496.2 929.5,493.4 935.2,496.2 940.9,489.0 946.3,493.1 951.7,487.4 957.0,491.9 962.4,487.4 967.8,492.7 973.2,488.4 978.9,494.7 984.6,491.3 990.4,496.7 996.1,494.1 1001.9,496.7 1007.6,493.1 1013.0,495.9 1018.3,488.4 1024.2,493.2 1030.0,489.1 1035.8,493.2 1041.5,488.4 1047.2,493.4 1053.0,489.5 1058.0,495.1 1063.0,492.0 1068.7,497.4 1074.4,495.2 1080.2,497.4 1085.9,495.2 1092.0,497.4 1098.0,494.5 1103.4,496.9 1108.8,493.8 1114.5,496.4 1120.3,492.4 1126.0,495.4 1131.7,490.6 1137.1,494.2 1142.5,489.5 1147.8,493.6 1153.2,489.9 1159.0,496.2 1164.7,493.4 1170.1,497.9 1175.4,495.9 1181.3,498.6 1187.2,497.0 1192.9,499.2 1198.6,497.8 1204.7,499.2 1210.8,495.9 1216.2,498.2 1221.5,496.3 1226.9,498.4 1232.3,496.6 1238.0,498.6 1243.8,497.0 1249.2,499.4 1254.5,498.1 1260.6,500.1 1266.7,499.1 1272.1,500.1 1277.4,499.1 1282.8,500.1 1288.2,497.8 1290.0,499.2" fill="none" stroke="#000" stroke-width="1" stroke-dasharray="1.5 4" opacity="0.8"/><rect x="17" y="260" width="366" height="1" fill="#007E00"/><rect x="17" y="502" width="366" height="1" fill="#8A0000"/><polygon points="384.0,260.0 385.4,260.0 388.2,252.5 390.2,252.5 393.0,260.0 396.7,260.0 399.5,252.5 401.5,252.5 404.3,260.0 408.0,260.0 410.8,252.5 412.8,252.5 415.6,260.0 419.2,260.0 422.0,252.5 424.0,252.5 426.8,260.0 430.5,260.0 433.3,252.5 435.3,252.5 438.1,260.0 441.8,260.0 444.6,252.5 446.6,252.5 449.4,260.0 453.1,260.0 455.9,252.5 457.9,252.5 460.7,260.0 464.4,260.0 467.2,252.5 469.2,252.5 472.0,260.0 475.6,260.0 478.4,252.5 480.4,252.5 483.2,260.0 486.9,260.0 489.7,252.5 491.7,252.5 494.5,260.0 498.2,260.0 501.0,252.5 503.0,252.5 505.8,260.0 509.5,260.0 512.3,252.5 514.3,252.5 517.1,260.0 520.8,260.0 523.6,252.5 525.6,252.5 528.4,260.0 532.0,260.0 534.8,252.5 536.8,252.5 539.6,260.0 543.3,260.0 546.1,252.5 548.1,252.5 550.9,260.0 554.6,260.0 557.4,252.5 559.4,252.5 562.2,260.0 565.9,260.0 568.7,252.5 570.7,252.5 573.5,260.0 577.2,260.0 580.0,252.5 582.0,252.5 584.8,260.0 588.4,260.0 591.2,252.5 593.2,252.5 596.0,260.0 599.7,260.0 602.5,252.5 604.5,252.5 607.3,260.0 611.0,260.0 613.8,252.5 615.8,252.5 618.6,260.0 622.3,260.0 625.1,252.5 627.1,252.5 629.9,260.0 633.6,260.0 636.4,252.5 638.4,252.5 641.2,260.0 644.8,260.0 647.6,252.5 649.6,252.5 652.4,260.0 656.1,260.0 658.9,252.5 660.9,252.5 663.7,260.0 667.4,260.0 670.2,252.5 672.2,252.5 675.0,260.0 678.7,260.0 681.5,252.5 683.5,252.5 686.3,260.0 690.0,260.0 692.8,252.5 694.8,252.5 697.6,260.0 701.2,260.0 704.0,252.5 706.0,252.5 708.8,260.0 707.0,260.0 707.0,261.0 703.2,261.0 700.4,268.0 698.4,268.0 695.6,261.0 691.9,261.0 689.1,268.0 687.1,268.0 684.3,261.0 680.6,261.0 677.8,268.0 675.8,268.0 673.0,261.0 669.4,261.0 666.6,268.0 664.6,268.0 661.8,261.0 658.1,261.0 655.3,268.0 653.3,268.0 650.5,261.0 646.8,261.0 644.0,268.0 642.0,268.0 639.2,261.0 635.5,261.0 632.7,268.0 630.7,268.0 627.9,261.0 624.2,261.0 621.4,268.0 619.4,268.0 616.6,261.0 613.0,261.0 610.2,268.0 608.2,268.0 605.4,261.0 601.7,261.0 598.9,268.0 596.9,268.0 594.1,261.0 590.4,261.0 587.6,268.0 585.6,268.0 582.8,261.0 579.1,261.0 576.3,268.0 574.3,268.0 571.5,261.0 567.8,261.0 565.0,268.0 563.0,268.0 560.2,261.0 556.6,261.0 553.8,268.0 551.8,268.0 549.0,261.0 545.3,261.0 542.5,268.0 540.5,268.0 537.7,261.0 534.0,261.0 531.2,268.0 529.2,268.0 526.4,261.0 522.7,261.0 519.9,268.0 517.9,268.0 515.1,261.0 511.4,261.0 508.6,268.0 506.6,268.0 503.8,261.0 500.2,261.0 497.4,268.0 495.4,268.0 492.6,261.0 488.9,261.0 486.1,268.0 484.1,268.0 481.3,261.0 477.6,261.0 474.8,268.0 472.8,268.0 470.0,261.0 466.3,261.0 463.5,268.0 461.5,268.0 458.7,261.0 455.0,261.0 452.2,268.0 450.2,268.0 447.4,261.0 443.8,261.0 441.0,268.0 439.0,268.0 436.2,261.0 432.5,261.0 429.7,268.0 427.7,268.0 424.9,261.0 421.2,261.0 418.4,268.0 416.4,268.0 413.6,261.0 409.9,261.0 407.1,268.0 405.1,268.0 402.3,261.0 398.6,261.0 395.8,268.0 393.8,268.0 391.0,261.0 384.0,261.0" fill="#12F012"/><path d="M376 261l2-8 1.5 6 1.5-3 1 4 1 0v3l-1 4-1.5-2-1 7-1.5-5-1.5 2z" fill="#0a8a0a"/><path d="M377 503l2-4 1.5 3 1.5-1 1 2v2l-1 3-1.5-2-1 5-1.5-4z" fill="#8a0a0a"/><polygon points="384.0,502.0 385.0,502.0 387.8,499.0 389.8,499.0 392.6,502.0 396.3,502.0 399.1,499.0 401.1,499.0 403.9,502.0 407.6,502.0 410.4,499.0 412.4,499.0 415.2,502.0 418.8,502.0 421.6,499.0 423.6,499.0 426.4,502.0 430.1,502.0 432.9,499.0 434.9,499.0 437.7,502.0 441.4,502.0 444.2,499.0 446.2,499.0 449.0,502.0 452.7,502.0 455.5,499.0 457.5,499.0 460.3,502.0 464.0,502.0 466.8,499.0 468.8,499.0 471.6,502.0 475.2,502.0 478.0,499.0 480.0,499.0 482.8,502.0 486.5,502.0 489.3,499.0 491.3,499.0 494.1,502.0 497.8,502.0 500.6,499.0 502.6,499.0 505.4,502.0 509.1,502.0 511.9,499.0 513.9,499.0 516.7,502.0 520.4,502.0 523.2,499.0 525.2,499.0 528.0,502.0 531.6,502.0 534.4,499.0 536.4,499.0 539.2,502.0 542.9,502.0 545.7,499.0 547.7,499.0 550.5,502.0 554.2,502.0 557.0,499.0 559.0,499.0 561.8,502.0 565.5,502.0 568.3,499.0 570.3,499.0 573.1,502.0 576.8,502.0 579.6,499.0 581.6,499.0 584.4,502.0 588.0,502.0 590.8,499.0 592.8,499.0 595.6,502.0 599.3,502.0 602.1,499.0 604.1,499.0 606.9,502.0 610.6,502.0 613.4,499.0 615.4,499.0 618.2,502.0 621.9,502.0 624.7,499.0 626.7,499.0 629.5,502.0 633.2,502.0 636.0,499.0 638.0,499.0 640.8,502.0 644.4,502.0 647.2,499.0 649.2,499.0 652.0,502.0 655.7,502.0 658.5,499.0 660.5,499.0 663.3,502.0 667.0,502.0 669.8,499.0 671.8,499.0 674.6,502.0 678.3,502.0 681.1,499.0 683.1,499.0 685.9,502.0 689.6,502.0 692.4,499.0 694.4,499.0 697.2,502.0 700.8,502.0 703.6,499.0 705.6,499.0 708.4,502.0 707.0,502.0 707.0,503.0 702.8,503.0 700.0,507.0 698.0,507.0 695.2,503.0 691.5,503.0 688.7,507.0 686.7,507.0 683.9,503.0 680.2,503.0 677.4,507.0 675.4,507.0 672.6,503.0 669.0,503.0 666.2,507.0 664.2,507.0 661.4,503.0 657.7,503.0 654.9,507.0 652.9,507.0 650.1,503.0 646.4,503.0 643.6,507.0 641.6,507.0 638.8,503.0 635.1,503.0 632.3,507.0 630.3,507.0 627.5,503.0 623.8,503.0 621.0,507.0 619.0,507.0 616.2,503.0 612.6,503.0 609.8,507.0 607.8,507.0 605.0,503.0 601.3,503.0 598.5,507.0 596.5,507.0 593.7,503.0 590.0,503.0 587.2,507.0 585.2,507.0 582.4,503.0 578.7,503.0 575.9,507.0 573.9,507.0 571.1,503.0 567.4,503.0 564.6,507.0 562.6,507.0 559.8,503.0 556.2,503.0 553.4,507.0 551.4,507.0 548.6,503.0 544.9,503.0 542.1,507.0 540.1,507.0 537.3,503.0 533.6,503.0 530.8,507.0 528.8,507.0 526.0,503.0 522.3,503.0 519.5,507.0 517.5,507.0 514.7,503.0 511.0,503.0 508.2,507.0 506.2,507.0 503.4,503.0 499.8,503.0 497.0,507.0 495.0,507.0 492.2,503.0 488.5,503.0 485.7,507.0 483.7,507.0 480.9,503.0 477.2,503.0 474.4,507.0 472.4,507.0 469.6,503.0 465.9,503.0 463.1,507.0 461.1,507.0 458.3,503.0 454.6,503.0 451.8,507.0 449.8,507.0 447.0,503.0 443.4,503.0 440.6,507.0 438.6,507.0 435.8,503.0 432.1,503.0 429.3,507.0 427.3,507.0 424.5,503.0 420.8,503.0 418.0,507.0 416.0,507.0 413.2,503.0 409.5,503.0 406.7,507.0 404.7,507.0 401.9,503.0 398.2,503.0 395.4,507.0 393.4,507.0 390.6,503.0 384.0,503.0" fill="#F00000"/><path d="M17 261.5H1346" stroke="#DCDCDC" stroke-width="1" stroke-dasharray="3 3" stroke-dashoffset="1" shape-rendering="crispEdges"/><path d="M17 503.5H1346" stroke="#DCDCDC" stroke-width="1" stroke-dasharray="3 3" stroke-dashoffset="1" shape-rendering="crispEdges"/><rect x="383" y="142" width="1" height="483" fill="#00E8F8"/><rect x="707" y="142" width="1" height="483" fill="#00E8F8"/><path d="M17 379l5 4-5 4z" fill="#00E000"/></svg>
<div style="left:17px;top:142px;width:40px;height:240px;overflow:hidden;"><div style="left:6px;top:7.0px;font-size:11px;line-height:14px;color:#E4E4E4;white-space:pre">0.3</div></div>
<div style="left:17px;top:142px;width:40px;height:240px;overflow:hidden;"><div style="left:6px;top:45.0px;font-size:11px;line-height:14px;color:#E4E4E4;white-space:pre">0.2</div></div>
<div style="left:17px;top:142px;width:40px;height:240px;overflow:hidden;"><div style="left:6px;top:83.0px;font-size:11px;line-height:14px;color:#E4E4E4;white-space:pre">0.1</div></div>
<div style="left:17px;top:142px;width:40px;height:240px;overflow:hidden;"><div style="left:6px;top:121.0px;font-size:11px;line-height:14px;color:#E4E4E4;white-space:pre">0.0</div></div>
<div style="left:17px;top:142px;width:40px;height:240px;overflow:hidden;"><div style="left:5px;top:158.0px;font-size:11px;line-height:14px;color:#E4E4E4;white-space:pre">-0.1</div></div>
<div style="left:17px;top:142px;width:40px;height:240px;overflow:hidden;"><div style="left:5px;top:196.0px;font-size:11px;line-height:14px;color:#E4E4E4;white-space:pre">-0.2</div></div>
<div style="left:17px;top:142px;width:40px;height:240px;overflow:hidden;"><div style="left:5px;top:234.0px;font-size:11px;line-height:14px;color:#E4E4E4;white-space:pre">-0.3</div></div>
<div style="left:17px;top:384px;width:40px;height:240px;overflow:hidden;"><div style="left:6px;top:7.0px;font-size:11px;line-height:14px;color:#E4E4E4;white-space:pre">0.3</div></div>
<div style="left:17px;top:384px;width:40px;height:240px;overflow:hidden;"><div style="left:6px;top:45.0px;font-size:11px;line-height:14px;color:#E4E4E4;white-space:pre">0.2</div></div>
<div style="left:17px;top:384px;width:40px;height:240px;overflow:hidden;"><div style="left:6px;top:83.0px;font-size:11px;line-height:14px;color:#E4E4E4;white-space:pre">0.1</div></div>
<div style="left:17px;top:384px;width:40px;height:240px;overflow:hidden;"><div style="left:6px;top:121.0px;font-size:11px;line-height:14px;color:#E4E4E4;white-space:pre">0.0</div></div>
<div style="left:17px;top:384px;width:40px;height:240px;overflow:hidden;"><div style="left:5px;top:158.0px;font-size:11px;line-height:14px;color:#E4E4E4;white-space:pre">-0.1</div></div>
<div style="left:17px;top:384px;width:40px;height:240px;overflow:hidden;"><div style="left:5px;top:196.0px;font-size:11px;line-height:14px;color:#E4E4E4;white-space:pre">-0.2</div></div>
<div style="left:17px;top:384px;width:40px;height:240px;overflow:hidden;"><div style="left:5px;top:234.0px;font-size:11px;line-height:14px;color:#E4E4E4;white-space:pre">-0.3</div></div>
<div style="left:17px;top:634px;width:1329px;height:1px;background:#fff;"></div>
<div style="left:17px;top:635px;width:1329px;height:16px;background:#D4D0C8;"></div>
<div style="left:17px;top:651px;width:1329px;height:1px;background:#fff;"></div>
<svg style="left:0px;top:0px" width="1366" height="660"><path d="M16.5 635v6M22.5 635v2M27.5 635v2M33.5 635v2M38.5 635v2M44.5 635v4M50.5 635v2M55.5 635v2M61.5 635v2M67.5 635v2M72.5 635v6M78.5 635v2M83.5 635v2M89.5 635v2M95.5 635v2M100.5 635v4M106.5 635v2M112.5 635v2M117.5 635v2M123.5 635v2M129.5 635v6M134.5 635v2M140.5 635v2M145.5 635v2M151.5 635v2M157.5 635v4M162.5 635v2M168.5 635v2M174.5 635v2M179.5 635v2M185.5 635v6M190.5 635v2M196.5 635v2M202.5 635v2M207.5 635v2M213.5 635v4M219.5 635v2M224.5 635v2M230.5 635v2M235.5 635v2M241.5 635v6M247.5 635v2M252.5 635v2M258.5 635v2M264.5 635v2M269.5 635v4M275.5 635v2M281.5 635v2M286.5 635v2M292.5 635v2M297.5 635v6M303.5 635v2M309.5 635v2M314.5 635v2M320.5 635v2M326.5 635v4M331.5 635v2M337.5 635v2M342.5 635v2M348.5 635v2M354.5 635v6M359.5 635v2M365.5 635v2M371.5 635v2M376.5 635v2M382.5 635v4M387.5 635v2M393.5 635v2M399.5 635v2M404.5 635v2M410.5 635v6M416.5 635v2M421.5 635v2M427.5 635v2M433.5 635v2M438.5 635v4M444.5 635v2M449.5 635v2M455.5 635v2M461.5 635v2M466.5 635v6M472.5 635v2M478.5 635v2M483.5 635v2M489.5 635v2M494.5 635v4M500.5 635v2M506.5 635v2M511.5 635v2M517.5 635v2M523.5 635v6M528.5 635v2M534.5 635v2M539.5 635v2M545.5 635v2M551.5 635v4M556.5 635v2M562.5 635v2M568.5 635v2M573.5 635v2M579.5 635v6M585.5 635v2M590.5 635v2M596.5 635v2M601.5 635v2M607.5 635v4M613.5 635v2M618.5 635v2M624.5 635v2M630.5 635v2M635.5 635v6M641.5 635v2M646.5 635v2M652.5 635v2M658.5 635v2M663.5 635v4M669.5 635v2M675.5 635v2M680.5 635v2M686.5 635v2M692.5 635v6M697.5 635v2M703.5 635v2M708.5 635v2M714.5 635v2M720.5 635v4M725.5 635v2M731.5 635v2M737.5 635v2M742.5 635v2M748.5 635v6M753.5 635v2M759.5 635v2M765.5 635v2M770.5 635v2M776.5 635v4M782.5 635v2M787.5 635v2M793.5 635v2M798.5 635v2M804.5 635v6M810.5 635v2M815.5 635v2M821.5 635v2M827.5 635v2M832.5 635v4M838.5 635v2M844.5 635v2M849.5 635v2M855.5 635v2M860.5 635v6M866.5 635v2M872.5 635v2M877.5 635v2M883.5 635v2M889.5 635v4M894.5 635v2M900.5 635v2M905.5 635v2M911.5 635v2M917.5 635v6M922.5 635v2M928.5 635v2M934.5 635v2M939.5 635v2M945.5 635v4M950.5 635v2M956.5 635v2M962.5 635v2M967.5 635v2M973.5 635v6M979.5 635v2M984.5 635v2M990.5 635v2M996.5 635v2M1001.5 635v4M1007.5 635v2M1012.5 635v2M1018.5 635v2M1024.5 635v2M1029.5 635v6M1035.5 635v2M1041.5 635v2M1046.5 635v2M1052.5 635v2M1057.5 635v4M1063.5 635v2M1069.5 635v2M1074.5 635v2M1080.5 635v2M1086.5 635v6M1091.5 635v2M1097.5 635v2M1102.5 635v2M1108.5 635v2M1114.5 635v4M1119.5 635v2M1125.5 635v2M1131.5 635v2M1136.5 635v2M1142.5 635v6M1148.5 635v2M1153.5 635v2M1159.5 635v2M1164.5 635v2M1170.5 635v4M1176.5 635v2M1181.5 635v2M1187.5 635v2M1193.5 635v2M1198.5 635v6M1204.5 635v2M1209.5 635v2M1215.5 635v2M1221.5 635v2M1226.5 635v4M1232.5 635v2M1238.5 635v2M1243.5 635v2M1249.5 635v2M1255.5 635v6M1260.5 635v2M1266.5 635v2M1271.5 635v2M1277.5 635v2M1283.5 635v4M1288.5 635v2M1294.5 635v2M1300.5 635v2M1305.5 635v2M1311.5 635v6M1316.5 635v2M1322.5 635v2M1328.5 635v2M1333.5 635v2M1339.5 635v4M1345.5 635v2" stroke="#000" stroke-width="1" shape-rendering="crispEdges"/></svg>
<div style="left:17.5px;top:637.79px;font-size:11px;line-height:14px;color:#000;letter-spacing:0.3px;white-space:pre">0:00.0</div>
<div style="left:73.5px;top:637.79px;font-size:11px;line-height:14px;color:#000;letter-spacing:0.3px;white-space:pre">0:00.1</div>
<div style="left:130.5px;top:637.79px;font-size:11px;line-height:14px;color:#000;letter-spacing:0.3px;white-space:pre">0:00.2</div>
<div style="left:186.5px;top:637.79px;font-size:11px;line-height:14px;color:#000;letter-spacing:0.3px;white-space:pre">0:00.3</div>
<div style="left:242.5px;top:637.79px;font-size:11px;line-height:14px;color:#000;letter-spacing:0.3px;white-space:pre">0:00.4</div>
<div style="left:298.5px;top:637.79px;font-size:11px;line-height:14px;color:#000;letter-spacing:0.3px;white-space:pre">0:00.5</div>
<div style="left:355.5px;top:637.79px;font-size:11px;line-height:14px;color:#000;letter-spacing:0.3px;white-space:pre">0:00.6</div>
<div style="left:411.5px;top:637.79px;font-size:11px;line-height:14px;color:#000;letter-spacing:0.3px;white-space:pre">0:00.7</div>
<div style="left:467.5px;top:637.79px;font-size:11px;line-height:14px;color:#000;letter-spacing:0.3px;white-space:pre">0:00.8</div>
<div style="left:524.5px;top:637.79px;font-size:11px;line-height:14px;color:#000;letter-spacing:0.3px;white-space:pre">0:00.9</div>
<div style="left:580.5px;top:637.79px;font-size:11px;line-height:14px;color:#000;letter-spacing:0.3px;white-space:pre">0:01.0</div>
<div style="left:636.5px;top:637.79px;font-size:11px;line-height:14px;color:#000;letter-spacing:0.3px;white-space:pre">0:01.1</div>
<div style="left:692.5px;top:637.79px;font-size:11px;line-height:14px;color:#000;letter-spacing:0.3px;white-space:pre">0:01.2</div>
<div style="left:749.5px;top:637.79px;font-size:11px;line-height:14px;color:#000;letter-spacing:0.3px;white-space:pre">0:01.3</div>
<div style="left:805.5px;top:637.79px;font-size:11px;line-height:14px;color:#000;letter-spacing:0.3px;white-space:pre">0:01.4</div>
<div style="left:861.5px;top:637.79px;font-size:11px;line-height:14px;color:#000;letter-spacing:0.3px;white-space:pre">0:01.5</div>
<div style="left:918.5px;top:637.79px;font-size:11px;line-height:14px;color:#000;letter-spacing:0.3px;white-space:pre">0:01.6</div>
<div style="left:974.5px;top:637.79px;font-size:11px;line-height:14px;color:#000;letter-spacing:0.3px;white-space:pre">0:01.7</div>
<div style="left:1030.5px;top:637.79px;font-size:11px;line-height:14px;color:#000;letter-spacing:0.3px;white-space:pre">0:01.8</div>
<div style="left:1087.5px;top:637.79px;font-size:11px;line-height:14px;color:#000;letter-spacing:0.3px;white-space:pre">0:01.9</div>
<div style="left:1143.5px;top:637.79px;font-size:11px;line-height:14px;color:#000;letter-spacing:0.3px;white-space:pre">0:02.0</div>
<div style="left:1199.5px;top:637.79px;font-size:11px;line-height:14px;color:#000;letter-spacing:0.3px;white-space:pre">0:02.1</div>
<div style="left:1256.5px;top:637.79px;font-size:11px;line-height:14px;color:#000;letter-spacing:0.3px;white-space:pre">0:02.2</div>
<div style="left:1312.5px;top:637.79px;font-size:11px;line-height:14px;color:#000;letter-spacing:0.3px;white-space:pre">0:02.3</div>
<div style="left:17px;top:652px;width:1329px;height:2px;background:#D4D0C8;"></div>
<div style="left:14px;top:654px;width:1334px;height:2px;background:#808080;"></div>
<svg style="left:17px;top:656px" width="1329" height="40" viewBox="17 656 1329 40"><defs><linearGradient id="obg" x1="0" y1="0" x2="0" y2="1"><stop offset="0" stop-color="#000"/><stop offset="0.2" stop-color="#000"/><stop offset="0.65" stop-color="#262626"/><stop offset="0.85" stop-color="#1a1a1a"/><stop offset="1" stop-color="#000"/></linearGradient></defs><rect x="17" y="656" width="1329" height="40" fill="#000"/><rect x="17" y="656" width="1329" height="20" fill="url(#obg)"/><rect x="17" y="676" width="1329" height="20" fill="url(#obg)"/><polygon points="17.0,664.0 18.5,664.0 20.0,664.0 21.5,664.0 23.0,664.0 24.5,664.0 26.0,664.0 27.5,664.0 29.0,664.0 30.5,663.5 32.0,662.9 33.5,663.4 35.0,663.8 36.5,663.2 38.0,663.9 39.5,663.9 41.0,657.8 42.5,661.8 44.0,663.0 45.5,662.7 47.0,662.2 48.5,662.1 50.0,661.8 51.5,661.2 53.0,661.7 54.5,662.5 56.0,662.3 57.5,661.3 59.0,662.6 60.5,661.2 62.0,661.9 63.5,662.8 65.0,661.6 66.5,659.3 68.0,662.0 69.5,661.7 71.0,662.8 72.5,662.5 74.0,662.5 75.5,662.3 77.0,662.8 78.5,662.5 80.0,662.5 81.5,662.0 83.0,662.3 84.5,662.1 86.0,662.7 87.5,661.5 89.0,661.7 90.5,661.3 92.0,662.2 93.5,661.3 95.0,662.5 96.5,662.5 98.0,662.9 99.5,661.5 101.0,661.3 102.5,662.5 104.0,662.7 105.5,662.8 107.0,661.2 108.5,661.9 110.0,663.0 111.5,658.2 113.0,661.7 114.5,662.9 116.0,661.4 117.5,661.6 119.0,661.8 120.5,662.2 122.0,662.0 123.5,662.0 125.0,661.8 126.5,661.7 128.0,662.0 129.5,662.8 131.0,661.9 132.5,661.7 134.0,661.3 135.5,662.5 137.0,662.7 138.5,662.2 140.0,661.8 141.5,661.5 143.0,662.3 144.5,662.8 146.0,661.5 147.5,662.5 149.0,662.5 150.5,661.9 152.0,661.5 153.5,659.2 155.0,661.7 156.5,659.7 158.0,663.0 159.5,659.7 161.0,661.9 162.5,661.3 164.0,662.1 165.5,662.2 167.0,662.5 168.5,662.1 170.0,662.3 171.5,662.8 173.0,662.8 174.5,661.4 176.0,661.4 177.5,662.2 179.0,661.7 180.5,661.7 182.0,661.2 183.5,661.6 185.0,661.5 186.5,662.2 188.0,658.6 189.5,661.6 191.0,661.6 192.5,662.1 194.0,661.8 195.5,661.3 197.0,662.1 198.5,661.9 200.0,662.0 201.5,661.5 203.0,661.5 204.5,662.0 206.0,662.1 207.5,661.3 209.0,661.6 210.5,658.9 212.0,661.3 213.5,662.1 215.0,661.5 216.5,662.4 218.0,661.3 219.5,663.0 221.0,661.8 222.5,661.9 224.0,662.8 225.5,662.6 227.0,662.3 228.5,662.7 230.0,661.9 231.5,661.9 233.0,661.7 234.5,662.4 236.0,662.6 237.5,662.8 239.0,662.5 240.5,662.2 242.0,662.3 243.5,662.6 245.0,661.3 246.5,661.6 248.0,662.7 249.5,662.9 251.0,662.0 252.5,662.6 254.0,661.3 255.5,661.3 257.0,662.4 258.5,662.2 260.0,661.7 261.5,662.2 263.0,662.6 264.5,663.0 266.0,661.7 267.5,662.3 269.0,661.2 270.5,661.4 272.0,661.5 273.5,661.4 275.0,661.6 276.5,662.9 278.0,663.0 279.5,661.9 281.0,661.8 282.5,662.0 284.0,661.2 285.5,661.6 287.0,661.9 288.5,660.3 290.0,662.8 291.5,662.0 293.0,662.0 294.5,661.5 296.0,657.8 297.5,662.2 299.0,658.0 300.5,662.1 302.0,662.5 303.5,662.5 305.0,663.0 306.5,662.7 308.0,661.4 309.5,661.2 311.0,661.4 312.5,661.2 314.0,661.3 315.5,661.2 317.0,662.8 318.5,659.8 320.0,662.2 321.5,662.5 323.0,661.6 324.5,661.3 326.0,662.8 327.5,661.9 329.0,661.8 330.5,661.9 332.0,662.6 333.5,659.8 335.0,662.2 336.5,662.0 338.0,661.8 339.5,662.3 341.0,662.4 342.5,662.9 344.0,661.9 345.5,662.2 347.0,662.3 348.5,662.4 350.0,661.3 351.5,662.8 353.0,662.9 354.5,661.8 356.0,662.9 357.5,662.9 359.0,661.8 360.5,662.4 362.0,662.8 363.5,661.3 365.0,662.2 366.5,662.4 368.0,661.4 369.5,662.3 371.0,662.3 372.5,661.6 374.0,662.0 375.5,661.4 377.0,662.1 378.5,661.3 380.0,662.9 381.5,662.8 383.0,661.4 384.5,662.7 386.0,662.6 387.5,662.1 389.0,662.4 390.5,662.1 392.0,661.7 393.5,661.5 395.0,661.5 396.5,661.3 398.0,661.7 399.5,662.2 401.0,661.2 402.5,662.6 404.0,659.0 405.5,661.8 407.0,662.9 408.5,659.6 410.0,662.6 411.5,661.9 413.0,662.5 414.5,662.4 416.0,662.1 417.5,661.4 419.0,661.3 420.5,662.9 422.0,662.3 423.5,662.5 425.0,659.9 426.5,661.6 428.0,662.7 429.5,662.5 431.0,661.9 432.5,662.0 434.0,663.0 435.5,661.5 437.0,661.7 438.5,662.2 440.0,661.5 441.5,662.2 443.0,661.5 444.5,662.1 446.0,662.4 447.5,662.4 449.0,662.4 450.5,662.3 452.0,661.5 453.5,662.3 455.0,662.0 456.5,661.2 458.0,661.9 459.5,662.0 461.0,662.3 462.5,662.6 464.0,661.3 465.5,662.4 467.0,662.7 468.5,661.7 470.0,661.5 471.5,662.6 473.0,662.3 474.5,662.2 476.0,661.6 477.5,662.4 479.0,662.3 480.5,661.6 482.0,663.0 483.5,661.8 485.0,662.1 486.5,661.9 488.0,661.4 489.5,662.1 491.0,661.2 492.5,661.5 494.0,661.9 495.5,662.6 497.0,662.4 498.5,662.2 500.0,662.8 501.5,662.0 503.0,661.4 504.5,661.9 506.0,662.5 507.5,662.0 509.0,662.0 510.5,662.7 512.0,661.8 513.5,661.7 515.0,659.6 516.5,662.7 518.0,662.7 519.5,662.0 521.0,662.9 522.5,661.3 524.0,662.3 525.5,661.6 527.0,661.2 528.5,662.3 530.0,661.4 531.5,662.2 533.0,662.9 534.5,661.7 536.0,662.5 537.5,662.8 539.0,659.0 540.5,662.6 542.0,658.8 543.5,661.8 545.0,661.6 546.5,662.0 548.0,661.6 549.5,659.2 551.0,658.7 552.5,662.3 554.0,659.2 555.5,662.1 557.0,662.1 558.5,661.3 560.0,661.5 561.5,662.7 563.0,662.6 564.5,659.7 566.0,662.4 567.5,661.7 569.0,661.3 570.5,662.6 572.0,662.6 573.5,661.8 575.0,661.8 576.5,662.6 578.0,661.8 579.5,662.8 581.0,662.0 582.5,661.9 584.0,661.6 585.5,661.6 587.0,662.0 588.5,658.6 590.0,662.3 591.5,662.7 593.0,662.4 594.5,662.1 596.0,661.8 597.5,662.7 599.0,661.9 600.5,661.6 602.0,662.6 603.5,662.0 605.0,661.9 606.5,661.4 608.0,663.0 609.5,662.2 611.0,662.9 612.5,662.0 614.0,662.7 615.5,662.4 617.0,662.5 618.5,661.5 620.0,662.7 621.5,659.1 623.0,662.6 624.5,662.1 626.0,662.7 627.5,662.9 629.0,662.7 630.5,662.2 632.0,661.2 633.5,662.6 635.0,662.6 636.5,662.3 638.0,659.4 639.5,662.9 641.0,661.4 642.5,662.2 644.0,662.3 645.5,662.4 647.0,662.7 648.5,662.2 650.0,661.2 651.5,662.6 653.0,661.8 654.5,663.0 656.0,662.3 657.5,662.5 659.0,661.3 660.5,661.7 662.0,662.4 663.5,661.4 665.0,659.6 666.5,662.9 668.0,662.9 669.5,662.0 671.0,662.5 672.5,662.7 674.0,661.7 675.5,661.4 677.0,662.4 678.5,663.0 680.0,661.5 681.5,661.8 683.0,661.8 684.5,661.4 686.0,662.8 687.5,662.9 689.0,662.1 690.5,662.3 692.0,661.8 693.5,662.4 695.0,662.0 696.5,659.3 698.0,662.9 699.5,662.1 701.0,662.4 702.5,662.4 704.0,662.5 705.5,662.2 707.0,662.3 708.5,661.6 710.0,662.3 711.5,661.5 713.0,659.5 714.5,662.4 716.0,662.7 717.5,661.8 719.0,662.0 720.5,662.1 722.0,661.9 723.5,661.3 725.0,661.4 726.5,661.7 728.0,661.5 729.5,662.1 731.0,662.5 732.5,662.6 734.0,662.7 735.5,661.1 737.0,662.8 738.5,662.1 740.0,659.3 741.5,661.6 743.0,662.5 744.5,662.4 746.0,661.5 747.5,661.7 749.0,661.6 750.5,661.8 752.0,663.0 753.5,661.3 755.0,662.2 756.5,661.3 758.0,661.7 759.5,662.5 761.0,662.8 762.5,662.0 764.0,662.4 765.5,662.5 767.0,661.6 768.5,661.8 770.0,662.7 771.5,661.3 773.0,662.8 774.5,662.0 776.0,662.5 777.5,662.3 779.0,662.9 780.5,662.9 782.0,661.2 783.5,662.1 785.0,659.4 786.5,661.9 788.0,661.4 789.5,661.5 791.0,663.0 792.5,662.9 794.0,662.4 795.5,662.6 797.0,662.1 798.5,661.7 800.0,661.5 801.5,662.8 803.0,661.7 804.5,663.0 806.0,662.3 807.5,661.5 809.0,662.4 810.5,662.4 812.0,661.7 813.5,662.0 815.0,662.8 816.5,659.5 818.0,662.4 819.5,662.6 821.0,661.6 822.5,662.2 824.0,662.3 825.5,662.5 827.0,662.4 828.5,661.2 830.0,662.3 831.5,661.9 833.0,661.9 834.5,662.8 836.0,662.2 837.5,662.3 839.0,662.0 840.5,661.9 842.0,661.9 843.5,662.2 845.0,662.4 846.5,662.3 848.0,661.2 849.5,661.5 851.0,661.5 852.5,657.5 854.0,662.5 855.5,662.0 857.0,662.5 858.5,662.0 860.0,662.6 861.5,661.6 863.0,661.6 864.5,660.5 866.0,661.5 867.5,662.3 869.0,661.4 870.5,662.6 872.0,661.7 873.5,659.9 875.0,661.9 876.5,661.7 878.0,661.8 879.5,662.8 881.0,662.4 882.5,661.8 884.0,662.4 885.5,661.9 887.0,662.3 888.5,661.3 890.0,662.6 891.5,661.4 893.0,661.8 894.5,662.3 896.0,659.6 897.5,662.2 899.0,661.7 900.5,662.3 902.0,662.5 903.5,661.5 905.0,662.0 906.5,662.8 908.0,661.7 909.5,661.4 911.0,661.9 912.5,662.2 914.0,661.9 915.5,661.2 917.0,661.8 918.5,662.9 920.0,661.8 921.5,662.6 923.0,662.3 924.5,662.7 926.0,661.7 927.5,661.7 929.0,658.5 930.5,659.0 932.0,662.0 933.5,662.5 935.0,662.0 936.5,662.1 938.0,662.6 939.5,662.6 941.0,662.2 942.5,661.5 944.0,662.1 945.5,661.4 947.0,663.0 948.5,661.7 950.0,660.3 951.5,661.3 953.0,662.9 954.5,662.5 956.0,662.4 957.5,661.4 959.0,662.1 960.5,662.5 962.0,662.3 963.5,662.4 965.0,662.9 966.5,662.0 968.0,662.6 969.5,662.4 971.0,661.7 972.5,662.3 974.0,661.9 975.5,661.9 977.0,661.9 978.5,662.1 980.0,662.9 981.5,662.5 983.0,661.5 984.5,661.8 986.0,661.5 987.5,661.5 989.0,662.9 990.5,661.9 992.0,658.0 993.5,658.6 995.0,661.8 996.5,662.9 998.0,661.6 999.5,662.2 1001.0,661.7 1002.5,661.5 1004.0,662.8 1005.5,661.3 1007.0,662.6 1008.5,661.5 1010.0,659.6 1011.5,661.8 1013.0,661.8 1014.5,662.8 1016.0,661.9 1017.5,662.7 1019.0,662.1 1020.5,661.5 1022.0,662.1 1023.5,661.7 1025.0,661.7 1026.5,662.9 1028.0,661.7 1029.5,662.0 1031.0,662.2 1032.5,661.6 1034.0,658.2 1035.5,662.0 1037.0,661.3 1038.5,662.8 1040.0,662.6 1041.5,662.8 1043.0,661.4 1044.5,662.3 1046.0,662.5 1047.5,662.5 1049.0,662.0 1050.5,662.5 1052.0,662.5 1053.5,662.1 1055.0,661.5 1056.5,662.0 1058.0,661.8 1059.5,658.7 1061.0,661.6 1062.5,662.3 1064.0,662.1 1065.5,662.6 1067.0,661.3 1068.5,661.4 1070.0,662.8 1071.5,658.3 1073.0,662.9 1074.5,661.8 1076.0,662.1 1077.5,662.7 1079.0,662.1 1080.5,662.2 1082.0,662.1 1083.5,662.0 1085.0,662.4 1086.5,661.2 1088.0,661.5 1089.5,662.1 1091.0,661.9 1092.5,662.8 1094.0,662.9 1095.5,659.7 1097.0,661.8 1098.5,661.6 1100.0,662.9 1101.5,661.5 1103.0,659.0 1104.5,661.9 1106.0,661.8 1107.5,661.4 1109.0,662.5 1110.5,662.4 1112.0,662.5 1113.5,661.4 1115.0,662.5 1116.5,661.8 1118.0,662.9 1119.5,662.6 1121.0,662.3 1122.5,661.2 1124.0,661.6 1125.5,661.6 1127.0,661.9 1128.5,658.8 1130.0,662.9 1131.5,662.6 1133.0,661.3 1134.5,662.7 1136.0,662.7 1137.5,661.4 1139.0,662.2 1140.5,662.5 1142.0,662.7 1143.5,662.4 1145.0,662.1 1146.5,661.6 1148.0,662.9 1149.5,662.4 1151.0,662.1 1152.5,662.0 1154.0,661.2 1155.5,661.5 1157.0,661.3 1158.5,661.6 1160.0,662.7 1161.5,660.6 1163.0,662.1 1164.5,660.4 1166.0,662.5 1167.5,662.1 1169.0,662.4 1170.5,662.2 1172.0,662.4 1173.5,661.3 1175.0,662.7 1176.5,662.5 1178.0,662.6 1179.5,661.3 1181.0,661.8 1182.5,662.1 1184.0,659.6 1185.5,662.0 1187.0,662.8 1188.5,661.8 1190.0,662.2 1191.5,662.6 1193.0,662.5 1194.5,662.2 1196.0,662.1 1197.5,661.5 1199.0,662.6 1200.5,661.6 1202.0,661.8 1203.5,661.5 1205.0,661.5 1206.5,658.6 1208.0,661.6 1209.5,661.3 1211.0,661.8 1212.5,661.4 1214.0,661.8 1215.5,661.9 1217.0,662.9 1218.5,661.6 1220.0,661.3 1221.5,662.3 1223.0,662.7 1224.5,661.8 1226.0,662.1 1227.5,662.7 1229.0,661.3 1230.5,661.4 1232.0,661.9 1233.5,662.4 1235.0,658.5 1236.5,662.1 1238.0,662.6 1239.5,660.8 1241.0,662.1 1242.5,662.3 1244.0,662.1 1245.5,662.2 1247.0,662.0 1248.5,661.4 1250.0,661.2 1251.5,659.7 1253.0,662.5 1254.5,662.4 1256.0,661.7 1257.5,662.8 1259.0,659.7 1260.5,661.7 1262.0,662.2 1263.5,662.3 1265.0,658.6 1266.5,662.9 1268.0,662.9 1269.5,662.8 1271.0,662.1 1272.5,661.2 1274.0,662.6 1275.5,662.3 1277.0,662.5 1278.5,662.2 1280.0,662.2 1281.5,662.3 1283.0,662.2 1284.5,662.2 1286.0,661.2 1287.5,661.8 1289.0,661.7 1290.5,661.8 1292.0,664.0 1293.5,664.0 1295.0,664.0 1296.5,664.0 1298.0,664.0 1299.5,664.0 1301.0,664.0 1302.5,664.0 1304.0,664.0 1305.5,664.0 1307.0,664.0 1308.5,664.0 1310.0,664.0 1311.5,664.0 1313.0,664.0 1314.5,664.0 1316.0,664.0 1317.5,664.0 1319.0,664.0 1320.5,664.0 1322.0,664.0 1323.5,664.0 1325.0,664.0 1326.5,664.0 1328.0,664.0 1329.5,664.0 1331.0,664.0 1332.5,664.0 1334.0,664.0 1335.5,664.0 1337.0,664.0 1338.5,664.0 1340.0,664.0 1341.5,664.0 1343.0,664.0 1344.5,664.0 1346.0,664.0 1346.0,666.0 1344.5,666.0 1343.0,666.0 1341.5,666.0 1340.0,666.0 1338.5,666.0 1337.0,666.0 1335.5,666.0 1334.0,666.0 1332.5,666.0 1331.0,666.0 1329.5,666.0 1328.0,666.0 1326.5,666.0 1325.0,666.0 1323.5,666.0 1322.0,666.0 1320.5,666.0 1319.0,666.0 1317.5,666.0 1316.0,666.0 1314.5,666.0 1313.0,666.0 1311.5,666.0 1310.0,666.0 1308.5,666.0 1307.0,666.0 1305.5,666.0 1304.0,666.0 1302.5,666.0 1301.0,666.0 1299.5,666.0 1298.0,666.0 1296.5,666.0 1295.0,666.0 1293.5,666.0 1292.0,666.0 1290.5,668.4 1289.0,668.5 1287.5,667.9 1286.0,668.6 1284.5,668.3 1283.0,668.2 1281.5,668.0 1280.0,668.0 1278.5,667.7 1277.0,667.7 1275.5,668.2 1274.0,667.4 1272.5,668.5 1271.0,667.7 1269.5,667.5 1268.0,667.1 1266.5,666.7 1265.0,670.4 1263.5,667.9 1262.0,668.0 1260.5,667.8 1259.0,669.8 1257.5,667.6 1256.0,668.2 1254.5,667.7 1253.0,667.7 1251.5,670.4 1250.0,668.3 1248.5,668.7 1247.0,668.5 1245.5,668.1 1244.0,667.4 1242.5,667.5 1241.0,668.1 1239.5,669.0 1238.0,667.1 1236.5,667.6 1235.0,671.6 1233.5,667.6 1232.0,668.5 1230.5,669.3 1229.0,669.3 1227.5,667.5 1226.0,667.7 1224.5,668.4 1223.0,667.0 1221.5,667.2 1220.0,668.7 1218.5,668.5 1217.0,667.3 1215.5,668.4 1214.0,668.9 1212.5,668.1 1211.0,668.8 1209.5,668.0 1208.0,669.0 1206.5,671.0 1205.0,668.1 1203.5,668.0 1202.0,668.5 1200.5,669.0 1199.0,667.7 1197.5,668.3 1196.0,667.6 1194.5,668.3 1193.0,667.5 1191.5,667.7 1190.0,668.1 1188.5,667.9 1187.0,667.1 1185.5,668.0 1184.0,669.9 1182.5,667.9 1181.0,668.3 1179.5,668.1 1178.0,667.1 1176.5,667.7 1175.0,667.7 1173.5,669.2 1172.0,667.3 1170.5,667.7 1169.0,667.7 1167.5,667.6 1166.0,667.3 1164.5,668.7 1163.0,667.9 1161.5,670.0 1160.0,667.5 1158.5,667.8 1157.0,668.0 1155.5,668.1 1154.0,668.9 1152.5,668.4 1151.0,667.7 1149.5,668.0 1148.0,666.8 1146.5,669.0 1145.0,668.0 1143.5,667.2 1142.0,666.9 1140.5,667.1 1139.0,667.4 1137.5,669.2 1136.0,667.5 1134.5,667.7 1133.0,669.3 1131.5,667.8 1130.0,666.8 1128.5,670.9 1127.0,668.0 1125.5,668.1 1124.0,668.2 1122.5,668.2 1121.0,668.1 1119.5,667.9 1118.0,666.9 1116.5,668.3 1115.0,667.8 1113.5,668.2 1112.0,667.2 1110.5,667.8 1109.0,667.7 1107.5,668.1 1106.0,667.9 1104.5,667.9 1103.0,670.5 1101.5,668.3 1100.0,667.5 1098.5,667.7 1097.0,668.3 1095.5,671.0 1094.0,667.4 1092.5,667.6 1091.0,668.6 1089.5,668.1 1088.0,667.9 1086.5,669.4 1085.0,668.1 1083.5,667.8 1082.0,668.4 1080.5,667.3 1079.0,668.1 1077.5,667.2 1076.0,668.0 1074.5,668.6 1073.0,667.4 1071.5,670.6 1070.0,667.0 1068.5,668.7 1067.0,668.1 1065.5,667.0 1064.0,667.7 1062.5,668.1 1061.0,668.4 1059.5,671.0 1058.0,668.5 1056.5,668.0 1055.0,668.7 1053.5,667.5 1052.0,667.3 1050.5,667.4 1049.0,667.7 1047.5,667.0 1046.0,667.8 1044.5,667.9 1043.0,668.9 1041.5,667.3 1040.0,667.5 1038.5,666.9 1037.0,669.2 1035.5,667.6 1034.0,672.0 1032.5,668.1 1031.0,667.5 1029.5,668.5 1028.0,668.4 1026.5,667.0 1025.0,668.0 1023.5,667.9 1022.0,667.7 1020.5,668.6 1019.0,668.0 1017.5,667.4 1016.0,667.9 1014.5,666.9 1013.0,668.6 1011.5,668.2 1010.0,670.2 1008.5,669.0 1007.0,667.4 1005.5,669.3 1004.0,667.0 1002.5,668.6 1001.0,667.8 999.5,667.6 998.0,668.3 996.5,667.1 995.0,668.8 993.5,671.2 992.0,672.7 990.5,668.7 989.0,666.7 987.5,668.7 986.0,668.2 984.5,668.8 983.0,668.2 981.5,667.4 980.0,666.9 978.5,668.2 977.0,667.9 975.5,667.8 974.0,667.9 972.5,667.2 971.0,667.7 969.5,667.3 968.0,667.3 966.5,667.8 965.0,666.7 963.5,667.6 962.0,667.6 960.5,667.3 959.0,667.8 957.5,668.7 956.0,667.8 954.5,667.9 953.0,666.7 951.5,669.3 950.0,669.4 948.5,667.9 947.0,667.3 945.5,668.4 944.0,668.1 942.5,669.2 941.0,667.4 939.5,667.4 938.0,667.0 936.5,668.2 935.0,667.5 933.5,667.2 932.0,668.3 930.5,671.1 929.0,672.6 927.5,667.8 926.0,668.8 924.5,667.4 923.0,667.3 921.5,667.0 920.0,668.8 918.5,667.0 917.0,668.8 915.5,669.3 914.0,668.7 912.5,668.0 911.0,668.0 909.5,667.9 908.0,668.1 906.5,667.1 905.0,668.5 903.5,668.6 902.0,667.3 900.5,668.2 899.0,667.9 897.5,667.6 896.0,669.9 894.5,667.8 893.0,668.8 891.5,669.1 890.0,667.2 888.5,669.0 887.0,667.7 885.5,668.5 884.0,667.2 882.5,668.1 881.0,668.2 879.5,667.3 878.0,667.8 876.5,667.8 875.0,668.3 873.5,669.7 872.0,668.5 870.5,667.7 869.0,669.3 867.5,667.8 866.0,668.1 864.5,670.2 863.0,668.2 861.5,668.9 860.0,667.8 858.5,668.0 857.0,667.1 855.5,667.6 854.0,667.4 852.5,673.1 851.0,668.5 849.5,669.1 848.0,668.4 846.5,667.3 845.0,668.1 843.5,668.1 842.0,667.6 840.5,668.2 839.0,667.5 837.5,667.8 836.0,667.7 834.5,667.4 833.0,668.2 831.5,668.6 830.0,667.4 828.5,669.0 827.0,667.4 825.5,667.9 824.0,667.4 822.5,667.5 821.0,669.0 819.5,667.2 818.0,668.0 816.5,670.3 815.0,667.1 813.5,667.6 812.0,668.7 810.5,667.4 809.0,668.1 807.5,668.7 806.0,667.9 804.5,666.8 803.0,668.8 801.5,667.1 800.0,669.2 798.5,668.7 797.0,668.3 795.5,666.9 794.0,667.1 792.5,667.4 791.0,666.7 789.5,668.0 788.0,668.5 786.5,668.7 785.0,670.9 783.5,668.2 782.0,669.4 780.5,667.1 779.0,667.0 777.5,667.2 776.0,667.5 774.5,668.2 773.0,666.8 771.5,668.7 770.0,666.9 768.5,668.6 767.0,668.2 765.5,667.6 764.0,667.9 762.5,667.8 761.0,666.8 759.5,668.0 758.0,667.7 756.5,668.0 755.0,667.6 753.5,669.0 752.0,667.4 750.5,667.8 749.0,668.3 747.5,668.7 746.0,668.4 744.5,668.0 743.0,667.3 741.5,668.7 740.0,670.7 738.5,668.3 737.0,667.4 735.5,669.2 734.0,667.0 732.5,667.3 731.0,667.5 729.5,667.7 728.0,668.7 726.5,668.9 725.0,668.9 723.5,668.5 722.0,668.5 720.5,667.9 719.0,667.7 717.5,667.6 716.0,667.0 714.5,668.0 713.0,670.5 711.5,668.3 710.0,667.5 708.5,668.6 707.0,668.1 705.5,668.4 704.0,667.2 702.5,667.7 701.0,667.1 699.5,667.9 698.0,666.7 696.5,670.4 695.0,668.1 693.5,667.2 692.0,667.7 690.5,667.4 689.0,667.5 687.5,667.0 686.0,667.1 684.5,668.8 683.0,668.8 681.5,667.8 680.0,668.2 678.5,667.1 677.0,667.1 675.5,668.3 674.0,668.1 672.5,667.1 671.0,667.6 669.5,668.2 668.0,667.0 666.5,667.2 665.0,669.9 663.5,669.0 662.0,667.1 660.5,667.7 659.0,669.1 657.5,667.1 656.0,667.9 654.5,666.8 653.0,668.0 651.5,667.0 650.0,669.3 648.5,667.8 647.0,667.0 645.5,667.7 644.0,667.4 642.5,668.2 641.0,669.1 639.5,667.3 638.0,670.9 636.5,668.2 635.0,667.9 633.5,667.5 632.0,669.1 630.5,667.2 629.0,667.1 627.5,667.4 626.0,667.5 624.5,668.4 623.0,667.0 621.5,670.6 620.0,667.6 618.5,668.1 617.0,667.1 615.5,667.6 614.0,666.8 612.5,667.7 611.0,667.2 609.5,668.1 608.0,667.0 606.5,668.1 605.0,668.2 603.5,667.5 602.0,667.2 600.5,668.8 599.0,668.0 597.5,667.0 596.0,668.8 594.5,668.3 593.0,667.9 591.5,667.5 590.0,667.7 588.5,672.1 587.0,668.5 585.5,668.1 584.0,668.1 582.5,667.8 581.0,667.4 579.5,667.1 578.0,668.4 576.5,667.8 575.0,668.3 573.5,668.0 572.0,667.1 570.5,667.6 569.0,668.1 567.5,668.5 566.0,667.9 564.5,670.8 563.0,667.1 561.5,667.8 560.0,668.5 558.5,668.2 557.0,667.6 555.5,668.5 554.0,670.4 552.5,667.8 551.0,672.1 549.5,670.4 548.0,668.5 546.5,667.5 545.0,668.8 543.5,668.1 542.0,672.4 540.5,667.3 539.0,671.0 537.5,667.2 536.0,667.1 534.5,668.7 533.0,667.4 531.5,667.6 530.0,668.7 528.5,667.8 527.0,669.3 525.5,668.3 524.0,667.9 522.5,668.7 521.0,666.8 519.5,668.2 518.0,667.1 516.5,667.3 515.0,670.4 513.5,668.5 512.0,668.4 510.5,667.7 509.0,667.4 507.5,667.7 506.0,667.3 504.5,668.5 503.0,669.1 501.5,667.7 500.0,667.3 498.5,668.4 497.0,667.4 495.5,667.6 494.0,667.6 492.5,669.1 491.0,669.1 489.5,668.1 488.0,668.4 486.5,668.4 485.0,668.3 483.5,668.0 482.0,666.9 480.5,668.6 479.0,668.2 477.5,667.1 476.0,668.2 474.5,667.9 473.0,668.2 471.5,667.0 470.0,667.9 468.5,668.1 467.0,667.4 465.5,667.2 464.0,669.0 462.5,667.2 461.0,667.4 459.5,667.8 458.0,668.0 456.5,668.3 455.0,667.4 453.5,667.4 452.0,667.8 450.5,668.2 449.0,667.2 447.5,667.8 446.0,667.1 444.5,668.3 443.0,668.5 441.5,667.3 440.0,669.0 438.5,667.9 437.0,668.3 435.5,668.2 434.0,667.3 432.5,668.3 431.0,667.9 429.5,667.5 428.0,667.1 426.5,668.6 425.0,669.8 423.5,667.7 422.0,667.7 420.5,667.3 419.0,668.3 417.5,668.7 416.0,668.3 414.5,667.9 413.0,667.8 411.5,667.7 410.0,667.6 408.5,669.7 407.0,667.2 405.5,667.8 404.0,670.1 402.5,667.2 401.0,668.3 399.5,668.0 398.0,668.2 396.5,668.8 395.0,669.0 393.5,669.0 392.0,668.2 390.5,668.1 389.0,667.8 387.5,667.8 386.0,667.7 384.5,667.4 383.0,668.8 381.5,667.4 380.0,667.4 378.5,669.2 377.0,668.0 375.5,667.9 374.0,668.3 372.5,668.9 371.0,667.8 369.5,667.5 368.0,668.4 366.5,668.0 365.0,667.6 363.5,669.3 362.0,667.3 360.5,667.5 359.0,667.8 357.5,667.3 356.0,667.3 354.5,668.6 353.0,667.1 351.5,666.8 350.0,668.5 348.5,667.8 347.0,668.2 345.5,668.1 344.0,667.8 342.5,667.4 341.0,668.0 339.5,667.4 338.0,668.4 336.5,667.5 335.0,667.3 333.5,669.8 332.0,667.9 330.5,667.8 329.0,668.4 327.5,667.8 326.0,667.5 324.5,668.3 323.0,669.1 321.5,667.4 320.0,667.7 318.5,669.4 317.0,667.2 315.5,668.9 314.0,668.6 312.5,668.8 311.0,668.6 309.5,668.1 308.0,668.0 306.5,667.2 305.0,666.7 303.5,667.3 302.0,667.6 300.5,667.8 299.0,671.7 297.5,667.8 296.0,671.2 294.5,668.6 293.0,668.2 291.5,668.5 290.0,667.5 288.5,669.5 287.0,667.8 285.5,667.7 284.0,669.1 282.5,667.9 281.0,668.4 279.5,668.7 278.0,667.1 276.5,667.1 275.0,668.7 273.5,669.0 272.0,669.0 270.5,669.0 269.0,668.4 267.5,667.7 266.0,668.4 264.5,667.3 263.0,667.4 261.5,667.7 260.0,667.8 258.5,667.2 257.0,667.6 255.5,669.1 254.0,668.0 252.5,667.8 251.0,667.6 249.5,667.1 248.0,667.0 246.5,668.6 245.0,668.8 243.5,667.8 242.0,667.2 240.5,667.3 239.0,667.8 237.5,667.4 236.0,667.8 234.5,668.0 233.0,668.9 231.5,667.8 230.0,668.6 228.5,667.4 227.0,667.7 225.5,667.3 224.0,667.0 222.5,668.4 221.0,668.0 219.5,666.8 218.0,669.1 216.5,667.7 215.0,668.4 213.5,667.8 212.0,668.4 210.5,670.9 209.0,668.4 207.5,668.6 206.0,667.4 204.5,668.1 203.0,668.6 201.5,668.1 200.0,667.9 198.5,668.6 197.0,668.2 195.5,668.3 194.0,668.2 192.5,668.3 191.0,667.9 189.5,668.2 188.0,670.3 186.5,668.1 185.0,667.9 183.5,669.0 182.0,668.8 180.5,668.8 179.0,668.5 177.5,667.5 176.0,669.2 174.5,668.7 173.0,667.3 171.5,667.3 170.0,668.1 168.5,668.2 167.0,667.7 165.5,667.5 164.0,667.3 162.5,668.3 161.0,668.5 159.5,670.2 158.0,666.8 156.5,670.2 155.0,668.0 153.5,669.7 152.0,668.4 150.5,667.9 149.0,667.4 147.5,667.4 146.0,669.2 144.5,667.5 143.0,667.5 141.5,669.0 140.0,668.1 138.5,667.6 137.0,667.5 135.5,667.2 134.0,667.9 132.5,668.4 131.0,667.7 129.5,666.7 128.0,668.5 126.5,668.6 125.0,668.6 123.5,667.5 122.0,667.9 120.5,668.2 119.0,668.7 117.5,668.2 116.0,668.9 114.5,667.3 113.0,669.0 111.5,671.8 110.0,667.2 108.5,667.5 107.0,669.1 105.5,667.6 104.0,667.4 102.5,667.0 101.0,667.9 99.5,668.2 98.0,667.2 96.5,667.8 95.0,667.6 93.5,669.0 92.0,667.2 90.5,668.9 89.0,667.9 87.5,668.0 86.0,667.7 84.5,668.3 83.0,668.2 81.5,668.2 80.0,667.1 78.5,667.3 77.0,666.9 75.5,667.9 74.0,667.3 72.5,667.8 71.0,667.0 69.5,668.5 68.0,667.6 66.5,669.9 65.0,668.0 63.5,667.6 62.0,667.8 60.5,668.1 59.0,667.3 57.5,668.0 56.0,667.6 54.5,667.8 53.0,667.9 51.5,669.3 50.0,667.9 48.5,667.9 47.0,668.2 45.5,666.9 44.0,666.7 42.5,667.7 41.0,673.5 39.5,666.2 38.0,666.0 36.5,667.0 35.0,666.2 33.5,666.7 32.0,667.1 30.5,666.6 29.0,666.0 27.5,666.0 26.0,666.0 24.5,666.0 23.0,666.0 21.5,666.0 20.0,666.0 18.5,666.0 17.0,666.0" fill="#008400"/><polygon points="17.0,684.0 18.5,684.0 20.0,684.0 21.5,684.0 23.0,684.0 24.5,684.0 26.0,684.0 27.5,684.0 29.0,684.0 30.5,682.9 32.0,682.9 33.5,683.3 35.0,683.4 36.5,683.8 38.0,683.7 39.5,684.0 41.0,681.7 42.5,681.7 44.0,681.6 45.5,681.9 47.0,681.6 48.5,681.8 50.0,682.1 51.5,682.2 53.0,682.7 54.5,682.6 56.0,682.9 57.5,681.5 59.0,682.5 60.5,682.0 62.0,681.6 63.5,682.6 65.0,681.9 66.5,678.7 68.0,681.5 69.5,681.6 71.0,681.2 72.5,681.2 74.0,682.9 75.5,681.3 77.0,682.8 78.5,682.0 80.0,682.2 81.5,682.4 83.0,681.4 84.5,681.8 86.0,682.6 87.5,681.6 89.0,681.5 90.5,682.4 92.0,682.6 93.5,682.0 95.0,682.0 96.5,679.3 98.0,682.7 99.5,681.8 101.0,682.2 102.5,682.1 104.0,682.0 105.5,681.4 107.0,681.4 108.5,681.8 110.0,682.4 111.5,681.3 113.0,682.2 114.5,682.0 116.0,682.8 117.5,681.5 119.0,682.2 120.5,682.2 122.0,681.5 123.5,678.3 125.0,682.3 126.5,682.8 128.0,681.8 129.5,681.4 131.0,681.2 132.5,683.0 134.0,681.7 135.5,682.0 137.0,681.9 138.5,682.8 140.0,682.6 141.5,681.9 143.0,682.2 144.5,681.7 146.0,681.4 147.5,682.8 149.0,679.0 150.5,681.6 152.0,680.0 153.5,681.5 155.0,682.6 156.5,682.2 158.0,682.0 159.5,681.9 161.0,681.3 162.5,678.6 164.0,680.7 165.5,681.2 167.0,681.8 168.5,678.9 170.0,682.0 171.5,682.1 173.0,682.4 174.5,681.9 176.0,682.4 177.5,682.5 179.0,681.6 180.5,683.0 182.0,681.4 183.5,681.3 185.0,681.3 186.5,681.5 188.0,681.6 189.5,681.9 191.0,682.0 192.5,681.4 194.0,681.7 195.5,682.7 197.0,681.8 198.5,683.0 200.0,682.0 201.5,681.9 203.0,682.4 204.5,681.4 206.0,682.9 207.5,681.9 209.0,681.6 210.5,682.7 212.0,681.9 213.5,681.5 215.0,681.9 216.5,681.5 218.0,681.5 219.5,681.4 221.0,682.4 222.5,681.2 224.0,682.6 225.5,682.2 227.0,679.6 228.5,681.6 230.0,682.0 231.5,678.4 233.0,681.7 234.5,682.4 236.0,682.1 237.5,681.8 239.0,682.7 240.5,683.0 242.0,681.8 243.5,681.6 245.0,681.3 246.5,682.7 248.0,682.1 249.5,681.9 251.0,682.3 252.5,682.3 254.0,683.0 255.5,682.9 257.0,681.3 258.5,681.5 260.0,681.9 261.5,682.2 263.0,682.8 264.5,682.5 266.0,681.8 267.5,682.7 269.0,681.7 270.5,681.9 272.0,682.3 273.5,681.0 275.0,682.2 276.5,682.8 278.0,682.0 279.5,681.7 281.0,681.6 282.5,682.5 284.0,681.6 285.5,681.5 287.0,682.9 288.5,681.4 290.0,682.6 291.5,679.0 293.0,682.8 294.5,681.6 296.0,682.1 297.5,682.2 299.0,682.6 300.5,682.3 302.0,682.7 303.5,682.6 305.0,682.6 306.5,682.7 308.0,682.0 309.5,683.0 311.0,683.0 312.5,682.1 314.0,681.4 315.5,682.8 317.0,682.8 318.5,682.8 320.0,682.1 321.5,679.8 323.0,682.1 324.5,683.0 326.0,678.6 327.5,682.0 329.0,681.5 330.5,682.8 332.0,681.7 333.5,681.9 335.0,682.6 336.5,682.9 338.0,682.0 339.5,682.6 341.0,682.6 342.5,682.8 344.0,682.5 345.5,681.5 347.0,681.5 348.5,682.9 350.0,682.5 351.5,681.5 353.0,681.4 354.5,681.2 356.0,683.0 357.5,682.6 359.0,682.2 360.5,682.0 362.0,681.6 363.5,682.2 365.0,682.2 366.5,681.4 368.0,681.5 369.5,682.4 371.0,682.0 372.5,681.9 374.0,682.9 375.5,682.3 377.0,682.6 378.5,682.4 380.0,682.4 381.5,682.7 383.0,682.4 384.5,682.7 386.0,682.0 387.5,682.7 389.0,681.6 390.5,681.2 392.0,682.8 393.5,681.7 395.0,679.3 396.5,681.7 398.0,682.0 399.5,682.3 401.0,681.8 402.5,682.4 404.0,681.7 405.5,683.0 407.0,682.9 408.5,681.6 410.0,683.0 411.5,683.0 413.0,682.3 414.5,682.5 416.0,681.5 417.5,681.4 419.0,681.3 420.5,681.4 422.0,681.5 423.5,682.5 425.0,681.5 426.5,681.7 428.0,682.6 429.5,681.2 431.0,681.5 432.5,682.6 434.0,681.7 435.5,681.8 437.0,682.2 438.5,681.8 440.0,682.2 441.5,682.9 443.0,682.9 444.5,682.2 446.0,682.2 447.5,682.1 449.0,683.0 450.5,681.9 452.0,681.8 453.5,682.9 455.0,682.3 456.5,681.3 458.0,681.5 459.5,682.7 461.0,682.5 462.5,679.8 464.0,683.0 465.5,682.6 467.0,682.9 468.5,682.6 470.0,682.6 471.5,682.5 473.0,682.6 474.5,682.4 476.0,681.5 477.5,682.2 479.0,682.3 480.5,681.4 482.0,680.9 483.5,682.5 485.0,681.8 486.5,682.4 488.0,683.0 489.5,682.9 491.0,678.9 492.5,682.2 494.0,683.0 495.5,681.4 497.0,681.9 498.5,682.3 500.0,680.3 501.5,682.4 503.0,681.7 504.5,682.1 506.0,682.5 507.5,682.0 509.0,682.7 510.5,682.7 512.0,681.5 513.5,681.9 515.0,682.0 516.5,678.6 518.0,682.5 519.5,682.2 521.0,681.8 522.5,682.6 524.0,682.2 525.5,681.5 527.0,681.5 528.5,682.9 530.0,681.8 531.5,682.9 533.0,682.6 534.5,682.0 536.0,682.5 537.5,682.5 539.0,683.0 540.5,681.5 542.0,681.5 543.5,681.6 545.0,682.5 546.5,682.0 548.0,683.0 549.5,681.9 551.0,681.8 552.5,681.7 554.0,682.4 555.5,682.7 557.0,682.0 558.5,682.3 560.0,682.7 561.5,682.1 563.0,681.8 564.5,681.3 566.0,682.4 567.5,681.7 569.0,682.3 570.5,682.7 572.0,681.2 573.5,682.4 575.0,682.6 576.5,682.9 578.0,682.5 579.5,681.6 581.0,682.7 582.5,681.6 584.0,682.6 585.5,677.9 587.0,682.3 588.5,681.6 590.0,681.6 591.5,680.6 593.0,682.1 594.5,683.0 596.0,681.9 597.5,682.1 599.0,682.7 600.5,682.4 602.0,678.9 603.5,681.4 605.0,681.4 606.5,682.2 608.0,682.9 609.5,681.7 611.0,681.5 612.5,681.7 614.0,681.2 615.5,682.0 617.0,682.6 618.5,682.5 620.0,682.1 621.5,682.7 623.0,682.1 624.5,681.6 626.0,682.3 627.5,682.5 629.0,681.9 630.5,682.4 632.0,682.6 633.5,681.6 635.0,681.6 636.5,682.6 638.0,682.7 639.5,682.2 641.0,681.5 642.5,679.9 644.0,681.3 645.5,682.4 647.0,681.2 648.5,682.3 650.0,681.6 651.5,681.6 653.0,681.9 654.5,682.4 656.0,682.3 657.5,682.9 659.0,682.3 660.5,681.4 662.0,681.8 663.5,679.0 665.0,681.8 666.5,682.1 668.0,681.7 669.5,683.0 671.0,681.4 672.5,682.2 674.0,682.1 675.5,679.2 677.0,680.0 678.5,681.6 680.0,681.5 681.5,682.0 683.0,683.0 684.5,681.4 686.0,682.3 687.5,681.4 689.0,682.4 690.5,682.1 692.0,677.3 693.5,681.2 695.0,682.0 696.5,682.5 698.0,682.9 699.5,681.3 701.0,682.4 702.5,681.7 704.0,682.5 705.5,682.3 707.0,682.7 708.5,682.4 710.0,681.9 711.5,682.7 713.0,682.5 714.5,683.0 716.0,682.4 717.5,681.8 719.0,682.4 720.5,681.6 722.0,682.7 723.5,681.5 725.0,682.9 726.5,682.8 728.0,682.1 729.5,681.2 731.0,681.8 732.5,682.9 734.0,682.1 735.5,681.5 737.0,682.5 738.5,681.6 740.0,681.7 741.5,682.1 743.0,682.6 744.5,682.5 746.0,682.5 747.5,682.8 749.0,682.3 750.5,682.4 752.0,682.1 753.5,682.9 755.0,682.5 756.5,683.0 758.0,682.4 759.5,680.3 761.0,682.9 762.5,682.7 764.0,682.7 765.5,682.9 767.0,681.4 768.5,682.1 770.0,681.9 771.5,679.2 773.0,682.3 774.5,683.0 776.0,682.5 777.5,681.8 779.0,681.9 780.5,682.0 782.0,681.2 783.5,681.9 785.0,682.6 786.5,682.5 788.0,682.3 789.5,682.3 791.0,681.4 792.5,682.2 794.0,681.8 795.5,681.2 797.0,681.8 798.5,682.0 800.0,682.3 801.5,682.1 803.0,682.3 804.5,682.0 806.0,682.6 807.5,682.2 809.0,681.9 810.5,682.6 812.0,682.5 813.5,681.4 815.0,679.2 816.5,682.1 818.0,679.0 819.5,682.3 821.0,682.7 822.5,681.4 824.0,682.6 825.5,683.0 827.0,682.8 828.5,682.2 830.0,681.4 831.5,681.7 833.0,682.3 834.5,681.5 836.0,682.0 837.5,682.6 839.0,682.5 840.5,681.9 842.0,679.7 843.5,681.6 845.0,682.2 846.5,681.5 848.0,678.7 849.5,681.6 851.0,683.0 852.5,682.3 854.0,681.4 855.5,682.7 857.0,682.0 858.5,682.6 860.0,681.3 861.5,682.2 863.0,681.9 864.5,683.0 866.0,681.3 867.5,682.2 869.0,681.6 870.5,682.2 872.0,681.4 873.5,681.9 875.0,683.0 876.5,682.9 878.0,681.8 879.5,682.0 881.0,681.8 882.5,681.2 884.0,679.9 885.5,681.4 887.0,679.1 888.5,681.7 890.0,682.4 891.5,682.6 893.0,681.3 894.5,681.8 896.0,682.1 897.5,682.7 899.0,681.4 900.5,679.2 902.0,682.0 903.5,682.7 905.0,681.4 906.5,681.3 908.0,681.6 909.5,681.6 911.0,682.4 912.5,682.8 914.0,681.7 915.5,682.2 917.0,682.8 918.5,681.9 920.0,678.8 921.5,682.8 923.0,683.0 924.5,679.6 926.0,681.8 927.5,681.2 929.0,681.5 930.5,681.7 932.0,681.8 933.5,681.8 935.0,682.9 936.5,681.3 938.0,681.8 939.5,682.2 941.0,682.7 942.5,681.8 944.0,681.9 945.5,681.6 947.0,682.9 948.5,682.0 950.0,681.6 951.5,682.8 953.0,682.4 954.5,681.7 956.0,681.9 957.5,682.9 959.0,682.4 960.5,682.3 962.0,682.1 963.5,682.3 965.0,682.2 966.5,681.4 968.0,683.0 969.5,682.3 971.0,682.2 972.5,682.6 974.0,681.3 975.5,681.9 977.0,681.4 978.5,680.4 980.0,681.9 981.5,681.3 983.0,681.8 984.5,681.8 986.0,682.2 987.5,681.9 989.0,681.6 990.5,682.8 992.0,681.3 993.5,681.4 995.0,682.8 996.5,682.9 998.0,682.8 999.5,681.6 1001.0,681.6 1002.5,681.2 1004.0,681.5 1005.5,681.6 1007.0,682.5 1008.5,681.5 1010.0,681.6 1011.5,682.7 1013.0,682.7 1014.5,682.7 1016.0,679.4 1017.5,682.0 1019.0,682.2 1020.5,679.6 1022.0,678.6 1023.5,681.9 1025.0,681.5 1026.5,681.8 1028.0,682.3 1029.5,682.7 1031.0,682.9 1032.5,682.0 1034.0,680.0 1035.5,682.5 1037.0,682.1 1038.5,682.8 1040.0,683.0 1041.5,682.5 1043.0,682.7 1044.5,680.9 1046.0,681.8 1047.5,682.4 1049.0,681.8 1050.5,682.9 1052.0,682.8 1053.5,682.8 1055.0,682.1 1056.5,679.6 1058.0,681.9 1059.5,682.0 1061.0,682.8 1062.5,681.2 1064.0,681.6 1065.5,682.9 1067.0,679.0 1068.5,681.7 1070.0,681.2 1071.5,682.9 1073.0,682.0 1074.5,681.4 1076.0,682.9 1077.5,682.1 1079.0,682.4 1080.5,682.5 1082.0,682.6 1083.5,681.8 1085.0,682.1 1086.5,681.6 1088.0,681.2 1089.5,682.8 1091.0,681.4 1092.5,681.7 1094.0,681.7 1095.5,682.8 1097.0,681.5 1098.5,682.1 1100.0,682.6 1101.5,682.1 1103.0,681.5 1104.5,681.2 1106.0,682.4 1107.5,682.0 1109.0,682.4 1110.5,682.3 1112.0,681.3 1113.5,682.1 1115.0,682.2 1116.5,681.8 1118.0,679.4 1119.5,679.6 1121.0,682.8 1122.5,681.5 1124.0,681.7 1125.5,678.6 1127.0,682.2 1128.5,681.3 1130.0,681.8 1131.5,681.9 1133.0,682.2 1134.5,682.7 1136.0,682.0 1137.5,682.5 1139.0,681.3 1140.5,681.8 1142.0,683.0 1143.5,680.7 1145.0,681.8 1146.5,681.7 1148.0,679.4 1149.5,681.9 1151.0,682.0 1152.5,681.6 1154.0,682.3 1155.5,682.1 1157.0,680.6 1158.5,681.2 1160.0,682.5 1161.5,683.0 1163.0,682.5 1164.5,681.7 1166.0,682.3 1167.5,681.4 1169.0,682.3 1170.5,682.4 1172.0,681.3 1173.5,682.1 1175.0,682.1 1176.5,682.1 1178.0,682.9 1179.5,682.8 1181.0,679.3 1182.5,682.9 1184.0,682.4 1185.5,681.4 1187.0,681.8 1188.5,682.5 1190.0,681.5 1191.5,681.4 1193.0,681.7 1194.5,682.6 1196.0,681.2 1197.5,682.6 1199.0,681.5 1200.5,681.6 1202.0,681.9 1203.5,682.8 1205.0,681.6 1206.5,681.6 1208.0,682.1 1209.5,682.3 1211.0,682.1 1212.5,681.3 1214.0,678.0 1215.5,682.9 1217.0,681.8 1218.5,682.9 1220.0,682.2 1221.5,681.3 1223.0,682.5 1224.5,681.6 1226.0,682.1 1227.5,681.7 1229.0,682.0 1230.5,681.5 1232.0,682.9 1233.5,681.5 1235.0,681.7 1236.5,682.3 1238.0,682.7 1239.5,682.6 1241.0,681.4 1242.5,682.0 1244.0,681.7 1245.5,682.0 1247.0,682.9 1248.5,682.5 1250.0,682.6 1251.5,681.3 1253.0,682.3 1254.5,681.8 1256.0,682.0 1257.5,681.9 1259.0,682.8 1260.5,682.6 1262.0,682.3 1263.5,682.8 1265.0,682.5 1266.5,681.8 1268.0,682.3 1269.5,680.7 1271.0,682.3 1272.5,682.0 1274.0,682.7 1275.5,682.9 1277.0,682.2 1278.5,682.9 1280.0,681.2 1281.5,681.3 1283.0,680.8 1284.5,682.8 1286.0,682.5 1287.5,682.0 1289.0,681.6 1290.5,682.9 1292.0,681.4 1293.5,681.7 1295.0,681.2 1296.5,682.9 1298.0,681.4 1299.5,681.3 1301.0,681.4 1302.5,682.8 1304.0,684.0 1305.5,684.0 1307.0,684.0 1308.5,684.0 1310.0,684.0 1311.5,684.0 1313.0,684.0 1314.5,684.0 1316.0,684.0 1317.5,684.0 1319.0,684.0 1320.5,684.0 1322.0,684.0 1323.5,684.0 1325.0,684.0 1326.5,684.0 1328.0,684.0 1329.5,684.0 1331.0,684.0 1332.5,684.0 1334.0,684.0 1335.5,684.0 1337.0,684.0 1338.5,684.0 1340.0,684.0 1341.5,684.0 1343.0,684.0 1344.5,684.0 1346.0,684.0 1346.0,686.0 1344.5,686.0 1343.0,686.0 1341.5,686.0 1340.0,686.0 1338.5,686.0 1337.0,686.0 1335.5,686.0 1334.0,686.0 1332.5,686.0 1331.0,686.0 1329.5,686.0 1328.0,686.0 1326.5,686.0 1325.0,686.0 1323.5,686.0 1322.0,686.0 1320.5,686.0 1319.0,686.0 1317.5,686.0 1316.0,686.0 1314.5,686.0 1313.0,686.0 1311.5,686.0 1310.0,686.0 1308.5,686.0 1307.0,686.0 1305.5,686.0 1304.0,686.0 1302.5,686.9 1301.0,688.0 1299.5,689.4 1298.0,687.9 1296.5,686.9 1295.0,688.0 1293.5,687.7 1292.0,688.5 1290.5,687.0 1289.0,688.9 1287.5,687.9 1286.0,687.2 1284.5,687.1 1283.0,689.1 1281.5,688.5 1280.0,689.0 1278.5,687.5 1277.0,688.1 1275.5,687.3 1274.0,687.2 1272.5,687.8 1271.0,687.4 1269.5,688.7 1268.0,687.2 1266.5,687.8 1265.0,687.7 1263.5,687.2 1262.0,687.8 1260.5,687.6 1259.0,687.2 1257.5,687.9 1256.0,688.4 1254.5,688.0 1253.0,687.3 1251.5,688.7 1250.0,687.0 1248.5,688.0 1247.0,687.3 1245.5,687.9 1244.0,688.2 1242.5,687.5 1241.0,688.0 1239.5,687.9 1238.0,686.9 1236.5,688.1 1235.0,688.8 1233.5,688.7 1232.0,686.8 1230.5,688.4 1229.0,688.0 1227.5,687.9 1226.0,687.8 1224.5,688.9 1223.0,687.7 1221.5,689.3 1220.0,687.9 1218.5,686.9 1217.0,687.9 1215.5,687.0 1214.0,691.9 1212.5,688.5 1211.0,687.5 1209.5,687.2 1208.0,687.3 1206.5,689.0 1205.0,688.6 1203.5,687.5 1202.0,688.6 1200.5,688.8 1199.0,688.2 1197.5,687.3 1196.0,689.4 1194.5,687.6 1193.0,688.2 1191.5,689.3 1190.0,688.5 1188.5,687.5 1187.0,688.5 1185.5,688.8 1184.0,687.4 1182.5,686.9 1181.0,690.0 1179.5,686.9 1178.0,687.2 1176.5,687.6 1175.0,687.6 1173.5,688.0 1172.0,688.7 1170.5,687.7 1169.0,687.9 1167.5,688.8 1166.0,688.3 1164.5,688.9 1163.0,687.1 1161.5,687.2 1160.0,687.9 1158.5,688.4 1157.0,689.4 1155.5,687.6 1154.0,687.3 1152.5,688.0 1151.0,688.6 1149.5,687.7 1148.0,690.7 1146.5,688.6 1145.0,688.1 1143.5,689.3 1142.0,686.7 1140.5,688.1 1139.0,689.3 1137.5,687.2 1136.0,687.5 1134.5,687.0 1133.0,687.4 1131.5,688.5 1130.0,688.2 1128.5,688.3 1127.0,687.5 1125.5,691.0 1124.0,688.1 1122.5,688.2 1121.0,687.5 1119.5,689.8 1118.0,691.4 1116.5,687.7 1115.0,688.0 1113.5,688.0 1112.0,688.6 1110.5,687.7 1109.0,687.4 1107.5,688.2 1106.0,688.1 1104.5,689.2 1103.0,688.3 1101.5,687.7 1100.0,687.9 1098.5,687.4 1097.0,688.5 1095.5,687.5 1094.0,688.0 1092.5,688.4 1091.0,688.0 1089.5,687.3 1088.0,689.1 1086.5,688.0 1085.0,688.0 1083.5,688.8 1082.0,687.8 1080.5,687.6 1079.0,687.6 1077.5,688.2 1076.0,687.2 1074.5,688.2 1073.0,687.6 1071.5,687.1 1070.0,689.3 1068.5,688.0 1067.0,690.8 1065.5,686.8 1064.0,688.6 1062.5,688.8 1061.0,687.0 1059.5,688.6 1058.0,688.3 1056.5,690.0 1055.0,687.5 1053.5,686.8 1052.0,686.9 1050.5,687.0 1049.0,688.6 1047.5,687.4 1046.0,688.8 1044.5,689.4 1043.0,687.7 1041.5,687.8 1040.0,687.3 1038.5,687.5 1037.0,687.3 1035.5,687.9 1034.0,690.5 1032.5,687.6 1031.0,686.9 1029.5,687.4 1028.0,688.1 1026.5,687.8 1025.0,689.1 1023.5,688.2 1022.0,690.1 1020.5,691.3 1019.0,687.3 1017.5,688.3 1016.0,689.8 1014.5,687.0 1013.0,686.9 1011.5,686.9 1010.0,688.1 1008.5,688.1 1007.0,687.6 1005.5,688.0 1004.0,687.9 1002.5,689.0 1001.0,688.0 999.5,688.9 998.0,687.2 996.5,687.2 995.0,687.4 993.5,688.8 992.0,688.0 990.5,686.9 989.0,688.6 987.5,688.6 986.0,687.6 984.5,688.4 983.0,687.7 981.5,688.2 980.0,687.6 978.5,689.5 977.0,688.4 975.5,688.6 974.0,688.6 972.5,687.5 971.0,687.4 969.5,687.3 968.0,686.9 966.5,688.5 965.0,688.2 963.5,687.9 962.0,687.4 960.5,687.6 959.0,687.8 957.5,687.4 956.0,687.9 954.5,688.3 953.0,687.4 951.5,687.6 950.0,689.1 948.5,687.8 947.0,686.8 945.5,688.7 944.0,687.7 942.5,688.0 941.0,687.1 939.5,688.2 938.0,688.2 936.5,689.4 935.0,686.8 933.5,688.4 932.0,688.6 930.5,688.9 929.0,689.0 927.5,688.3 926.0,688.5 924.5,690.8 923.0,686.9 921.5,687.2 920.0,691.0 918.5,688.1 917.0,687.4 915.5,687.5 914.0,688.6 912.5,687.3 911.0,687.5 909.5,688.0 908.0,688.5 906.5,688.7 905.0,688.8 903.5,687.6 902.0,688.1 900.5,690.4 899.0,688.8 897.5,687.1 896.0,687.3 894.5,687.7 893.0,688.0 891.5,687.1 890.0,687.6 888.5,688.6 887.0,690.0 885.5,688.1 884.0,690.4 882.5,688.9 881.0,688.0 879.5,688.0 878.0,688.0 876.5,687.2 875.0,687.1 873.5,687.5 872.0,688.8 870.5,688.1 869.0,688.1 867.5,687.9 866.0,688.9 864.5,687.3 863.0,688.2 861.5,687.9 860.0,688.5 858.5,687.1 857.0,688.5 855.5,687.0 854.0,688.6 852.5,687.3 851.0,686.7 849.5,689.0 848.0,692.4 846.5,688.2 845.0,687.5 843.5,687.8 842.0,690.6 840.5,688.7 839.0,687.2 837.5,687.0 836.0,688.3 834.5,688.3 833.0,687.6 831.5,688.7 830.0,688.7 828.5,687.9 827.0,687.4 825.5,687.2 824.0,687.7 822.5,688.1 821.0,687.2 819.5,688.0 818.0,690.8 816.5,688.1 815.0,690.5 813.5,688.5 812.0,687.5 810.5,687.2 809.0,688.5 807.5,688.0 806.0,687.0 804.5,687.4 803.0,688.0 801.5,687.5 800.0,687.4 798.5,687.6 797.0,688.1 795.5,688.4 794.0,688.0 792.5,687.5 791.0,687.9 789.5,687.3 788.0,688.2 786.5,687.2 785.0,687.6 783.5,687.9 782.0,688.8 780.5,688.1 779.0,688.1 777.5,688.3 776.0,687.3 774.5,687.4 773.0,687.7 771.5,690.4 770.0,688.3 768.5,687.5 767.0,688.7 765.5,687.4 764.0,687.3 762.5,687.7 761.0,687.4 759.5,688.9 758.0,687.2 756.5,686.9 755.0,687.8 753.5,687.1 752.0,688.1 750.5,687.2 749.0,687.8 747.5,687.0 746.0,687.8 744.5,687.3 743.0,687.7 741.5,687.9 740.0,688.3 738.5,688.2 737.0,687.5 735.5,688.1 734.0,688.1 732.5,687.3 731.0,688.6 729.5,689.3 728.0,688.5 726.5,686.8 725.0,687.5 723.5,688.4 722.0,687.1 720.5,688.4 719.0,687.5 717.5,688.7 716.0,687.8 714.5,687.1 713.0,687.1 711.5,687.5 710.0,687.9 708.5,687.3 707.0,687.0 705.5,688.2 704.0,687.9 702.5,687.9 701.0,687.4 699.5,689.3 698.0,686.7 696.5,687.2 695.0,688.1 693.5,689.4 692.0,693.2 690.5,687.7 689.0,687.1 687.5,689.1 686.0,687.4 684.5,688.5 683.0,687.2 681.5,688.4 680.0,688.5 678.5,688.7 677.0,689.9 675.5,689.8 674.0,687.8 672.5,687.8 671.0,689.1 669.5,687.3 668.0,688.6 666.5,688.1 665.0,688.8 663.5,690.7 662.0,688.6 660.5,689.3 659.0,687.6 657.5,686.8 656.0,687.2 654.5,687.7 653.0,688.2 651.5,688.3 650.0,688.7 648.5,687.7 647.0,689.1 645.5,687.7 644.0,688.2 642.5,689.5 641.0,688.8 639.5,688.0 638.0,687.4 636.5,687.0 635.0,687.9 633.5,687.7 632.0,687.7 630.5,687.4 629.0,688.3 627.5,687.9 626.0,687.6 624.5,687.9 623.0,687.4 621.5,686.9 620.0,687.9 618.5,688.0 617.0,687.7 615.5,687.5 614.0,689.2 612.5,687.6 611.0,688.6 609.5,689.0 608.0,686.7 606.5,687.4 605.0,688.3 603.5,688.5 602.0,691.7 600.5,687.6 599.0,687.4 597.5,688.2 596.0,688.5 594.5,687.1 593.0,687.9 591.5,689.8 590.0,688.9 588.5,688.9 587.0,687.3 585.5,692.9 584.0,686.9 582.5,687.8 581.0,687.5 579.5,688.6 578.0,687.5 576.5,686.8 575.0,687.5 573.5,687.3 572.0,688.4 570.5,687.3 569.0,687.8 567.5,687.6 566.0,687.8 564.5,688.5 563.0,688.1 561.5,687.4 560.0,687.4 558.5,687.3 557.0,687.6 555.5,687.2 554.0,687.8 552.5,687.9 551.0,687.6 549.5,688.2 548.0,686.8 546.5,687.5 545.0,687.5 543.5,688.1 542.0,688.6 540.5,688.9 539.0,687.3 537.5,687.7 536.0,687.2 534.5,688.5 533.0,687.4 531.5,687.2 530.0,688.7 528.5,687.0 527.0,688.6 525.5,688.8 524.0,687.3 522.5,687.3 521.0,687.6 519.5,687.8 518.0,687.2 516.5,690.4 515.0,688.5 513.5,688.4 512.0,688.5 510.5,687.7 509.0,687.3 507.5,688.3 506.0,687.6 504.5,687.6 503.0,688.4 501.5,688.2 500.0,690.4 498.5,687.5 497.0,688.2 495.5,688.4 494.0,687.3 492.5,688.3 491.0,691.7 489.5,686.9 488.0,687.4 486.5,687.3 485.0,688.0 483.5,688.0 482.0,688.4 480.5,688.4 479.0,688.0 477.5,687.4 476.0,689.1 474.5,687.4 473.0,687.7 471.5,687.0 470.0,687.2 468.5,687.5 467.0,687.5 465.5,687.3 464.0,686.9 462.5,689.9 461.0,687.0 459.5,687.0 458.0,688.4 456.5,688.6 455.0,687.2 453.5,687.3 452.0,688.7 450.5,688.7 449.0,687.3 447.5,687.4 446.0,687.5 444.5,687.5 443.0,687.0 441.5,686.7 440.0,687.7 438.5,688.1 437.0,688.0 435.5,688.2 434.0,687.8 432.5,687.4 431.0,688.6 429.5,689.2 428.0,687.2 426.5,688.4 425.0,689.1 423.5,687.6 422.0,688.8 420.5,688.4 419.0,688.6 417.5,688.4 416.0,688.9 414.5,687.2 413.0,687.4 411.5,687.1 410.0,686.8 408.5,688.6 407.0,687.6 405.5,687.1 404.0,688.2 402.5,687.2 401.0,688.1 399.5,688.0 398.0,687.8 396.5,688.9 395.0,691.8 393.5,688.1 392.0,686.9 390.5,688.0 389.0,688.3 387.5,687.2 386.0,688.2 384.5,687.3 383.0,687.9 381.5,687.1 380.0,688.1 378.5,687.3 377.0,687.2 375.5,687.7 374.0,687.3 372.5,687.7 371.0,688.5 369.5,687.1 368.0,688.8 366.5,689.0 365.0,688.3 363.5,687.3 362.0,688.9 360.5,687.6 359.0,687.9 357.5,687.3 356.0,687.1 354.5,689.1 353.0,689.3 351.5,688.1 350.0,687.3 348.5,687.5 347.0,688.8 345.5,687.8 344.0,687.1 342.5,686.8 341.0,687.0 339.5,687.4 338.0,688.5 336.5,687.0 335.0,687.8 333.5,688.5 332.0,688.9 330.5,687.5 329.0,688.5 327.5,688.4 326.0,692.6 324.5,686.9 323.0,688.3 321.5,689.2 320.0,688.3 318.5,687.2 317.0,686.8 315.5,687.0 314.0,688.9 312.5,687.4 311.0,686.9 309.5,687.2 308.0,688.2 306.5,686.9 305.0,687.1 303.5,687.2 302.0,687.1 300.5,688.1 299.0,686.9 297.5,687.4 296.0,688.1 294.5,688.0 293.0,687.3 291.5,691.2 290.0,687.6 288.5,688.6 287.0,687.3 285.5,688.7 284.0,688.9 282.5,687.8 281.0,688.7 279.5,688.8 278.0,688.0 276.5,687.0 275.0,687.6 273.5,688.4 272.0,688.0 270.5,687.5 269.0,688.4 267.5,687.5 266.0,688.9 264.5,687.9 263.0,687.3 261.5,687.5 260.0,688.7 258.5,688.0 257.0,688.9 255.5,687.0 254.0,686.9 252.5,687.3 251.0,687.8 249.5,688.7 248.0,688.1 246.5,687.3 245.0,689.3 243.5,689.0 242.0,688.5 240.5,687.3 239.0,687.7 237.5,688.5 236.0,687.8 234.5,687.5 233.0,688.7 231.5,691.0 230.0,688.3 228.5,687.9 227.0,691.5 225.5,687.9 224.0,687.8 222.5,688.2 221.0,687.6 219.5,688.7 218.0,689.1 216.5,688.7 215.0,688.4 213.5,688.5 212.0,688.1 210.5,687.7 209.0,688.0 207.5,687.7 206.0,687.3 204.5,689.1 203.0,687.7 201.5,688.5 200.0,688.4 198.5,687.2 197.0,688.8 195.5,686.9 194.0,688.7 192.5,688.9 191.0,688.2 189.5,687.9 188.0,689.1 186.5,687.9 185.0,688.1 183.5,688.1 182.0,688.9 180.5,687.1 179.0,689.1 177.5,687.6 176.0,687.4 174.5,687.7 173.0,687.8 171.5,688.0 170.0,687.5 168.5,691.1 167.0,687.8 165.5,689.1 164.0,689.1 162.5,691.1 161.0,688.9 159.5,688.3 158.0,688.1 156.5,688.2 155.0,687.6 153.5,688.4 152.0,689.9 150.5,688.0 149.0,691.5 147.5,687.5 146.0,689.3 144.5,688.1 143.0,688.0 141.5,688.6 140.0,687.2 138.5,687.6 137.0,687.9 135.5,688.4 134.0,688.6 132.5,686.7 131.0,688.3 129.5,688.2 128.0,687.7 126.5,687.1 125.0,688.0 123.5,691.1 122.0,689.2 120.5,687.5 119.0,687.9 117.5,688.0 116.0,687.0 114.5,687.7 113.0,687.7 111.5,688.6 110.0,687.4 108.5,687.9 107.0,688.9 105.5,689.2 104.0,687.8 102.5,687.9 101.0,688.0 99.5,688.2 98.0,687.0 96.5,691.4 95.0,687.9 93.5,687.7 92.0,687.0 90.5,687.9 89.0,688.7 87.5,688.5 86.0,687.3 84.5,688.4 83.0,688.5 81.5,687.9 80.0,687.7 78.5,687.7 77.0,686.9 75.5,688.3 74.0,686.9 72.5,688.3 71.0,688.5 69.5,688.5 68.0,689.1 66.5,690.1 65.0,687.7 63.5,687.8 62.0,688.9 60.5,687.5 59.0,687.8 57.5,688.3 56.0,687.1 54.5,687.0 53.0,687.6 51.5,687.4 50.0,688.0 48.5,687.7 47.0,688.5 45.5,687.9 44.0,688.6 42.5,687.7 41.0,688.3 39.5,685.9 38.0,686.2 36.5,686.2 35.0,686.4 33.5,686.7 32.0,686.7 30.5,687.5 29.0,686.0 27.5,686.0 26.0,686.0 24.5,686.0 23.0,686.0 21.5,686.0 20.0,686.0 18.5,686.0 17.0,686.0" fill="#840000"/><rect x="17" y="657" width="22" height="38" fill="none" stroke="#F0F0F0" stroke-width="2"/><rect x="23" y="658" width="6" height="36" fill="#1818A0"/><rect x="23" y="656" width="1.2" height="40" fill="#00F0FF"/><rect x="28" y="656" width="1.2" height="40" fill="#00F0FF"/><rect x="23" y="664" width="6" height="2" fill="#20FF20"/><rect x="23" y="684" width="6" height="2" fill="#FF2020"/><path d="M17 672.5l5 3.5-5 3.5z" fill="#00E000"/></svg>
<div style="left:17px;top:696px;width:1329px;height:15px;background:#D4D0C8;"></div>
<div style="left:14px;top:711px;width:1334px;height:1px;background:#fff;"></div>
<svg style="left:0px;top:0px" width="1366" height="712"><path d="M16.5 697v5M26.5 697v2M36.5 697v2M45.5 697v2M55.5 697v2M64.5 697v5M74.5 697v2M84.5 697v2M93.5 697v2M103.5 697v2M112.5 697v5M122.5 697v2M132.5 697v2M141.5 697v2M151.5 697v2M160.5 697v5M170.5 697v2M180.5 697v2M189.5 697v2M199.5 697v2M209.5 697v5M218.5 697v2M228.5 697v2M237.5 697v2M247.5 697v2M257.5 697v5M266.5 697v2M276.5 697v2M285.5 697v2M295.5 697v2M305.5 697v5M314.5 697v2M324.5 697v2M333.5 697v2M343.5 697v2M353.5 697v5M362.5 697v2M372.5 697v2M382.5 697v2M391.5 697v2M401.5 697v5M410.5 697v2M420.5 697v2M430.5 697v2M439.5 697v2M449.5 697v5M458.5 697v2M468.5 697v2M478.5 697v2M487.5 697v2M497.5 697v5M507.5 697v2M516.5 697v2M526.5 697v2M535.5 697v2M545.5 697v5M555.5 697v2M564.5 697v2M574.5 697v2M583.5 697v2M593.5 697v5M603.5 697v2M612.5 697v2M622.5 697v2M631.5 697v2M641.5 697v5M651.5 697v2M660.5 697v2M670.5 697v2M680.5 697v2M689.5 697v5M699.5 697v2M708.5 697v2M718.5 697v2M728.5 697v2M737.5 697v5M747.5 697v2M756.5 697v2M766.5 697v2M776.5 697v2M785.5 697v5M795.5 697v2M804.5 697v2M814.5 697v2M824.5 697v2M833.5 697v5M843.5 697v2M853.5 697v2M862.5 697v2M872.5 697v2M881.5 697v5M891.5 697v2M901.5 697v2M910.5 697v2M920.5 697v2M929.5 697v5M939.5 697v2M949.5 697v2M958.5 697v2M968.5 697v2M978.5 697v5M987.5 697v2M997.5 697v2M1006.5 697v2M1016.5 697v2M1026.5 697v5M1035.5 697v2M1045.5 697v2M1054.5 697v2M1064.5 697v2M1074.5 697v5M1083.5 697v2M1093.5 697v2M1102.5 697v2M1112.5 697v2M1122.5 697v5M1131.5 697v2M1141.5 697v2M1151.5 697v2M1160.5 697v2M1170.5 697v5M1179.5 697v2M1189.5 697v2M1199.5 697v2M1208.5 697v2M1218.5 697v5M1227.5 697v2M1237.5 697v2M1247.5 697v2M1256.5 697v2M1266.5 697v5M1275.5 697v2M1285.5 697v2M1295.5 697v2M1304.5 697v2M1314.5 697v5M1324.5 697v2M1333.5 697v2M1343.5 697v2" stroke="#000" stroke-width="1" shape-rendering="crispEdges"/></svg>
<div style="left:17.5px;top:699.98px;font-size:9px;line-height:11px;color:#000;letter-spacing:0.2px;white-space:pre">0:00</div>
<div style="left:65.5px;top:699.98px;font-size:9px;line-height:11px;color:#000;letter-spacing:0.2px;white-space:pre">0:05</div>
<div style="left:113.5px;top:699.98px;font-size:9px;line-height:11px;color:#000;letter-spacing:0.2px;white-space:pre">0:10</div>
<div style="left:161.5px;top:699.98px;font-size:9px;line-height:11px;color:#000;letter-spacing:0.2px;white-space:pre">0:15</div>
<div style="left:210.5px;top:699.98px;font-size:9px;line-height:11px;color:#000;letter-spacing:0.2px;white-space:pre">0:20</div>
<div style="left:258.5px;top:699.98px;font-size:9px;line-height:11px;color:#000;letter-spacing:0.2px;white-space:pre">0:25</div>
<div style="left:306.5px;top:699.98px;font-size:9px;line-height:11px;color:#000;letter-spacing:0.2px;white-space:pre">0:30</div>
<div style="left:354.5px;top:699.98px;font-size:9px;line-height:11px;color:#000;letter-spacing:0.2px;white-space:pre">0:35</div>
<div style="left:402.5px;top:699.98px;font-size:9px;line-height:11px;color:#000;letter-spacing:0.2px;white-space:pre">0:40</div>
<div style="left:450.5px;top:699.98px;font-size:9px;line-height:11px;color:#000;letter-spacing:0.2px;white-space:pre">0:45</div>
<div style="left:498.5px;top:699.98px;font-size:9px;line-height:11px;color:#000;letter-spacing:0.2px;white-space:pre">0:50</div>
<div style="left:546.5px;top:699.98px;font-size:9px;line-height:11px;color:#000;letter-spacing:0.2px;white-space:pre">0:55</div>
<div style="left:594.5px;top:699.98px;font-size:9px;line-height:11px;color:#000;letter-spacing:0.2px;white-space:pre">1:00</div>
<div style="left:642.5px;top:699.98px;font-size:9px;line-height:11px;color:#000;letter-spacing:0.2px;white-space:pre">1:05</div>
<div style="left:690.5px;top:699.98px;font-size:9px;line-height:11px;color:#000;letter-spacing:0.2px;white-space:pre">1:10</div>
<div style="left:738.5px;top:699.98px;font-size:9px;line-height:11px;color:#000;letter-spacing:0.2px;white-space:pre">1:15</div>
<div style="left:786.5px;top:699.98px;font-size:9px;line-height:11px;color:#000;letter-spacing:0.2px;white-space:pre">1:20</div>
<div style="left:834.5px;top:699.98px;font-size:9px;line-height:11px;color:#000;letter-spacing:0.2px;white-space:pre">1:25</div>
<div style="left:882.5px;top:699.98px;font-size:9px;line-height:11px;color:#000;letter-spacing:0.2px;white-space:pre">1:30</div>
<div style="left:930.5px;top:699.98px;font-size:9px;line-height:11px;color:#000;letter-spacing:0.2px;white-space:pre">1:35</div>
<div style="left:979.5px;top:699.98px;font-size:9px;line-height:11px;color:#000;letter-spacing:0.2px;white-space:pre">1:40</div>
<div style="left:1027.5px;top:699.98px;font-size:9px;line-height:11px;color:#000;letter-spacing:0.2px;white-space:pre">1:45</div>
<div style="left:1075.5px;top:699.98px;font-size:9px;line-height:11px;color:#000;letter-spacing:0.2px;white-space:pre">1:50</div>
<div style="left:1123.5px;top:699.98px;font-size:9px;line-height:11px;color:#000;letter-spacing:0.2px;white-space:pre">1:55</div>
<div style="left:1171.5px;top:699.98px;font-size:9px;line-height:11px;color:#000;letter-spacing:0.2px;white-space:pre">2:00</div>
<div style="left:1219.5px;top:699.98px;font-size:9px;line-height:11px;color:#000;letter-spacing:0.2px;white-space:pre">2:05</div>
<div style="left:1267.5px;top:699.98px;font-size:9px;line-height:11px;color:#000;letter-spacing:0.2px;white-space:pre">2:10</div>
<div style="left:1315.5px;top:699.98px;font-size:9px;line-height:11px;color:#000;letter-spacing:0.2px;white-space:pre">2:15</div>
<div style="left:1349px;top:140px;width:17px;height:573px;background:repeating-conic-gradient(#D4D0C8 0 25%,#fff 0 50%) 0 0/2px 2px;"></div>
<div style="left:1349px;top:140px;width:17px;height:16px;background:#D4D0C8;box-shadow:inset 1px 1px 0 #D4D0C8, inset 2px 2px 0 #fff, inset -1px -1px 0 #404040, inset -2px -2px 0 #808080;"></div>
<svg style="left:0;top:0" width="1366" height="768"><path d="M1353 150h7l-3.5-4z" fill="#000"/></svg>
<div style="left:1349px;top:341px;width:17px;height:170px;background:#D4D0C8;box-shadow:inset 1px 1px 0 #D4D0C8, inset 2px 2px 0 #fff, inset -1px -1px 0 #404040, inset -2px -2px 0 #808080;"></div>
<div style="left:1349px;top:697px;width:17px;height:16px;background:#D4D0C8;box-shadow:inset 1px 1px 0 #D4D0C8, inset 2px 2px 0 #fff, inset -1px -1px 0 #404040, inset -2px -2px 0 #808080;"></div>
<svg style="left:0;top:0" width="1366" height="768"><path d="M1353 703h7l-3.5 4z" fill="#000"/></svg>
<div style="left:0px;top:713px;width:1349px;height:17px;background:repeating-conic-gradient(#D4D0C8 0 25%,#fff 0 50%) 0 0/2px 2px;"></div>
<div style="left:0px;top:713px;width:16px;height:17px;background:#D4D0C8;box-shadow:inset 1px 1px 0 #D4D0C8, inset 2px 2px 0 #fff, inset -1px -1px 0 #404040, inset -2px -2px 0 #808080;"></div>
<svg style="left:0;top:0" width="1366" height="768"><path d="M9 717v7l-4-3.5z" fill="#000"/></svg>
<div style="left:16px;top:713px;width:23px;height:17px;background:#D4D0C8;box-shadow:inset 1px 1px 0 #D4D0C8, inset 2px 2px 0 #fff, inset -1px -1px 0 #404040, inset -2px -2px 0 #808080;"></div>
<div style="left:1349px;top:713px;width:17px;height:17px;background:#D4D0C8;box-shadow:inset 1px 1px 0 #D4D0C8, inset 2px 2px 0 #fff, inset -1px -1px 0 #404040, inset -2px -2px 0 #808080;"></div>
<svg style="left:0;top:0" width="1366" height="768"><path d="M1356 717v7l4-3.5z" fill="#000"/></svg>
<div style="left:0px;top:732px;width:70px;height:17px;box-shadow:inset 1px 1px 0 #808080, inset -1px -1px 0 #fff;"></div>
<div style="left:72px;top:732px;width:118px;height:17px;box-shadow:inset 1px 1px 0 #808080, inset -1px -1px 0 #fff;"></div>
<div style="left:192px;top:732px;width:298px;height:17px;box-shadow:inset 1px 1px 0 #808080, inset -1px -1px 0 #fff;"></div>
<div style="left:492px;top:732px;width:118px;height:17px;box-shadow:inset 1px 1px 0 #808080, inset -1px -1px 0 #fff;"></div>
<div style="left:612px;top:732px;width:754px;height:17px;box-shadow:inset 1px 1px 0 #808080, inset -1px -1px 0 #fff;"></div>
<div style="left:0px;top:751px;width:1366px;height:17px;box-shadow:inset 1px 1px 0 #808080, inset -1px -1px 0 #fff;"></div>
<div style="left:13px;top:734.19px;font-size:11px;line-height:14px;color:#000;white-space:pre">Stereo</div>
<svg style="left:60px;top:739px" width="8" height="5"><path d="M0 0h7l-3.5 4z" fill="#000"/></svg>
<div style="left:104px;top:734.19px;font-size:11px;line-height:14px;color:#000;white-space:pre">2:18.236</div>
<svg style="left:179px;top:739px" width="8" height="5"><path d="M0 0h7l-3.5 4z" fill="#000"/></svg>
<div style="left:280px;top:734.19px;font-size:11px;line-height:14px;color:#000;white-space:pre">0.650 to 1.227 (0.577)</div>
<svg style="left:479px;top:739px" width="8" height="5"><path d="M0 0h7l-3.5 4z" fill="#000"/></svg>
<div style="left:537px;top:734.19px;font-size:11px;line-height:14px;color:#000;white-space:pre">0.000</div>
<div style="left:2px;top:753.19px;font-size:11px;line-height:14px;color:#000;letter-spacing:-0.1px;white-space:pre">Copies the selection and puts it on the clipboard</div>
<div style="left:48px;top:37px;width:149px;height:439px;background:#D4D0C8;box-shadow:inset 1px 1px 0 #D4D0C8, inset 2px 2px 0 #fff, inset -1px -1px 0 #404040, inset -2px -2px 0 #808080;"></div>
<svg style="left:52px;top:41px" width="16" height="17" viewBox="0 0 16 17"><path d="M2.5 2v6.5h6.5" fill="none" stroke="#0040C0" stroke-width="2.6"/><path d="M3.5 8a5.2 5.2 0 1 1 5.5 6.5" fill="none" stroke="#0040C0" stroke-width="3"/><path d="M3.5 8a5.2 5.2 0 1 1 5.5 6.5" fill="none" stroke="#40A0F0" stroke-width="1.2"/></svg>
<div style="left:73px;top:43.19px;font-size:11px;line-height:14px;color:#000;letter-spacing:-0.35px;white-space:pre">Undo Silence</div>
<div style="left:120px;top:43.19px;font-size:11px;line-height:14px;color:#000;width:62px;text-align:right;white-space:pre">Ctrl+Z</div>
<svg style="left:52px;top:60px" width="16" height="17" viewBox="0 0 16 17"><path d="M13.5 2v6.5h-6.5" fill="none" stroke="#fff" stroke-width="2.4" transform="translate(1,1)"/><path d="M12.5 8a5.2 5.2 0 1 0 -5.5 6.5" fill="none" stroke="#fff" stroke-width="3" transform="translate(1,1)"/><path d="M13.5 2v6.5h-6.5" fill="none" stroke="#808080" stroke-width="2.4"/><path d="M12.5 8a5.2 5.2 0 1 0 -5.5 6.5" fill="none" stroke="#808080" stroke-width="3"/></svg>
<div style="left:73px;top:62.19px;font-size:11px;line-height:14px;color:#808080;text-shadow:1px 1px 0 #fff;letter-spacing:-0.35px;white-space:pre">Redo</div>
<div style="left:120px;top:62.19px;font-size:11px;line-height:14px;color:#808080;width:62px;text-align:right;text-shadow:1px 1px 0 #fff;white-space:pre">Ctrl+Y</div>
<div style="left:51px;top:81px;width:143px;height:1px;background:#808080;"></div>
<div style="left:51px;top:82px;width:143px;height:1px;background:#fff;"></div>
<svg style="left:52px;top:87px" width="16" height="17" viewBox="0 0 16 17"><path d="M5 1l4 8M11 1l-4 8" stroke="#8080a0" stroke-width="1.4"/><circle cx="5" cy="12" r="2.4" fill="none" stroke="#1030c0" stroke-width="1.8"/><circle cx="11" cy="12" r="2.4" fill="none" stroke="#1030c0" stroke-width="1.8"/></svg>
<div style="left:73px;top:89.19px;font-size:11px;line-height:14px;color:#000;letter-spacing:-0.35px;white-space:pre">Cut</div>
<div style="left:120px;top:89.19px;font-size:11px;line-height:14px;color:#000;width:62px;text-align:right;white-space:pre">Ctrl+X</div>
<div style="left:51px;top:105px;width:143px;height:19px;background:#0A246A;"></div>
<svg style="left:52px;top:106px" width="16" height="17" viewBox="0 0 16 17"><path d="M1.5 0.5h5l2.5 2.5v8.5h-7.5z" fill="#dfe6ff" stroke="#8080c8"/><path d="M3 5h4M3 7h4M3 9h4" stroke="#8080c8" stroke-width="0.9"/><path d="M6.5 4.5h5l2.5 2.5v8.5h-7.5z" fill="#eef2ff" stroke="#8080c8"/><path d="M8 9h4.5M8 11h4.5M8 13h4.5" stroke="#6a6ab8" stroke-width="0.9"/></svg>
<div style="left:73px;top:108.19px;font-size:11px;line-height:14px;color:#fff;letter-spacing:-0.35px;white-space:pre">Copy</div>
<div style="left:120px;top:108.19px;font-size:11px;line-height:14px;color:#fff;width:62px;text-align:right;white-space:pre">Ctrl+C</div>
<svg style="left:52px;top:125px" width="16" height="17" viewBox="0 0 16 17"><rect x="0.5" y="0" width="1.5" height="16" fill="#00E0E8"/><rect x="14" y="0" width="1.5" height="16" fill="#00E0E8"/><rect x="3" y="2" width="10" height="12" rx="1" fill="#4848B8"/><rect x="5" y="2" width="6" height="4" fill="#fff"/><rect x="5" y="9" width="6" height="5" fill="#D8D8F0"/><rect x="7" y="11" width="2" height="2" fill="#006060"/></svg>
<div style="left:73px;top:127.19px;font-size:11px;line-height:14px;color:#000;letter-spacing:-0.35px;white-space:pre">Copy To<span style="letter-spacing:0.9px">...</span></div>
<svg style="left:52px;top:144px" width="16" height="17" viewBox="0 0 16 17"><path d="M1.5 15.5v-12.5q0-2.5 2.5-2.5h6q3 0 3 3v12z" fill="#fff" transform="translate(1,1)"/><path d="M1.5 15.5v-12.5q0-2.5 2.5-2.5h6q3 0 3 3v12z" fill="#808080"/></svg>
<div style="left:73px;top:146.19px;font-size:11px;line-height:14px;color:#808080;text-shadow:1px 1px 0 #fff;letter-spacing:-0.35px;white-space:pre">Paste</div>
<div style="left:120px;top:146.19px;font-size:11px;line-height:14px;color:#808080;width:62px;text-align:right;text-shadow:1px 1px 0 #fff;white-space:pre">Ctrl+V</div>
<div style="left:73px;top:165.19px;font-size:11px;line-height:14px;color:#000;letter-spacing:-0.35px;white-space:pre">Paste At</div>
<svg style="left:184px;top:167px" width="5" height="8"><path d="M0 0v7l4-3.5z" fill="#000"/></svg>
<svg style="left:52px;top:182px" width="16" height="17" viewBox="0 0 16 17"><path d="M1.5 15.5v-12.5q0-2.5 2.5-2.5h6q3 0 3 3v12z" fill="#fff" transform="translate(1,1)"/><path d="M1.5 15.5v-12.5q0-2.5 2.5-2.5h6q3 0 3 3v12z" fill="#808080"/></svg>
<div style="left:73px;top:184.19px;font-size:11px;line-height:14px;color:#808080;text-shadow:1px 1px 0 #fff;letter-spacing:-0.35px;white-space:pre">Paste New</div>
<div style="left:120px;top:184.19px;font-size:11px;line-height:14px;color:#808080;width:62px;text-align:right;text-shadow:1px 1px 0 #fff;white-space:pre">Ctrl+P</div>
<svg style="left:52px;top:201px" width="16" height="17" viewBox="0 0 16 17"><path d="M1.5 15.5v-12.5q0-2.5 2.5-2.5h6q3 0 3 3v12z" fill="#fff" transform="translate(1,1)"/><path d="M1.5 15.5v-12.5q0-2.5 2.5-2.5h6q3 0 3 3v12z" fill="#808080"/></svg>
<div style="left:73px;top:203.19px;font-size:11px;line-height:14px;color:#808080;text-shadow:1px 1px 0 #fff;letter-spacing:-0.35px;white-space:pre">Mix<span style="letter-spacing:0.9px">...</span></div>
<div style="left:120px;top:203.19px;font-size:11px;line-height:14px;color:#808080;width:62px;text-align:right;text-shadow:1px 1px 0 #fff;white-space:pre">Ctrl+M</div>
<svg style="left:52px;top:220px" width="16" height="17" viewBox="0 0 16 17"><path d="M1.5 15.5v-12.5q0-2.5 2.5-2.5h6q3 0 3 3v12z" fill="#fff" transform="translate(1,1)"/><path d="M1.5 15.5v-12.5q0-2.5 2.5-2.5h6q3 0 3 3v12z" fill="#808080"/></svg>
<div style="left:73px;top:222.19px;font-size:11px;line-height:14px;color:#808080;text-shadow:1px 1px 0 #fff;letter-spacing:-0.35px;white-space:pre">Crossfade<span style="letter-spacing:0.9px">...</span></div>
<div style="left:120px;top:222.19px;font-size:11px;line-height:14px;color:#808080;width:62px;text-align:right;text-shadow:1px 1px 0 #fff;white-space:pre">Ctrl+D</div>
<svg style="left:52px;top:239px" width="16" height="17" viewBox="0 0 16 17"><path d="M1.5 15.5v-12.5q0-2.5 2.5-2.5h6q3 0 3 3v12z" fill="#fff" transform="translate(1,1)"/><path d="M1.5 15.5v-12.5q0-2.5 2.5-2.5h6q3 0 3 3v12z" fill="#808080"/></svg>
<div style="left:73px;top:241.19px;font-size:11px;line-height:14px;color:#808080;text-shadow:1px 1px 0 #fff;letter-spacing:-0.35px;white-space:pre">Overwrite</div>
<div style="left:120px;top:241.19px;font-size:11px;line-height:14px;color:#808080;width:62px;text-align:right;text-shadow:1px 1px 0 #fff;white-space:pre">Ctrl+K</div>
<svg style="left:52px;top:258px" width="16" height="17" viewBox="0 0 16 17"><path d="M1.5 15.5v-12.5q0-2.5 2.5-2.5h6q3 0 3 3v12z" fill="#fff" transform="translate(1,1)"/><path d="M1.5 15.5v-12.5q0-2.5 2.5-2.5h6q3 0 3 3v12z" fill="#808080"/></svg>
<div style="left:73px;top:260.19px;font-size:11px;line-height:14px;color:#808080;text-shadow:1px 1px 0 #fff;letter-spacing:-0.35px;white-space:pre">Replace</div>
<div style="left:120px;top:260.19px;font-size:11px;line-height:14px;color:#808080;width:62px;text-align:right;text-shadow:1px 1px 0 #fff;white-space:pre">Ctrl+R</div>
<svg style="left:52px;top:277px" width="16" height="17" viewBox="0 0 16 17"><rect x="1" y="1" width="1.6" height="14" fill="#00E8F0"/><rect x="13.4" y="1" width="1.6" height="14" fill="#00E8F0"/><rect x="2.4" y="1" width="0.8" height="14" fill="#008080"/><rect x="14.6" y="1" width="0.8" height="14" fill="#008080"/><path d="M3.5 3l9 10M12.5 3l-9 10" stroke="#900000" stroke-width="1.6"/></svg>
<div style="left:73px;top:279.19px;font-size:11px;line-height:14px;color:#000;letter-spacing:-0.35px;white-space:pre">Delete</div>
<div style="left:120px;top:279.19px;font-size:11px;line-height:14px;color:#000;width:62px;text-align:right;white-space:pre">Del</div>
<svg style="left:52px;top:296px" width="16" height="17" viewBox="0 0 16 17"><rect x="6" y="1" width="1.6" height="14" fill="#00E8F0"/><rect x="8.6" y="1" width="1.6" height="14" fill="#00E8F0"/><rect x="7.6" y="1" width="1" height="14" fill="#008080"/><path d="M0.5 5l4.5 4.5M5 5l-4.5 4.5M11 5l4.5 4.5M15.5 5l-4.5 4.5" stroke="#900000" stroke-width="1.7"/></svg>
<div style="left:73px;top:298.19px;font-size:11px;line-height:14px;color:#000;letter-spacing:-0.35px;white-space:pre">Trim</div>
<div style="left:120px;top:298.19px;font-size:11px;line-height:14px;color:#000;width:62px;text-align:right;white-space:pre">Ctrl+T</div>
<svg style="left:52px;top:315px" width="16" height="17" viewBox="0 0 16 17"><path d="M0.5 5.5l4 4M4.5 5.5l-4 4M10.5 5.5l4 4M14.5 5.5l-4 4" stroke="#909010" stroke-width="1.6"/><rect x="4" y="11.5" width="1.5" height="1.5" fill="#000"/><rect x="7" y="11.5" width="1.5" height="1.5" fill="#000"/><rect x="10" y="11.5" width="1.5" height="1.5" fill="#000"/></svg>
<div style="left:73px;top:317.19px;font-size:11px;line-height:14px;color:#000;letter-spacing:-0.35px;white-space:pre">AutoTrim<span style="letter-spacing:0.9px">...</span></div>
<div style="left:120px;top:317.19px;font-size:11px;line-height:14px;color:#000;width:62px;text-align:right;white-space:pre">Ctrl+U</div>
<div style="left:51px;top:336px;width:143px;height:1px;background:#808080;"></div>
<div style="left:51px;top:337px;width:143px;height:1px;background:#fff;"></div>
<svg style="left:52px;top:342px" width="16" height="17" viewBox="0 0 16 17"><circle cx="8" cy="8" r="5" fill="#000090"/><circle cx="8" cy="8" r="2.8" fill="#D4D0C8"/><path d="M5.5 11.5l5-7" stroke="#000090" stroke-width="1.6"/></svg>
<div style="left:73px;top:344.19px;font-size:11px;line-height:14px;color:#000;letter-spacing:-0.35px;white-space:pre">Mute</div>
<svg style="left:52px;top:361px" width="16" height="17" viewBox="0 0 16 17"><path d="M0.5 0.5h8l3 3v8h-11z" fill="#f0f4ff" stroke="#8080c0"/><path d="M4.5 4.5h8l3 3v8h-11z" fill="#e8ecff" stroke="#8080c0"/><path d="M8 13v-7M5 8l3-3 3 3" stroke="#000080" stroke-width="2" fill="none"/></svg>
<div style="left:73px;top:363.19px;font-size:11px;line-height:14px;color:#000;letter-spacing:-0.35px;white-space:pre">Insert Silence<span style="letter-spacing:0.9px">...</span></div>
<svg style="left:52px;top:380px" width="16" height="17" viewBox="0 0 16 17"><rect x="1" y="1" width="1.6" height="14" fill="#00E8F0"/><rect x="13.4" y="1" width="1.6" height="14" fill="#00E8F0"/><rect x="2.4" y="1" width="0.8" height="14" fill="#008080"/><rect x="14.6" y="1" width="0.8" height="14" fill="#008080"/><rect x="4" y="3" width="8.5" height="9.5" fill="#f0f4ff" stroke="#0000e0" stroke-width="1.6"/><rect x="4" y="2.5" width="8.5" height="2" fill="#0000d0"/><rect x="11" y="2.6" width="1" height="1" fill="#f04040"/></svg>
<div style="left:73px;top:382.19px;font-size:11px;line-height:14px;color:#000;letter-spacing:-0.35px;white-space:pre">Select View</div>
<div style="left:120px;top:382.19px;font-size:11px;line-height:14px;color:#000;width:62px;text-align:right;white-space:pre">Ctrl+W</div>
<svg style="left:52px;top:399px" width="16" height="17" viewBox="0 0 16 17"><rect x="1" y="1" width="1.6" height="14" fill="#00E8F0"/><rect x="13.4" y="1" width="1.6" height="14" fill="#00E8F0"/><rect x="2.4" y="1" width="0.8" height="14" fill="#008080"/><rect x="14.6" y="1" width="0.8" height="14" fill="#008080"/><path d="M4.5 2.5h5l2.5 2.5v8.5h-7.5z" fill="#e8ecff" stroke="#7070c0"/><path d="M6 7h4.5M6 9h4.5M6 11h4.5" stroke="#7070c0"/></svg>
<div style="left:73px;top:401.19px;font-size:11px;line-height:14px;color:#000;letter-spacing:-0.35px;white-space:pre">Select All</div>
<div style="left:120px;top:401.19px;font-size:11px;line-height:14px;color:#000;width:62px;text-align:right;white-space:pre">Ctrl+A</div>
<div style="left:73px;top:420.19px;font-size:11px;line-height:14px;color:#000;letter-spacing:-0.35px;white-space:pre">Channel</div>
<svg style="left:184px;top:422px" width="5" height="8"><path d="M0 0v7l4-3.5z" fill="#000"/></svg>
<div style="left:73px;top:439.19px;font-size:11px;line-height:14px;color:#000;letter-spacing:-0.35px;white-space:pre">Marker</div>
<svg style="left:184px;top:441px" width="5" height="8"><path d="M0 0v7l4-3.5z" fill="#000"/></svg>
<div style="left:73px;top:458.19px;font-size:11px;line-height:14px;color:#000;letter-spacing:-0.35px;white-space:pre">Cue Point</div>
<svg style="left:184px;top:460px" width="5" height="8"><path d="M0 0v7l4-3.5z" fill="#000"/></svg></body></html>
